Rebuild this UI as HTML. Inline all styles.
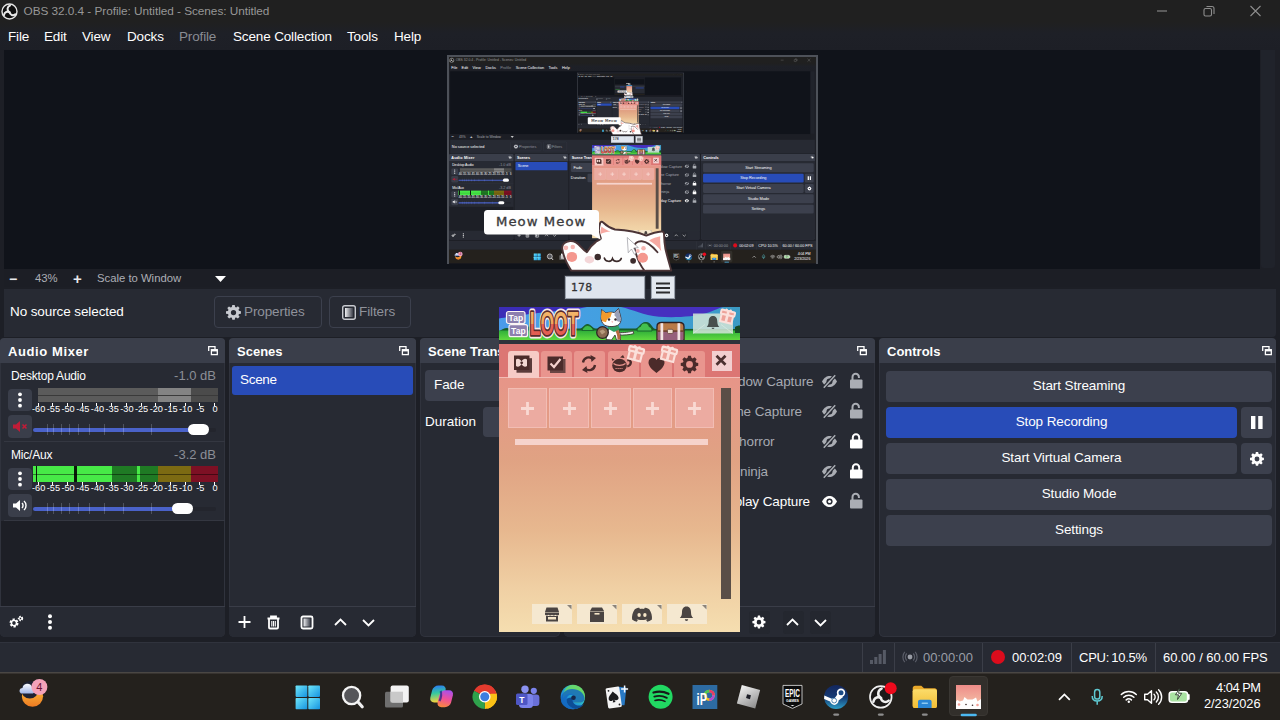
<!DOCTYPE html>
<html lang="en"><head><meta charset="utf-8"><title>OBS 32.0.4 - Profile: Untitled - Scenes: Untitled</title>
<style>
*{box-sizing:border-box;margin:0;padding:0}
html,body{width:1280px;height:720px;overflow:hidden;background:#1d1f26}
body{font-family:"Liberation Sans","DejaVu Sans",sans-serif;color:#fff}
.scr{position:absolute;left:0;top:0;width:1280px;height:720px;overflow:hidden;background:#1d1f26;font-size:14px;color:#fefefe}
.scr *{position:absolute}
.scr svg{overflow:visible}
.t{white-space:nowrap;line-height:1}
/* title + menu */
.titlebar{left:0;top:0;width:1280px;height:24px;background:#202020}
.titlebar .t{left:23.500px;top:5.800px;font-size:11.800px;color:#979797;letter-spacing:-0.04px}
.menubar{left:0;top:22px;width:1280px;height:28px;background:linear-gradient(#202020,#1e2027 40%,#1d1f26)}
.menubar .t{top:7.500px;font-size:13.5px;color:#fefefe;letter-spacing:-0.15px}
.menubar .dis{color:#8a8c93}
/* preview */
.pvarea{left:4px;top:50px;width:1256px;height:219px;background:#10131a}
.pvscroll{left:1261px;top:50px;width:13.500px;height:218px;background:#20232b;border-radius:0 0 3px 3px}
.pvframe{left:447px;top:55px;width:371px;height:208.500px;overflow:hidden;background:#10131a;border:2px solid #4d5159;border-bottom:0}
.pvframe .scr{transform-origin:0 0;transform:scale(0.28672)}
.zoomrow{left:4px;top:269px;width:1256px;height:17.500px;background:#1c1e25}
.zoomrow .t{top:3.500px;font-size:11.3px;color:#adafb6}
.ctx{left:4px;top:289px;width:1271.500px;height:47.500px;background:#272a33;border-radius:0 0 4px 0}
.ctx .t{font-size:13.5px;letter-spacing:-0.1px}
.cbtn{height:32px;top:7px;border:1px solid #3c404d;border-radius:4px;background:#272a33}
.cbtn .t{top:8px;color:#8f929b;font-size:13.5px}
/* docks */
.dock{top:340px;height:297px;background:#272a33;border-radius:0 0 5px 5px;box-shadow:inset 0 0 0 1px #30333d}
.dtitle{left:0;top:-2px;right:0;height:25px;background:#3a3e4a;border-radius:4px 4px 0 0}
.dock .dtitle .t{left:8px;top:6.500px;font-weight:bold;font-size:13px;letter-spacing:0;color:#fefefe}
.dtool{left:0;right:0;bottom:0;height:31px;border-top:1px solid #3a3d48;background:#272a33;border-radius:0 0 5px 5px}
.flt{top:8.300px;width:10px;height:10px}
/* mixer */
.mx .t{font-size:12px;letter-spacing:-0.2px}
.db{color:#8b8e97;font-size:13px !important;letter-spacing:0 !important}
.kb{width:24px;height:22px;background:#3a3e4a;border-radius:4px}
.lbl{font-size:9.200px !important;color:#fefefe;letter-spacing:0 !important}
.trk{height:4px;border-radius:2px;background:#4a62c9}
.knob{width:21px;height:11px;border-radius:6px;background:#fefefe}
/* buttons */
.btn{height:31px;border-radius:4px;background:#3c404d}
.btn .t{left:0;right:0;text-align:center;top:8.500px;font-size:13.5px;letter-spacing:-0.1px;color:#fefefe}
.src .t{font-size:13.5px;letter-spacing:-0.1px;color:#a6a9b1}
/* status */
.status{left:0;top:641.500px;width:1280px;height:31px;background:#272a33;box-shadow:inset 0 1px 0 #30333d}
.status .t{top:9.300px;font-size:13px;letter-spacing:-0.1px;color:#fefefe}
.sep{top:1px;width:1px;height:30px;background:#3b3e48}
/* taskbar */
.task{left:0;top:672px;width:1280px;height:48px;background:#24211d;box-shadow:inset 0 1.500px 0 #4a4744}
.task .t{font-size:12px;color:#fff}
</style></head>
<body>
<div class="scr"><div class="titlebar">
<svg style="left:1px;top:3px" width="17" height="17" viewBox="0 0 17 17"><circle cx="8.500" cy="8.500" r="7.500" fill="#0e0e0e" stroke="#e4e4e4" stroke-width="1.400"/><g fill="none" stroke="#e8e8e8" stroke-width="2" stroke-linecap="round"><path d="M9 2.500C6.200 3.600 5.800 7 7.800 8.700"/><path d="M14.300 11.200C12 13.200 8.900 11.900 8.500 9.200"/><path d="M3 12C3.400 9 6.600 7.800 8.700 9.400"/></g></svg>
<span class="t">OBS 32.0.4 - Profile: Untitled - Scenes: Untitled</span>
<svg style="left:1156px;top:5px" width="110" height="14" viewBox="0 0 110 14" fill="none" stroke="#8d8d8d" stroke-width="1.1"><path d="M1 6h10"/><rect x="48" y="3.500" width="7.500" height="7.500" rx="1.500"/><path d="M50.500 1.500h5.500a2 2 0 0 1 2 2v5.500"/><path d="M94.500 1l10 10M104.500 1l-10 10"/></svg>
</div>
<div class="menubar">
<span class="t" style="left:8px">File</span>
<span class="t" style="left:44px">Edit</span>
<span class="t" style="left:82px">View</span>
<span class="t" style="left:127px">Docks</span>
<span class="t dis" style="left:179px">Profile</span>
<span class="t" style="left:233px">Scene Collection</span>
<span class="t" style="left:347px">Tools</span>
<span class="t" style="left:394px">Help</span>
</div>
<div class="pvarea"></div>
<div class="pvscroll"></div>
<div class="pvframe"><div class="scr"><div class="titlebar">
<svg style="left:1px;top:3px" width="17" height="17" viewBox="0 0 17 17"><circle cx="8.500" cy="8.500" r="7.500" fill="#0e0e0e" stroke="#e4e4e4" stroke-width="1.400"/><g fill="none" stroke="#e8e8e8" stroke-width="2" stroke-linecap="round"><path d="M9 2.500C6.200 3.600 5.800 7 7.800 8.700"/><path d="M14.300 11.200C12 13.200 8.900 11.900 8.500 9.200"/><path d="M3 12C3.400 9 6.600 7.800 8.700 9.400"/></g></svg>
<span class="t">OBS 32.0.4 - Profile: Untitled - Scenes: Untitled</span>
<svg style="left:1156px;top:5px" width="110" height="14" viewBox="0 0 110 14" fill="none" stroke="#8d8d8d" stroke-width="1.1"><path d="M1 6h10"/><rect x="48" y="3.500" width="7.500" height="7.500" rx="1.500"/><path d="M50.500 1.500h5.500a2 2 0 0 1 2 2v5.500"/><path d="M94.500 1l10 10M104.500 1l-10 10"/></svg>
</div>
<div class="menubar">
<span class="t" style="left:8px">File</span>
<span class="t" style="left:44px">Edit</span>
<span class="t" style="left:82px">View</span>
<span class="t" style="left:127px">Docks</span>
<span class="t dis" style="left:179px">Profile</span>
<span class="t" style="left:233px">Scene Collection</span>
<span class="t" style="left:347px">Tools</span>
<span class="t" style="left:394px">Help</span>
</div>
<div class="pvarea"></div>
<div class="pvscroll"></div>
<div class="pvframe"><div class="scr"><div class="titlebar">
<svg style="left:1px;top:3px" width="17" height="17" viewBox="0 0 17 17"><circle cx="8.500" cy="8.500" r="7.500" fill="#0e0e0e" stroke="#e4e4e4" stroke-width="1.400"/><g fill="none" stroke="#e8e8e8" stroke-width="2" stroke-linecap="round"><path d="M9 2.500C6.200 3.600 5.800 7 7.800 8.700"/><path d="M14.300 11.200C12 13.200 8.900 11.900 8.500 9.200"/><path d="M3 12C3.400 9 6.600 7.800 8.700 9.400"/></g></svg>
<span class="t">OBS 32.0.4 - Profile: Untitled - Scenes: Untitled</span>
<svg style="left:1156px;top:5px" width="110" height="14" viewBox="0 0 110 14" fill="none" stroke="#8d8d8d" stroke-width="1.1"><path d="M1 6h10"/><rect x="48" y="3.500" width="7.500" height="7.500" rx="1.500"/><path d="M50.500 1.500h5.500a2 2 0 0 1 2 2v5.500"/><path d="M94.500 1l10 10M104.500 1l-10 10"/></svg>
</div>
<div class="menubar">
<span class="t" style="left:8px">File</span>
<span class="t" style="left:44px">Edit</span>
<span class="t" style="left:82px">View</span>
<span class="t" style="left:127px">Docks</span>
<span class="t dis" style="left:179px">Profile</span>
<span class="t" style="left:233px">Scene Collection</span>
<span class="t" style="left:347px">Tools</span>
<span class="t" style="left:394px">Help</span>
</div>
<div class="pvarea"></div>
<div class="pvscroll"></div>
<div class="pvframe"><div class="scr"><div style="left:4px;top:50px;width:1256px;height:219px;background:#10131a"></div><div style="left:0;top:338px;width:1276px;height:299px;background:#272a33"></div><div style="left:0;top:338px;width:1276px;height:25px;background:#3a3e4a"></div><div style="left:4px;top:289px;width:1272px;height:47px;background:#272a33"></div><div style="left:232px;top:366px;width:181px;height:29px;background:#284cb8"></div><div style="left:886px;top:406px;width:351px;height:31px;background:#284cb8"></div><div style="left:33px;top:466px;width:185px;height:16px;background:#37c03c"></div><div style="left:0;top:671px;width:1280px;height:49px;background:#24211d"></div><div style="left:499px;top:307px;width:241px;height:33px;background:#43a0e0"></div><div style="left:499px;top:344px;width:241px;height:288px;background:linear-gradient(#e89488,#f4dcb2)"></div><div style="left:484px;top:210px;width:115px;height:24px;background:#fefefe"></div><div style="left:565px;top:228px;width:105px;height:46px;border-radius:20px 20px 0 0;background:#fefefe"></div></div>
</div>
<div class="zoomrow">
<span class="t" style="left:5px;top:2.500px;font-size:14px;font-weight:bold;color:#e8e9ec">&#8722;</span>
<span class="t" style="left:31px">43%</span>
<span class="t" style="left:69px;top:1.500px;font-size:15px;font-weight:bold;color:#e8e9ec">+</span>
<span class="t" style="left:93px">Scale to Window</span>
<svg style="left:211px;top:7px" width="11" height="7" viewBox="0 0 11 7"><path d="M0 0h11l-5.500 6z" fill="#fefefe"/></svg>
</div>
<div class="ctx">
<span class="t" style="left:6px;top:16px">No source selected</span>
<div class="cbtn" style="left:210px;width:108px">
<svg style="left:11px;top:8px" width="15" height="15" viewBox="0 0 16 16"><path fill="#c8cad0" fill-rule="evenodd" d="M6.700 0h2.600l.4 2.100 1.200.5 1.800-1.200 1.800 1.800-1.200 1.800.5 1.200 2.100.4v2.600l-2.100.4-.5 1.200 1.200 1.800-1.800 1.800-1.800-1.200-1.200.5-.4 2.100H6.700l-.4-2.100-1.200-.5-1.800 1.200-1.800-1.800 1.200-1.800-.5-1.200L0 9.300V6.700l2.100-.4.500-1.200-1.200-1.800 1.800-1.800 1.800 1.200 1.200-.5zM8 5.200a2.800 2.800 0 1 0 0 5.600 2.800 2.800 0 0 0 0-5.600z"/></svg>
<span class="t" style="left:29px">Properties</span></div>
<div class="cbtn" style="left:325px;width:82px">
<svg style="left:12px;top:8px" width="14" height="15" viewBox="0 0 14 15"><rect x=".7" y=".7" width="12.600" height="13.600" rx="2" fill="none" stroke="#c8cad0" stroke-width="1.400"/><rect x="3" y="3" width="8" height="9" fill="url(#fg)"/></svg>
<span class="t" style="left:29px">Filters</span></div>
</div>

<!-- Audio mixer -->
<div class="dock mx" style="left:0;width:225px">
<div class="dtitle"><span class="t" style="letter-spacing:.6px !important">Audio Mixer</span><svg class="flt" style="left:208px" viewBox="0 0 10 10" fill="none" stroke="#fefefe" stroke-width="1.300"><path d="M.7 5V.7h6.300V3"/><rect x="3.400" y="3.700" width="5.900" height="4.900" fill="#3a3e4a"/><path d="M3.400 4.600h5.900" stroke-width="1.600"/></svg></div>
<div style="left:1px;top:181px;width:223px;height:85px;background:#1d1f26"></div>
<div style="left:4px;top:101px;width:221px;height:1px;background:#343741"></div>
<div style="left:4px;top:180px;width:221px;height:1px;background:#343741"></div>
<span class="t" style="left:11px;top:30px">Desktop Audio</span>
<span class="t db" style="right:9px;top:29px">-1.0 dB</span>
<div class="kb" style="left:8px;top:49px"><svg style="left:9px;top:3px" width="6" height="16" viewBox="0 0 6 16" fill="#fefefe"><circle cx="3" cy="2.300" r="1.900"/><circle cx="3" cy="8" r="1.900"/><circle cx="3" cy="13.700" r="1.900"/></svg></div>
<div style="left:38px;top:48px;width:180px;height:14px;background:linear-gradient(90deg,#5b5b5b 0,#5b5b5b 66.500%,#838383 66.500%,#838383 85%,#4b4b4b 85%)"></div>
<div style="left:38px;top:54.500px;width:180px;height:1px;background:#3a3a3a"></div>
<div style="left:37.6px;top:63.0px;width:1px;height:3px;background:#fefefe"></div><span class="t lbl" style="left:30.7px;top:65.2px;width:16px;text-align:center">-60</span><div style="left:52.3px;top:63.0px;width:1px;height:3px;background:#fefefe"></div><span class="t lbl" style="left:45.4px;top:65.2px;width:16px;text-align:center">-55</span><div style="left:67.0px;top:63.0px;width:1px;height:3px;background:#fefefe"></div><span class="t lbl" style="left:60.1px;top:65.2px;width:16px;text-align:center">-50</span><div style="left:81.7px;top:63.0px;width:1px;height:3px;background:#fefefe"></div><span class="t lbl" style="left:74.8px;top:65.2px;width:16px;text-align:center">-45</span><div style="left:96.4px;top:63.0px;width:1px;height:3px;background:#fefefe"></div><span class="t lbl" style="left:89.5px;top:65.2px;width:16px;text-align:center">-40</span><div style="left:111.1px;top:63.0px;width:1px;height:3px;background:#fefefe"></div><span class="t lbl" style="left:104.2px;top:65.2px;width:16px;text-align:center">-35</span><div style="left:125.8px;top:63.0px;width:1px;height:3px;background:#fefefe"></div><span class="t lbl" style="left:118.9px;top:65.2px;width:16px;text-align:center">-30</span><div style="left:140.5px;top:63.0px;width:1px;height:3px;background:#fefefe"></div><span class="t lbl" style="left:133.6px;top:65.2px;width:16px;text-align:center">-25</span><div style="left:155.2px;top:63.0px;width:1px;height:3px;background:#fefefe"></div><span class="t lbl" style="left:148.3px;top:65.2px;width:16px;text-align:center">-20</span><div style="left:169.9px;top:63.0px;width:1px;height:3px;background:#fefefe"></div><span class="t lbl" style="left:163.0px;top:65.2px;width:16px;text-align:center">-15</span><div style="left:184.6px;top:63.0px;width:1px;height:3px;background:#fefefe"></div><span class="t lbl" style="left:177.7px;top:65.2px;width:16px;text-align:center">-10</span><div style="left:199.3px;top:63.0px;width:1px;height:3px;background:#fefefe"></div><span class="t lbl" style="left:192.4px;top:65.2px;width:16px;text-align:center">-5</span><div style="left:214.0px;top:63.0px;width:1px;height:3px;background:#fefefe"></div><span class="t lbl" style="left:207.0px;top:65.2px;width:16px;text-align:center">0</span>
<div class="kb" style="left:8px;top:75px;height:23px"><svg style="left:4px;top:5px" width="16" height="13" viewBox="0 0 16 13"><path d="M1 4.500h3l4-3.500v11l-4-3.500H1z" fill="#c01c37"/><path d="M10.500 4.500l4 4m0-4l-4 4" stroke="#c01c37" stroke-width="1.600" fill="none"/></svg></div>
<div style="left:46.5px;top:84.0px;width:1px;height:11px;background:#4e525e"></div><div style="left:52.5px;top:84.0px;width:1px;height:11px;background:#4e525e"></div><div style="left:60.6px;top:84.0px;width:1px;height:11px;background:#4e525e"></div><div style="left:68.5px;top:84.0px;width:1px;height:11px;background:#4e525e"></div><div style="left:77.5px;top:84.0px;width:1px;height:11px;background:#4e525e"></div><div style="left:89.4px;top:84.0px;width:1px;height:11px;background:#4e525e"></div><div style="left:103.5px;top:84.0px;width:1px;height:11px;background:#4e525e"></div><div style="left:122.5px;top:84.0px;width:1px;height:11px;background:#4e525e"></div><div style="left:150.6px;top:84.0px;width:1px;height:11px;background:#4e525e"></div><div style="left:33px;top:87.5px;width:183px;height:4px;border-radius:2px;background:#23252d"></div><div class="trk" style="left:33px;top:87.5px;width:161.0px"></div><div style="left:46.5px;top:87.5px;width:1px;height:4px;background:#6f83d8"></div><div style="left:52.5px;top:87.5px;width:1px;height:4px;background:#6f83d8"></div><div style="left:60.6px;top:87.5px;width:1px;height:4px;background:#6f83d8"></div><div style="left:68.5px;top:87.5px;width:1px;height:4px;background:#6f83d8"></div><div style="left:77.5px;top:87.5px;width:1px;height:4px;background:#6f83d8"></div><div style="left:89.4px;top:87.5px;width:1px;height:4px;background:#6f83d8"></div><div style="left:103.5px;top:87.5px;width:1px;height:4px;background:#6f83d8"></div><div style="left:122.5px;top:87.5px;width:1px;height:4px;background:#6f83d8"></div><div style="left:150.6px;top:87.5px;width:1px;height:4px;background:#6f83d8"></div><div class="knob" style="left:188.0px;top:84.0px"></div>
<span class="t" style="left:11px;top:109px">Mic/Aux</span>
<span class="t db" style="right:9px;top:108px">-3.2 dB</span>
<div class="kb" style="left:8px;top:128px"><svg style="left:9px;top:3px" width="6" height="16" viewBox="0 0 6 16" fill="#fefefe"><circle cx="3" cy="2.300" r="1.900"/><circle cx="3" cy="8" r="1.900"/><circle cx="3" cy="13.700" r="1.900"/></svg></div>
<div style="left:33px;top:126px;width:185px;height:16px;background:linear-gradient(90deg,#47e947 0,#47e947 2.700px,#0a1a0a 2.700px,#0a1a0a 4.300px,#47e947 4.300px,#47e947 41px,#0a1a0a 41px,#0a1a0a 44px,#47e947 44px,#47e947 79px,#1f7a24 79px,#1f7a24 104px,#47e947 104px,#47e947 107px,#1f7a24 107px,#1f7a24 125px,#7c6a12 125px,#7c6a12 158px,#7d1024 158px)"></div>
<div style="left:33px;top:133.500px;width:185px;height:1px;background:rgba(0,0,0,.45)"></div>
<div style="left:37.6px;top:142.0px;width:1px;height:3px;background:#fefefe"></div><span class="t lbl" style="left:30.7px;top:144.2px;width:16px;text-align:center">-60</span><div style="left:52.3px;top:142.0px;width:1px;height:3px;background:#fefefe"></div><span class="t lbl" style="left:45.4px;top:144.2px;width:16px;text-align:center">-55</span><div style="left:67.0px;top:142.0px;width:1px;height:3px;background:#fefefe"></div><span class="t lbl" style="left:60.1px;top:144.2px;width:16px;text-align:center">-50</span><div style="left:81.7px;top:142.0px;width:1px;height:3px;background:#fefefe"></div><span class="t lbl" style="left:74.8px;top:144.2px;width:16px;text-align:center">-45</span><div style="left:96.4px;top:142.0px;width:1px;height:3px;background:#fefefe"></div><span class="t lbl" style="left:89.5px;top:144.2px;width:16px;text-align:center">-40</span><div style="left:111.1px;top:142.0px;width:1px;height:3px;background:#fefefe"></div><span class="t lbl" style="left:104.2px;top:144.2px;width:16px;text-align:center">-35</span><div style="left:125.8px;top:142.0px;width:1px;height:3px;background:#fefefe"></div><span class="t lbl" style="left:118.9px;top:144.2px;width:16px;text-align:center">-30</span><div style="left:140.5px;top:142.0px;width:1px;height:3px;background:#fefefe"></div><span class="t lbl" style="left:133.6px;top:144.2px;width:16px;text-align:center">-25</span><div style="left:155.2px;top:142.0px;width:1px;height:3px;background:#fefefe"></div><span class="t lbl" style="left:148.3px;top:144.2px;width:16px;text-align:center">-20</span><div style="left:169.9px;top:142.0px;width:1px;height:3px;background:#fefefe"></div><span class="t lbl" style="left:163.0px;top:144.2px;width:16px;text-align:center">-15</span><div style="left:184.6px;top:142.0px;width:1px;height:3px;background:#fefefe"></div><span class="t lbl" style="left:177.7px;top:144.2px;width:16px;text-align:center">-10</span><div style="left:199.3px;top:142.0px;width:1px;height:3px;background:#fefefe"></div><span class="t lbl" style="left:192.4px;top:144.2px;width:16px;text-align:center">-5</span><div style="left:214.0px;top:142.0px;width:1px;height:3px;background:#fefefe"></div><span class="t lbl" style="left:207.0px;top:144.2px;width:16px;text-align:center">0</span>
<div class="kb" style="left:8px;top:154px;height:23px"><svg style="left:4px;top:5px" width="16" height="13" viewBox="0 0 16 13"><path d="M1 4.500h3l4-3.500v11l-4-3.500H1z" fill="#fefefe"/><path d="M10 4a3.500 3.500 0 0 1 0 5M12 2a6 6 0 0 1 0 9" stroke="#fefefe" stroke-width="1.400" fill="none"/></svg></div>
<div style="left:46.5px;top:163.0px;width:1px;height:11px;background:#4e525e"></div><div style="left:52.5px;top:163.0px;width:1px;height:11px;background:#4e525e"></div><div style="left:60.6px;top:163.0px;width:1px;height:11px;background:#4e525e"></div><div style="left:68.5px;top:163.0px;width:1px;height:11px;background:#4e525e"></div><div style="left:77.5px;top:163.0px;width:1px;height:11px;background:#4e525e"></div><div style="left:89.4px;top:163.0px;width:1px;height:11px;background:#4e525e"></div><div style="left:103.5px;top:163.0px;width:1px;height:11px;background:#4e525e"></div><div style="left:122.5px;top:163.0px;width:1px;height:11px;background:#4e525e"></div><div style="left:150.6px;top:163.0px;width:1px;height:11px;background:#4e525e"></div><div style="left:33px;top:166.5px;width:183px;height:4px;border-radius:2px;background:#23252d"></div><div class="trk" style="left:33px;top:166.5px;width:145.0px"></div><div style="left:46.5px;top:166.5px;width:1px;height:4px;background:#6f83d8"></div><div style="left:52.5px;top:166.5px;width:1px;height:4px;background:#6f83d8"></div><div style="left:60.6px;top:166.5px;width:1px;height:4px;background:#6f83d8"></div><div style="left:68.5px;top:166.5px;width:1px;height:4px;background:#6f83d8"></div><div style="left:77.5px;top:166.5px;width:1px;height:4px;background:#6f83d8"></div><div style="left:89.4px;top:166.5px;width:1px;height:4px;background:#6f83d8"></div><div style="left:103.5px;top:166.5px;width:1px;height:4px;background:#6f83d8"></div><div style="left:122.5px;top:166.5px;width:1px;height:4px;background:#6f83d8"></div><div style="left:150.6px;top:166.5px;width:1px;height:4px;background:#6f83d8"></div><div class="knob" style="left:172.0px;top:163.0px"></div>
<div class="dtool"><svg style="left:8px;top:7.500px" width="16" height="14" viewBox="0 0 16 14"><circle cx="6" cy="8" r="3.200" fill="none" stroke="#fefefe" stroke-width="2.600" stroke-dasharray="2 1.350"/><circle cx="6" cy="8" r="2.600" fill="none" stroke="#fefefe" stroke-width="1.400"/><circle cx="12.500" cy="3.500" r="1.800" fill="none" stroke="#fefefe" stroke-width="1.800" stroke-dasharray="1.300 .9"/><circle cx="12.500" cy="3.500" r="1.400" fill="none" stroke="#fefefe" stroke-width="1"/></svg>
<svg style="left:47px;top:6.500px" width="6" height="16" viewBox="0 0 6 16" fill="#fefefe"><circle cx="3" cy="2.300" r="2"/><circle cx="3" cy="8" r="2"/><circle cx="3" cy="13.700" r="2"/></svg></div>
</div>

<!-- Scenes -->
<div class="dock" style="left:229px;width:187px">
<div class="dtitle"><span class="t">Scenes</span><svg class="flt" style="left:170px" viewBox="0 0 10 10" fill="none" stroke="#fefefe" stroke-width="1.300"><path d="M.7 5V.7h6.300V3"/><rect x="3.400" y="3.700" width="5.900" height="4.900" fill="#3a3e4a"/><path d="M3.400 4.600h5.900" stroke-width="1.600"/></svg></div>
<div style="left:3px;top:25.500px;width:181px;height:29.500px;background:#284cb8;border-radius:3px"><span class="t" style="left:8px;top:7.500px;font-size:13.5px;letter-spacing:-0.3px">Scene</span></div>
<div class="dtool"><svg style="left:9px;top:7.500px" width="140" height="15" viewBox="0 0 140 15" fill="none" stroke="#fefefe" stroke-width="1.800"><path d="M6.500 1v12M.5 7h12"/><path d="M29.500 3.500h12M33 3V1.500h5V3M31 4v8.500a1 1 0 0 0 1 1h7a1 1 0 0 0 1-1V4" /><path d="M33.800 6v5.500M35.500 6v5.500M37.300 6v5.500" stroke-width="1.100"/><rect x="63.500" y="1.500" width="11" height="12" rx="1.500"/><rect x="65.500" y="3.500" width="7" height="8" fill="url(#fg)" stroke="none"/><path d="M97 10l5.500-5.500 5.500 5.500"/><path d="M125 5l5.500 5.500 5.500-5.500"/></svg></div>
</div>

<!-- Scene transitions + sources -->
<div class="dock" style="left:420px;width:140px">
<div class="dtitle"><span class="t">Scene Transitions</span></div>
<div class="btn" style="left:5px;top:30px;width:131px;height:30.500px"><span class="t" style="left:9px;right:auto;top:8px">Fade</span></div>
<span class="t" style="left:5px;top:75px;font-size:13.5px">Duration</span>
<div class="btn" style="left:63px;top:66.500px;width:73px;height:30.500px"></div>
</div>
<div class="dock src" style="left:564px;width:310.500px">
<div class="dtitle"><span class="t">Sources</span><svg class="flt" style="left:293px" viewBox="0 0 10 10" fill="none" stroke="#fefefe" stroke-width="1.300"><path d="M.7 5V.7h6.300V3"/><rect x="3.400" y="3.700" width="5.900" height="4.900" fill="#3a3e4a"/><path d="M3.400 4.600h5.900" stroke-width="1.600"/></svg></div>
<span class="t" style="right:61px;top:34.500px">Window Capture</span>
<span class="t" style="right:72.500px;top:64.500px">Game Capture</span>
<span class="t" style="right:100px;top:94.500px">horror</span>
<span class="t" style="right:106.500px;top:124.500px">ninja</span>
<span class="t" style="right:64.500px;top:154.500px;color:#fefefe">Display Capture</span>
<svg style="left:257px;top:33.5px" width="17" height="15" viewBox="0 0 17 15"><path d="M1 7.500C3.500 3.200 6 2 8.500 2s5 1.200 7.500 5.500C13.500 11.800 11 13 8.500 13S3.500 11.800 1 7.500z" fill="#aaadb4"/><circle cx="8.500" cy="7.500" r="3" fill="#272a33"/><circle cx="8.500" cy="7.500" r="1.400" fill="#aaadb4"/><path d="M2.500 14L14.500 1" stroke="#272a33" stroke-width="3.600"/><path d="M2.800 13.800L14.200 1.200" stroke="#aaadb4" stroke-width="1.500"/></svg><svg style="left:285px;top:32.0px" width="14" height="17" viewBox="0 0 14 17"><path d="M3.500 8V5a3.200 3.200 0 0 1 6.400 0v1" fill="none" stroke="#aaadb4" stroke-width="2"/><rect x="1" y="7.500" width="12.500" height="9" rx="1" fill="#aaadb4"/></svg>
<svg style="left:257px;top:63.5px" width="17" height="15" viewBox="0 0 17 15"><path d="M1 7.500C3.500 3.200 6 2 8.500 2s5 1.200 7.500 5.500C13.500 11.800 11 13 8.500 13S3.500 11.800 1 7.500z" fill="#aaadb4"/><circle cx="8.500" cy="7.500" r="3" fill="#272a33"/><circle cx="8.500" cy="7.500" r="1.400" fill="#aaadb4"/><path d="M2.500 14L14.500 1" stroke="#272a33" stroke-width="3.600"/><path d="M2.800 13.800L14.200 1.200" stroke="#aaadb4" stroke-width="1.500"/></svg><svg style="left:285px;top:62.0px" width="14" height="17" viewBox="0 0 14 17"><path d="M3.500 8V5a3.200 3.200 0 0 1 6.400 0v1" fill="none" stroke="#aaadb4" stroke-width="2"/><rect x="1" y="7.500" width="12.500" height="9" rx="1" fill="#aaadb4"/></svg>
<svg style="left:257px;top:93.5px" width="17" height="15" viewBox="0 0 17 15"><path d="M1 7.500C3.500 3.200 6 2 8.500 2s5 1.200 7.500 5.500C13.500 11.800 11 13 8.500 13S3.500 11.800 1 7.500z" fill="#aaadb4"/><circle cx="8.500" cy="7.500" r="3" fill="#272a33"/><circle cx="8.500" cy="7.500" r="1.400" fill="#aaadb4"/><path d="M2.500 14L14.500 1" stroke="#272a33" stroke-width="3.600"/><path d="M2.800 13.800L14.200 1.200" stroke="#aaadb4" stroke-width="1.500"/></svg><svg style="left:285px;top:92.0px" width="14" height="17" viewBox="0 0 14 17"><path d="M3.800 9V5.500a3.200 3.200 0 0 1 6.400 0V9" fill="none" stroke="#fefefe" stroke-width="2"/><rect x="1" y="7.500" width="12.500" height="9" rx="1" fill="#fefefe"/></svg>
<svg style="left:257px;top:123.5px" width="17" height="15" viewBox="0 0 17 15"><path d="M1 7.500C3.500 3.200 6 2 8.500 2s5 1.200 7.500 5.500C13.500 11.800 11 13 8.500 13S3.500 11.800 1 7.500z" fill="#aaadb4"/><circle cx="8.500" cy="7.500" r="3" fill="#272a33"/><circle cx="8.500" cy="7.500" r="1.400" fill="#aaadb4"/><path d="M2.500 14L14.500 1" stroke="#272a33" stroke-width="3.600"/><path d="M2.800 13.800L14.200 1.200" stroke="#aaadb4" stroke-width="1.500"/></svg><svg style="left:285px;top:122.0px" width="14" height="17" viewBox="0 0 14 17"><path d="M3.800 9V5.500a3.200 3.200 0 0 1 6.400 0V9" fill="none" stroke="#fefefe" stroke-width="2"/><rect x="1" y="7.500" width="12.500" height="9" rx="1" fill="#fefefe"/></svg>
<svg style="left:257px;top:153.5px" width="17" height="15" viewBox="0 0 17 15"><path d="M1 7.500C3.500 3.200 6 2 8.500 2s5 1.200 7.500 5.500C13.500 11.800 11 13 8.500 13S3.500 11.800 1 7.500z" fill="#fefefe"/><circle cx="8.500" cy="7.500" r="3.100" fill="#272a33"/><circle cx="8.500" cy="7.500" r="1.600" fill="#fefefe"/></svg><svg style="left:285px;top:152.0px" width="14" height="17" viewBox="0 0 14 17"><path d="M3.500 8V5a3.200 3.200 0 0 1 6.400 0v1" fill="none" stroke="#aaadb4" stroke-width="2"/><rect x="1" y="7.500" width="12.500" height="9" rx="1" fill="#aaadb4"/></svg>
<div class="dtool"><div style="left:184.500px;top:4px;width:21px;height:22.500px;border-radius:3px;background:#24272f"></div><div style="left:218.500px;top:4px;width:21px;height:22.500px;border-radius:3px;background:#24272f"></div><div style="left:246px;top:4px;width:21px;height:22.500px;border-radius:3px;background:#24272f"></div><svg style="left:187px;top:7px" width="80" height="16" viewBox="0 0 80 16"><path transform="translate(1.400 1.600) scale(.82)" fill="#fefefe" fill-rule="evenodd" d="M6.700 0h2.600l.4 2.100 1.200.5 1.800-1.200 1.800 1.800-1.200 1.800.5 1.200 2.100.4v2.600l-2.100.4-.5 1.200 1.200 1.800-1.800 1.800-1.800-1.200-1.200.5-.4 2.100H6.700l-.4-2.100-1.200-.5-1.800 1.200-1.800-1.800 1.200-1.800-.5-1.200L0 9.300V6.700l2.100-.4.500-1.200-1.200-1.800 1.800-1.800 1.800 1.200 1.200-.5zM8 5.200a2.800 2.800 0 1 0 0 5.600 2.800 2.800 0 0 0 0-5.600z"/><g fill="none" stroke="#fefefe" stroke-width="1.800"><path d="M36 11l5.500-5.500L47 11"/><path d="M64 6l5.500 5.500L75 6"/></g></svg></div>
</div>

<!-- Controls -->
<div class="dock" style="left:879px;width:397px">
<div class="dtitle"><span class="t">Controls</span><svg class="flt" style="left:383px" viewBox="0 0 10 10" fill="none" stroke="#fefefe" stroke-width="1.300"><path d="M.7 5V.7h6.300V3"/><rect x="3.400" y="3.700" width="5.900" height="4.900" fill="#3a3e4a"/><path d="M3.400 4.600h5.900" stroke-width="1.600"/></svg></div>
<div class="btn" style="left:7px;top:30.500px;width:386px"><span class="t">Start Streaming</span></div>
<div class="btn" style="left:7px;top:66.500px;width:351px;background:#284cb8"><span class="t">Stop Recording</span></div>
<div class="btn" style="left:362px;top:66.500px;width:31px"><svg style="left:10px;top:9px" width="12" height="13" viewBox="0 0 12 13" fill="#fefefe"><rect x="0" y="0" width="4.400" height="13"/><rect x="7.200" y="0" width="4.400" height="13"/></svg></div>
<div class="btn" style="left:7px;top:102.500px;width:351px"><span class="t">Start Virtual Camera</span></div>
<div class="btn" style="left:362px;top:102.500px;width:31px"><svg style="left:9px;top:9px" width="14" height="14" viewBox="0 0 16 16"><path fill="#fefefe" fill-rule="evenodd" d="M6.700 0h2.600l.4 2.100 1.200.5 1.800-1.200 1.800 1.800-1.200 1.800.5 1.200 2.100.4v2.600l-2.100.4-.5 1.200 1.200 1.800-1.800 1.800-1.800-1.200-1.200.5-.4 2.100H6.700l-.4-2.100-1.200-.5-1.800 1.200-1.800-1.800 1.200-1.800-.5-1.200L0 9.300V6.700l2.100-.4.500-1.200-1.200-1.800 1.800-1.800 1.800 1.200 1.200-.5zM8 5.200a2.800 2.800 0 1 0 0 5.600 2.800 2.800 0 0 0 0-5.600z"/></svg></div>
<div class="btn" style="left:7px;top:138.500px;width:386px"><span class="t">Studio Mode</span></div>
<div class="btn" style="left:7px;top:174.500px;width:386px"><span class="t">Settings</span></div>
</div>

<!-- status bar -->
<div class="status">
<div class="sep" style="left:862px"></div><div class="sep" style="left:894px"></div><div class="sep" style="left:982px"></div><div class="sep" style="left:1071px"></div><div class="sep" style="left:1155px"></div>
<svg style="left:870px;top:8.500px" width="16" height="14" viewBox="0 0 16 14" fill="#565a65"><rect x="0" y="10" width="3" height="4"/><rect x="4.300" y="7" width="3" height="7"/><rect x="8.600" y="4" width="3" height="10"/><rect x="12.900" y="0" width="3" height="14"/></svg>
<svg style="left:903px;top:9.500px" width="14" height="12" viewBox="0 0 14 12"><circle cx="7" cy="6" r="2.400" fill="#9a9da6"/><path d="M3.800 2.500a5 5 0 0 0 0 7M10.200 2.500a5 5 0 0 1 0 7M1.800 .8a8 8 0 0 0 0 10.400M12.200 .8a8 8 0 0 1 0 10.400" fill="none" stroke="#5a5d68" stroke-width="1.200"/></svg>
<span class="t" style="left:923px;color:#9a9da6">00:00:00</span>
<div style="left:991px;top:8.500px;width:14px;height:14px;border-radius:7px;background:#dc0c1c"></div>
<span class="t" style="left:1012px">00:02:09</span>
<span class="t" style="left:1079px;word-spacing:-1.200px;letter-spacing:-.25px">CPU: 10.5%</span>
<span class="t" style="left:1163px;word-spacing:0;letter-spacing:0">60.00 / 60.00 FPS</span>
</div>
<div class="task">
<div style="left:948.500px;top:4px;width:39.500px;height:40px;border-radius:4px;background:#322f2b;border:1px solid #3a3733"></div>
<svg style="left:0;top:-.3px" width="1280" height="49" viewBox="0 671 1280 49">

<!-- widgets -->
<circle cx="32.500" cy="695.200" r="10.600" fill="url(#moon)"/>
<circle cx="29.800" cy="688.800" r="8.800" fill="#1d2232"/>
<path d="M21 692.500a3 3 0 0 1 1.500-5.600 5 5 0 0 1 9.500-1.200 3.600 3.600 0 0 1 1 6.800z" fill="url(#cloud)"/>
<circle cx="39.400" cy="686" r="8" fill="#f4a2ba"/>
<text x="39.400" y="690" text-anchor="middle" font-family="Liberation Sans,sans-serif" font-size="11" fill="#6d1233">4</text>
<!-- start -->
<g fill="url(#win)"><rect x="295.600" y="684.500" width="11.700" height="11.400" rx=".8"/><rect x="308.300" y="684.500" width="11.700" height="11.400" rx=".8"/><rect x="295.600" y="696.900" width="11.700" height="11.400" rx=".8"/><rect x="308.300" y="696.900" width="11.700" height="11.400" rx=".8"/></g>
<!-- search -->
<path d="M358 701l4.200 4.800" stroke="#f0f0f0" stroke-width="3.200" stroke-linecap="round"/>
<circle cx="351.600" cy="694.500" r="8.600" fill="#56565a" stroke="#f4f4f4" stroke-width="2.300"/>
<!-- task view -->
<rect x="385" y="690.700" width="18" height="15.700" rx="1.500" fill="#6f6f6f"/>
<rect x="390.600" y="684.500" width="18.200" height="16.900" rx="2" fill="#f3f3f3"/>
<rect x="390.600" y="690.700" width="12.400" height="10.700" fill="#c9c9c9"/>
<!-- copilot -->
<rect x="431" y="684.500" width="13.500" height="17" rx="5" transform="skewX(-14) translate(173 0)" fill="url(#cop1)"/>
<rect x="438.500" y="689.300" width="13.500" height="17" rx="5" transform="skewX(-14) translate(174 0)" fill="url(#cop2)"/>
<path d="M440.500 690c1.500 2 .5 7-1 10" stroke="#1f2a8a" stroke-width="2.200" fill="none" opacity=".75"/>
<!-- chrome -->
<g transform="translate(484.750 695.750)">
<path d="M0 0L-10.570 -6.100A12.200 12.200 0 0 1 10.570 -6.100z" fill="#e33b2e"/>
<path d="M0 0L10.570 -6.100A12.200 12.200 0 0 1 0 12.200z" fill="#fbc116"/>
<path d="M0 0L0 12.200A12.200 12.200 0 0 1 -10.570 -6.100z" fill="#2fa24c"/>
<path d="M-10.570 -6.100A12.200 12.200 0 0 1 10.570 -6.100L11.800 -3H0z" fill="#e33b2e"/>
<path d="M11.800 -3a12.200 12.200 0 0 1-9.300 14.900L5 2z" fill="#fbc116"/>
<circle r="5.800" fill="#fefefe"/><circle r="4.500" fill="#3b7de0"/>
</g>
<!-- teams -->
<circle cx="533.800" cy="689.800" r="3.100" fill="#7b83eb"/>
<rect x="529" y="693.500" width="10.400" height="11.500" rx="3" fill="#6a70d8"/>
<circle cx="525" cy="688.200" r="3.700" fill="#8b92f0"/>
<rect x="519" y="692.700" width="14" height="14.300" rx="3.500" fill="#7b83eb"/>
<rect x="516" y="692.500" width="11.500" height="11.500" rx="1.500" fill="#4e56c4"/>
<text x="521.750" y="701.600" text-anchor="middle" font-family="Liberation Sans,sans-serif" font-weight="bold" font-size="8.500" fill="#fefefe">T</text>
<!-- edge -->
<circle cx="572.800" cy="696" r="12.200" fill="url(#edge)"/>
<path d="M572 684c7-.5 13 5 13 12 0 3-2 5.500-5.500 5.500h-5c-1.500 0-1.500-1.500-.5-2.500 2-2 1-6-3-6.500-3-.3-6 1.500-8 4.500 0-7 3.500-12.500 9-13z" fill="#6fd95c" opacity=".8"/>
<path d="M561 699c0-7 5-11 11-11 7 0 11.500 4 12.500 8.500 .5 3-1.500 5-5 5h-6.500c-1.500 0-1.500-1.500-.5-2.500 1.500-1.500 1.500-3.500 0-4.500-2.500-1.500-6 .5-6 4 0 5 4 8.500 9 9.500-7 1-14.500-3-14.500-9z" fill="#1468c0" opacity=".85"/>
<path d="M566.500 698.500c0 5 4 8.500 9 9.500 4-.5 7-2.500 8.500-5-3 2-7 2-9.500 0-2-1.500-2.500-4-1.500-6-2-1.200-6.500.5-6.500 1.500z" fill="#0d4d96"/>
<circle cx="573.500" cy="696.800" r="2.300" fill="#17274a"/>
<!-- solitaire -->
<rect x="617" y="686" width="8.500" height="18" rx="1" fill="#2879c4" transform="rotate(6 621 695)"/>
<rect x="606.800" y="686.300" width="13.800" height="20.500" rx="1.300" fill="#f4f4f4" transform="rotate(-8 613.500 696.500)"/>
<path d="M613.500 690.500c2.500 2.800 5 4.500 5 6.800 0 2.700-3.300 3.200-4.500 1.200l.9 2.800h-2.800l.9-2.800c-1.200 2-4.500 1.500-4.500-1.200 0-2.300 2.500-4 5-6.800z" fill="#1c1c1e" transform="rotate(-8 613.500 696.500)"/>
<circle cx="608.500" cy="689.800" r=".9" fill="#1c1c1e"/><circle cx="619.500" cy="703.500" r=".9" fill="#1c1c1e"/>
<path d="M624.600 684.500v7M621.100 688h7" stroke="#f4f8ff" stroke-width="1.500"/>
<!-- spotify -->
<circle cx="660.600" cy="695.750" r="12" fill="#21d862"/>
<g fill="none" stroke="#17191a" stroke-linecap="round"><path d="M653.500 691.500c5-1.500 10.500-1 15 1.300" stroke-width="2.300"/><path d="M654.300 695.600c4.300-1.200 8.700-.8 12.500 1.200" stroke-width="1.900"/><path d="M655 699.400c3.500-1 7-.6 10 1" stroke-width="1.600"/></g>
<!-- ibis paint -->
<rect x="692.500" y="684" width="24.800" height="24" fill="#2d6ba2"/>
<circle cx="709.300" cy="694.300" r="4.300" fill="none" stroke="#f0c020" stroke-width="2.600"/>
<path d="M709.300 690a4.300 4.300 0 0 1 4.300 4.300" fill="none" stroke="#e8386a" stroke-width="2.600"/>
<path d="M705 694.300a4.300 4.300 0 0 1 4.300-4.300" fill="none" stroke="#48c858" stroke-width="2.600"/>
<path d="M713.600 694.300a4.300 4.300 0 0 1-4.300 4.300" fill="none" stroke="#b048d8" stroke-width="2.600"/>
<text x="696.600" y="704" font-family="Liberation Sans,sans-serif" font-weight="bold" font-size="16" fill="#fefefe" textLength="10.500" lengthAdjust="spacingAndGlyphs">iP</text>
<!-- roblox -->
<g transform="rotate(15 748.500 695.750)"><rect x="739" y="686.250" width="19" height="19" fill="url(#rbx)"/><rect x="746.500" y="693.700" width="4" height="4" fill="#1d1f28"/></g>
<!-- epic -->
<path d="M783 684.400h19v18.600l-9.500 4.400-9.500-4.400z" fill="#0c0c0c" stroke="#e8e8e8" stroke-width=".8"/>
<text x="792.500" y="696.300" text-anchor="middle" font-family="Liberation Sans,sans-serif" font-weight="bold" font-size="10.500" fill="#fefefe" textLength="15" lengthAdjust="spacingAndGlyphs">EPIC</text>
<text x="792.500" y="701" text-anchor="middle" font-family="Liberation Sans,sans-serif" font-weight="bold" font-size="3.800" fill="#fefefe" textLength="13" lengthAdjust="spacingAndGlyphs">GAMES</text>
<path d="M790.500 704h4l-2 1.200z" fill="#e8e8e8"/>
<!-- steam -->
<circle cx="836.100" cy="695.900" r="12" fill="url(#steam)"/>
<path d="M824.300 694.500l7.500 3.200c1-.6 2-.8 3-.6l3.300-4.600 5 3.600-4.500 3.500c0 2.500-2 4.300-4.300 4.300-2 0-3.700-1.400-4.200-3.300l-6-2.500z" fill="#fefefe"/>
<circle cx="841" cy="691.700" r="4.200" fill="#fefefe"/><circle cx="841" cy="691.700" r="2.500" fill="#1b4a86"/>
<circle cx="834.200" cy="699.600" r="2.400" fill="#fefefe" stroke="#2a6aa0" stroke-width=".8"/>
<!-- obs -->
<circle cx="880.800" cy="695.900" r="10.800" fill="#1c1a1a" stroke="#f0f0f0" stroke-width="1.700"/>
<g fill="none" stroke="#f0f0f0" stroke-width="2.500" stroke-linecap="round"><path d="M881.600 687.600C877.800 689.200 877.200 693.800 880 696.200"/><path d="M888.700 699.600C885.600 702.300 881.400 700.500 880.800 696.900"/><path d="M873.400 700.700C874 696.600 878.300 695 881.100 697.100"/></g>
<circle cx="890.700" cy="687.200" r="6" fill="#ee0a1c"/>
<!-- folder -->
<path d="M912.700 687.200c0-1.400 1-2.400 2.400-2.400h6.200l2.700 2.500h10.600c1.400 0 2.400 1 2.400 2.400v15c0 1.400-1 2.400-2.400 2.400h-19.500c-1.400 0-2.400-1-2.400-2.400z" fill="#e9a92a"/>
<rect x="912.700" y="688.300" width="24.300" height="18.800" rx="2" fill="url(#fold)"/>
<path d="M918 707.100v-6.300c0-1.200.8-2 2-2h9.600c1.200 0 2 .8 2 2v6.300z" fill="#2a86d6"/>
<rect x="921.500" y="701.500" width="6.600" height="1.600" rx=".8" fill="#8ccaf4"/>
<!-- bongo app -->
<g clip-path="url(#appc)"><rect x="956" y="684" width="25" height="24" fill="url(#app)"/>
<path d="M955 708v-6.500l2.500-2.500 2 1.500 3.500-1 1.500-3.500 3 2.500h5l3.500-2 1.500 4 3.500-2.500 2 4v6z" fill="#fefefe"/>
<circle cx="966" cy="703.500" r=".8" fill="#3c2c2c"/><circle cx="972.500" cy="704.200" r=".8" fill="#3c2c2c"/><circle cx="959" cy="703.500" r="1.300" fill="#f4a097"/><circle cx="977.500" cy="704" r="1.300" fill="#f4a097"/></g>
<rect x="960.600" y="712.700" width="16.200" height="2.600" rx="1.300" fill="#4cb9f2"/>
<rect x="833.300" y="712.400" width="5.800" height="2.400" rx="1.200" fill="#8d8d8d"/><rect x="877.900" y="712.400" width="5.800" height="2.400" rx="1.200" fill="#8d8d8d"/><rect x="921.900" y="712.400" width="5.800" height="2.400" rx="1.200" fill="#8d8d8d"/>
<!-- tray -->
<path d="M1059 698.800l5.400-5.400 5.400 5.400" fill="none" stroke="#fefefe" stroke-width="1.700"/>
<g fill="none" stroke="#5fcad2" stroke-width="1.500"><rect x="1094.600" y="688.600" width="5.200" height="9.400" rx="2.600"/><path d="M1092.200 695c0 3 2 5 5 5s5-2 5-5M1097.200 700v3.800"/></g>
<g fill="none" stroke="#fefefe" stroke-width="1.500" stroke-linecap="round"><path d="M1121.300 693.500a11 11 0 0 1 15 0"/><path d="M1123.700 696.300a7.500 7.500 0 0 1 10.200 0"/><path d="M1126.200 698.900a3.900 3.900 0 0 1 5.200 0"/></g><circle cx="1128.800" cy="700.800" r="1.200" fill="#fefefe"/>
<g fill="none" stroke="#fefefe" stroke-width="1.400" stroke-linejoin="round"><path d="M1144.700 693.300h2.800l4-3.600v12.600l-4-3.600h-2.800z"/><path d="M1154 693.300a3.700 3.700 0 0 1 0 5.400M1156.300 691a7 7 0 0 1 0 10M1158.600 688.700a10.300 10.300 0 0 1 0 14.600" stroke-linecap="round"/></g>
<rect x="1169.200" y="690.800" width="18.400" height="10.400" rx="2.800" fill="#a9e2a2" stroke="#fefefe" stroke-width="1.500"/><path d="M1188.800 694v4" stroke="#fefefe" stroke-width="1.800" stroke-linecap="round"/>
<path d="M1179.300 687.800l-3.800 6h3l-1 4.700 4.200-6.200h-3.100z" fill="#fefefe" stroke="#2c3a2c" stroke-width=".9"/>
</svg>
<span class="t" style="right:19.500px;top:9.800px;font-size:12.800px;letter-spacing:-.45px">4:04 PM</span>
<span class="t" style="right:19.500px;top:25.600px;font-size:12.800px;letter-spacing:-.05px">2/23/2026</span>
</div>
<!-- game window -->
<div style="left:499px;top:339px;width:241px;height:6px;background:#2f323b"></div>
<svg style="left:499px;top:307px" width="241" height="33" viewBox="0 0 241 33">

<g clip-path="url(#bclip)">
<rect width="241" height="33" fill="url(#sky)"/>
<path d="M0 0h88c-10 2.500-26 3.500-40 5S12 9.500 0 11.500z" fill="#3b2cb6"/>
<path d="M122 0C134 2.500 144 8.500 160 9.700S196 9.500 206 6.500 218 1.500 224 0z" fill="#4630bf"/>
<path d="M0 24c3-1.500 5-3 8-3s5 1.500 9 1.500 8-3 13-3 9 3 15 3 30-1 36-1c3 0 4-4.500 7.500-4.500s5 4.500 8 4.500h40c3 0 5-6.500 10.500-6.500S153 22 157 22h84v4H0z" fill="#175c2a"/>
<rect x="0" y="23.500" width="241" height="10" fill="url(#grass)"/>
<path d="M83 23.500c1-3 3-5 5.500-5s5 2 6 5z" fill="#3dbb48" stroke="#175c2a" stroke-width=".8"/>
<path d="M138 24c0-3 2-4 3.500-4.500C142 17 144 16 146 16s4 1.500 4 3.500c2 .5 3 2 3 4.500z" fill="#43c04e" stroke="#175c2a" stroke-width=".9"/>
<!-- Tap Tap -->
<rect x="7.500" y="4.500" width="18.500" height="12" rx="2" fill="#8d7fae" stroke="#fbf4f4" stroke-width="1.200"/>
<rect x="10" y="17.700" width="18.500" height="12" rx="2" fill="#8d7fae" stroke="#fbf4f4" stroke-width="1.200"/>
<text x="9.600" y="14" font-family="Liberation Sans,sans-serif" font-weight="bold" font-size="9.500" fill="#fefefe" textLength="14.500" lengthAdjust="spacingAndGlyphs">Tap</text>
<text x="12.100" y="27.200" font-family="Liberation Sans,sans-serif" font-weight="bold" font-size="9.500" fill="#fefefe" textLength="14.500" lengthAdjust="spacingAndGlyphs">Tap</text>
<!-- LOOT -->
<g font-family="Liberation Sans,sans-serif" font-weight="bold" font-size="33" transform="translate(30.800 28.200) scale(.53 1)">
<text x="0" y="0" fill="none" stroke="#fbeaea" stroke-width="7" stroke-linejoin="round">LOOT</text>
<text x="0" y="0" fill="none" stroke="#5a2c2c" stroke-width="3.600" stroke-linejoin="round">LOOT</text>
<text x="0" y="0" fill="url(#loot)">LOOT</text>
</g>
<!-- cat hero -->
<g>
<path d="M119 25.500c6 .5 12-.5 15-1.500l.8 2.600c-4 1.200-10 1.800-15.800 1.300z" fill="#f4f4f6" stroke="#3a2c30" stroke-width=".8"/>
<path d="M107 32.500c1-4 1.500-9 3.500-12l8 .5c2 3 3.500 8 3 12h-4l-1.500-5-3.500 5z" fill="#fefefe" stroke="#3a2c30" stroke-width=".8"/>
<path d="M118 20.500c2 3 3.500 8 3.500 12h-3c0-4-1-7-2.500-9z" fill="#b9683e"/>
<path d="M109.500 17.500l9.500.5 2 4-6 3-6.500-3.500z" fill="#2f9f62"/>
<path d="M102.500 2.500l4.500 3.500c2.500-1 6-1 8.500-.5l4-4 2 7.500c1 3 .5 6.500-1.500 8.500-3 2.500-11 2.800-14.500.5-3-2-3.800-5.500-3.200-8.500z" fill="#fefefe" stroke="#3a2c30" stroke-width=".9"/>
<path d="M102.800 3.200l4.200 3c2-1 4-1.200 6-1l-1.500 5c-2.500.5-4 2.500-4.500 5l-3.500-1c-1.500-2-1.700-4.500-1.200-6.500z" fill="#f39a2c"/>
<path d="M119.400 2.300l1.800 6.800c.6 2 .4 4-.5 5.800l-3-1c.3-2.500-.5-4.500-2.200-5.500l.2-2.800z" fill="#9aa0b8"/>
<circle cx="110" cy="12.500" r="1.200" fill="#3a2c30"/><circle cx="116.500" cy="12.500" r="1.200" fill="#3a2c30"/>
<path d="M112.300 14.500h2l-1 1.200z" fill="#f08a8a"/>
<circle cx="103.500" cy="25.500" r="5.800" fill="#8a6a50" stroke="#2e2426" stroke-width="1.300"/>
<path d="M100.500 24l3.500-1.500 2.500 2.500-3.500 2.500z" fill="#b79a7c"/>
</g>
<!-- chest -->
<g>
<path d="M158 33V19.500c0-2.500 2-4 4.500-4h18c2.500 0 4.500 1.500 4.500 4V33z" fill="#b87a48" stroke="#2e2022" stroke-width="1.300"/>
<rect x="158.700" y="24.500" width="25.600" height="8.500" fill="#96607c"/>
<rect x="158.700" y="23.300" width="25.600" height="1.600" fill="#6e4032"/>
<rect x="161.500" y="16.200" width="2.700" height="17" fill="#f3e4e4"/><rect x="178.500" y="16.200" width="2.700" height="17" fill="#f3e4e4"/>
<rect x="168.500" y="22.300" width="5.500" height="4.200" rx="1" fill="#f0e0d0" stroke="#5a3a30" stroke-width=".7"/>
<path d="M185 22.500h9" stroke="#175c2a" stroke-width="1.200"/>
</g>
<!-- notification -->
<rect x="194" y="6.500" width="40" height="20" fill="#cfe2d6" opacity=".88"/>
<path d="M194 26.500l12-9M234 26.500l-12-9" stroke="#e4f0e8" stroke-width=".7" opacity=".8"/>
<path d="M214 9c-3.200 0-4.300 2.500-4.300 5.500 0 2.800-.8 4.200-2 5.500h12.600c-1.200-1.300-2-2.700-2-5.500 0-3-1.100-5.500-4.300-5.500zm-1.400 11.700a1.400 1.400 0 0 0 2.800 0z" fill="#48504e"/>
<path d="M236 20c1.500-1 3-1.500 5-1.500V26h-5z" fill="#174a26"/>
</g>
<g transform="translate(221.5 1.5) scale(0.93) rotate(14 7 7)"><path d="M4.500 2.500c-1.500-2 .5-3 2-1.500l1 1.500 1-1.500c1.500-1.500 3.500-.5 2 1.500z" fill="#fbe0db"/><rect x="0" y="2.500" width="15" height="4.500" rx=".8" fill="#eda299" stroke="#fbe0db" stroke-width="2.100"/><rect x="1.200" y="7" width="12.600" height="8" fill="#eda299" stroke="#fbe0db" stroke-width="2.100"/><path d="M7.500 2.500V15" stroke="#fbe0db" stroke-width="2.800"/></g>
</svg>

<div style="left:499px;top:344px;width:241px;height:288px;background:linear-gradient(#e89488 0,#e69688 14%,#e0a283 40%,#e7b88f 65%,#f0d0a4 85%,#f5deb0 100%)"></div>
<div style="left:499px;top:344px;width:241px;height:34px;background:#dc7674;border-bottom:1.500px solid #f3bcb6"></div>
<div style="left:507.500px;top:351px;width:31px;height:27px;background:#f6cbc6;border-radius:3px 3px 0 0"></div>
<div style="left:541px;top:351px;width:31px;height:25.500px;background:#e9958e;border-radius:3px 3px 0 0"></div>
<div style="left:574px;top:351px;width:31px;height:25.500px;background:#e9958e;border-radius:3px 3px 0 0"></div>
<div style="left:607.500px;top:351px;width:31px;height:25.500px;background:#e9958e;border-radius:3px 3px 0 0"></div>
<div style="left:641px;top:351px;width:31px;height:25.500px;background:#e9958e;border-radius:3px 3px 0 0"></div>
<div style="left:674px;top:351px;width:31px;height:25.500px;background:#e9958e;border-radius:3px 3px 0 0"></div>
<div style="left:712px;top:350.500px;width:20px;height:20px;background:#f2cfd0"></div>
<svg style="left:499px;top:344px" width="241" height="34" viewBox="0 0 241 34">
<g fill="#4b2b2a">
<!-- tab1 cards with bow -->
<rect x="17.500" y="14.200" width="15.500" height="14.500" fill="#5b3b3a"/>
<rect x="15" y="11.500" width="15.500" height="14.500" fill="#4b2b2a"/>
<path d="M17 15.500c2-1.500 4-.5 5.500 2 1.500-2.500 3.500-3.500 5.500-2v6.500c-2 1.500-4 .5-5.500-2-1.500 2.500-3.500 3.500-5.500 2z" fill="#f1d6d2"/>
<circle cx="22.700" cy="18.800" r="1.400" fill="#4b2b2a"/>
<!-- tab2 check -->
<rect x="51" y="15" width="15.500" height="14" fill="#6a4644"/>
<rect x="48.500" y="12.500" width="15.500" height="14" />
<path d="M51.500 19.500l3.500 3.500 6.500-8" fill="none" stroke="#f3d0cc" stroke-width="2.200"/>
<!-- tab3 refresh -->
<g fill="none" stroke="#4b2b2a" stroke-width="2.300"><path d="M84 18.500a5.800 5.800 0 0 1 10-3.300"/><path d="M96 21a5.800 5.800 0 0 1-10 3.300"/></g>
<path d="M91.500 11l5.500 3-4.500 4zM88.500 29l-5.500-3 4.500-4z"/>
<!-- tab4 pot -->
<ellipse cx="120.500" cy="21.500" rx="7.300" ry="6.700"/>
<path d="M114.500 19.500c3 2.500 9 2.500 12 0" stroke="#e9958e" stroke-width="1.300" fill="none"/>
<path d="M116.500 24.500h7" stroke="#e9958e" stroke-width="1" fill="none" stroke-dasharray="1.200 .8"/>
<path d="M113.500 17l-1-3 3 1.500z"/><path d="M121 13.500l3-2.500 1.500 3z"/>
<path d="M128 15.500c3-1 5 .5 5 3s-2 4.500-4.500 5l-.5-2c1.500-.5 2.500-1.500 2.500-2.800s-1-1.700-2-1.200z"/>
<!-- tab5 heart -->
<path d="M157.500 29c-5-3.800-8-7-8-10.500 0-2.800 2-4.700 4.300-4.700 1.600 0 2.900.8 3.700 2.200.8-1.400 2.100-2.200 3.700-2.200 2.300 0 4.300 1.900 4.300 4.700 0 3.500-3 6.700-8 10.500z"/>
<!-- tab6 gear -->
<path fill-rule="evenodd" d="M188.800 11.500h3.400l.6 2.600 1.500.7 2.300-1.400 2.400 2.400-1.400 2.300.7 1.500 2.600.6v3.400l-2.600.6-.7 1.500 1.400 2.300-2.400 2.400-2.300-1.400-1.500.7-.6 2.600h-3.400l-.6-2.600-1.500-.7-2.300 1.400-2.400-2.400 1.400-2.300-.7-1.500-2.600-.6v-3.400l2.600-.6.7-1.500-1.400-2.300 2.400-2.400 2.300 1.400 1.500-.7zM190.500 17.800a4.100 4.100 0 1 0 0 8.200 4.100 4.100 0 0 0 0-8.200z" transform="translate(190.500 20.400) scale(.84) translate(-190.500 -21.900)"/>
<!-- close -->
<path d="M217.500 11.700l9 9M226.500 11.700l-9 9" stroke="#4b3030" stroke-width="2.700" fill="none"/>
</g>
<g transform="translate(129.5 1.0) scale(1.0) rotate(14 7 7)"><path d="M4.500 2.500c-1.500-2 .5-3 2-1.500l1 1.500 1-1.500c1.500-1.500 3.500-.5 2 1.500z" fill="#fbe0db"/><rect x="0" y="2.500" width="15" height="4.500" rx=".8" fill="#eda299" stroke="#fbe0db" stroke-width="2.100"/><rect x="1.200" y="7" width="12.600" height="8" fill="#eda299" stroke="#fbe0db" stroke-width="2.100"/><path d="M7.500 2.500V15" stroke="#fbe0db" stroke-width="2.800"/></g>
<g transform="translate(162.5 1.5) scale(1.0) rotate(14 7 7)"><path d="M4.500 2.500c-1.500-2 .5-3 2-1.500l1 1.500 1-1.500c1.500-1.500 3.500-.5 2 1.500z" fill="#fbe0db"/><rect x="0" y="2.500" width="15" height="4.500" rx=".8" fill="#eda299" stroke="#fbe0db" stroke-width="2.100"/><rect x="1.200" y="7" width="12.600" height="8" fill="#eda299" stroke="#fbe0db" stroke-width="2.100"/><path d="M7.500 2.500V15" stroke="#fbe0db" stroke-width="2.800"/></g>
</svg>
<!-- slots -->
<div style="left:507.5px;top:388px;width:39.500px;height:39.500px;background:#ecaba1;border:1px solid #f2bdb4"></div><svg style="left:520.7px;top:401.500px" width="13" height="13" viewBox="0 0 13 13"><path d="M6.500 0v13M0 6.500h13" stroke="#f9d9d3" stroke-width="2.800"/></svg><div style="left:549.3px;top:388px;width:39.500px;height:39.500px;background:#ecaba1;border:1px solid #f2bdb4"></div><svg style="left:562.5px;top:401.500px" width="13" height="13" viewBox="0 0 13 13"><path d="M6.500 0v13M0 6.500h13" stroke="#f9d9d3" stroke-width="2.800"/></svg><div style="left:591.1px;top:388px;width:39.500px;height:39.500px;background:#ecaba1;border:1px solid #f2bdb4"></div><svg style="left:604.3000000000001px;top:401.500px" width="13" height="13" viewBox="0 0 13 13"><path d="M6.500 0v13M0 6.500h13" stroke="#f9d9d3" stroke-width="2.800"/></svg><div style="left:632.9px;top:388px;width:39.500px;height:39.500px;background:#ecaba1;border:1px solid #f2bdb4"></div><svg style="left:646.1px;top:401.500px" width="13" height="13" viewBox="0 0 13 13"><path d="M6.500 0v13M0 6.500h13" stroke="#f9d9d3" stroke-width="2.800"/></svg><div style="left:674.7px;top:388px;width:39.500px;height:39.500px;background:#ecaba1;border:1px solid #f2bdb4"></div><svg style="left:687.9000000000001px;top:401.500px" width="13" height="13" viewBox="0 0 13 13"><path d="M6.500 0v13M0 6.500h13" stroke="#f9d9d3" stroke-width="2.800"/></svg>
<div style="left:515px;top:439px;width:193px;height:5.500px;background:#f6d3cc"></div>
<div style="left:720.500px;top:388px;width:10.500px;height:211px;background:#5a4e47"></div>
<div style="left:532.0px;top:604px;width:40px;height:20px;background:#f5e8d0"></div><svg style="left:567.0px;top:604.500px" width="4.500" height="4.500" viewBox="0 0 5 5"><path d="M0 0h5v5z" fill="#8c847b"/></svg><div style="left:577.0px;top:604px;width:40px;height:20px;background:#f5e8d0"></div><svg style="left:612.0px;top:604.500px" width="4.500" height="4.500" viewBox="0 0 5 5"><path d="M0 0h5v5z" fill="#8c847b"/></svg><div style="left:622.0px;top:604px;width:40px;height:20px;background:#f5e8d0"></div><svg style="left:657.0px;top:604.500px" width="4.500" height="4.500" viewBox="0 0 5 5"><path d="M0 0h5v5z" fill="#8c847b"/></svg><div style="left:667.0px;top:604px;width:40px;height:20px;background:#f5e8d0"></div><svg style="left:702.0px;top:604.500px" width="4.500" height="4.500" viewBox="0 0 5 5"><path d="M0 0h5v5z" fill="#8c847b"/></svg>
<svg style="left:532px;top:604px" width="176" height="20" viewBox="0 0 176 20" fill="#4a4442">
<!-- shop -->
<path d="M14.500 3.500h11l1.500 4.500h-14z"/><path d="M13 8.500h14v2.200c-.8 1-2.700 1-3.500 0-.8 1-2.700 1-3.500 0-.8 1-2.700 1-3.500 0-.8 1-2.700 1-3.500 0z"/><path d="M14 12h12v5.500H14z"/><rect x="16" y="13" width="8" height="2.500" fill="#f6e6c8"/>
<!-- box -->
<path d="M60 3.500h10l2 3.500H58z"/><rect x="58" y="7.500" width="14" height="10.500"/><rect x="62.500" y="9" width="5" height="1.600" fill="#f6e6c8"/>
<!-- discord -->
<g transform="translate(110 10.800) scale(.9) translate(-110 -10.800)"><path d="M102 4.500c2-1 4-1.500 5-1.500l.7 1.300c1.500-.2 3.100-.2 4.600 0L113 3c1 0 3 .5 5 1.500 2.500 3.700 3.500 7.500 3 11.500-1.700 1.300-3.500 2-5.200 2.500l-1.200-2c.8-.3 1.500-.7 2.200-1.200-3.800 1.800-9.800 1.800-13.600 0 .7.500 1.400.9 2.200 1.200l-1.200 2c-1.700-.5-3.500-1.200-5.200-2.500-.5-4 .5-7.800 3-11.500z"/>
<ellipse cx="106.800" cy="11" rx="1.900" ry="2.200" fill="#f6e6c8"/><ellipse cx="113.200" cy="11" rx="1.900" ry="2.200" fill="#f6e6c8"/></g>
<!-- bell -->
<path d="M154.500 2.500c-3.200 0-4.500 2.600-4.500 5.700 0 3-.8 4.600-2.200 5.800h13.400c-1.400-1.200-2.200-2.800-2.200-5.800 0-3.100-1.300-5.700-4.500-5.700zm-1.700 12.700a1.700 1.700 0 0 0 3.400 0z"/>
</svg>

<!-- counter -->
<div style="left:565px;top:275.500px;width:80px;height:23px;background:#dfe5ee;border:1px solid #9aa1ac;box-shadow:0 0 0 .7px #3a3d45"><span class="t" style="left:5px;top:6px;font-family:'DejaVu Sans',sans-serif;font-size:10.800px;color:#333335;letter-spacing:.2px;-webkit-text-stroke:.3px #333335">178</span></div>
<div style="left:651px;top:275.500px;width:23.500px;height:23px;background:#e3e8ef;border:1px solid #9aa1ac;box-shadow:0 0 0 .7px #3a3d45"><svg style="left:4px;top:5px" width="14" height="12" viewBox="0 0 14 12"><path d="M0 1.500h14M0 6h14M0 10.500h14" stroke="#2c2c2e" stroke-width="2.100"/></svg></div>

<!-- bongo cat -->
<svg style="left:540px;top:205px" width="160" height="90" viewBox="0 0 1280 720">
<g stroke="#4b3436" stroke-width="15" stroke-linejoin="round" stroke-linecap="round">
<path d="M250 525C215 470 185 400 178 350C173 315 203 292 240 288C275 285 300 303 325 333C343 353 360 368 375 378C390 350 420 315 445 297C462 286 478 278 487 268C480 245 472 225 471 205C472 180 476 160 481 145C484 132 497 130 505 140C530 165 565 185 600 196C680 200 780 215 850 245C890 228 940 214 972 212C988 211 992 222 992 235C993 275 997 315 1003 350C1015 405 1035 470 1050 525Z" fill="#fefefe"/>
<path d="M835 525C800 480 770 410 755 340C750 308 780 288 815 290C860 293 900 330 940 378" fill="#fefefe"/>
</g>
<path d="M492 172C515 192 540 205 565 212C540 213 510 220 484 232C482 212 486 190 492 172Z" fill="#f6a9a2"/>
<path d="M872 284C900 268 935 255 962 250C960 290 963 335 970 370C945 335 912 305 872 284Z" fill="#f6a9a2"/>
<ellipse cx="255" cy="415" rx="42" ry="40" fill="#f4978e"/>
<circle cx="207" cy="342" r="19" fill="#f6b6b2"/><circle cx="262" cy="336" r="18" fill="#f6b6b2"/>
<ellipse cx="822" cy="422" rx="42" ry="40" fill="#f4978e"/>
<circle cx="828" cy="345" r="18" fill="#f6b6b2"/><circle cx="782" cy="368" r="16" fill="#f6b6b2"/>
<ellipse cx="395" cy="437" rx="38" ry="30" fill="#f4d6d8"/>
<circle cx="462" cy="416" r="26" fill="#3c2c2c"/><circle cx="745" cy="446" r="23" fill="#3c2c2c"/>
<path d="M515 425C523 455 570 460 580 430C592 460 638 458 650 428" fill="none" stroke="#3c2c2c" stroke-width="14" stroke-linecap="round"/>
<path d="M698 260L706 382L732 352L754 394L770 385L749 344L787 341Z" fill="#fefefe" stroke="#8d8d95" stroke-width="5"/>
</svg>
<!-- bubble -->
<svg style="left:480px;top:205px" width="130" height="40" viewBox="0 0 130 40"><path d="M7.500 5h108a3.500 3.500 0 0 1 3.500 3.500V27l1.600 7.400L111.200 29.500H7.500A3.500 3.500 0 0 1 4 26V8.500A3.500 3.500 0 0 1 7.500 5z" fill="#fefefe"/></svg>
<span class="t" style="left:495.500px;top:216px;font-family:'DejaVu Sans',sans-serif;font-size:12px;color:#3a3a3c;letter-spacing:.95px;transform:scaleX(1.1);transform-origin:0 0;-webkit-text-stroke:.3px #3a3a3c">Meow Meow</span>

</div></div>
<div class="zoomrow">
<span class="t" style="left:5px;top:2.500px;font-size:14px;font-weight:bold;color:#e8e9ec">&#8722;</span>
<span class="t" style="left:31px">43%</span>
<span class="t" style="left:69px;top:1.500px;font-size:15px;font-weight:bold;color:#e8e9ec">+</span>
<span class="t" style="left:93px">Scale to Window</span>
<svg style="left:211px;top:7px" width="11" height="7" viewBox="0 0 11 7"><path d="M0 0h11l-5.500 6z" fill="#fefefe"/></svg>
</div>
<div class="ctx">
<span class="t" style="left:6px;top:16px">No source selected</span>
<div class="cbtn" style="left:210px;width:108px">
<svg style="left:11px;top:8px" width="15" height="15" viewBox="0 0 16 16"><path fill="#c8cad0" fill-rule="evenodd" d="M6.700 0h2.600l.4 2.100 1.200.5 1.800-1.200 1.800 1.800-1.200 1.800.5 1.200 2.100.4v2.600l-2.100.4-.5 1.200 1.200 1.800-1.800 1.800-1.800-1.200-1.200.5-.4 2.100H6.700l-.4-2.100-1.200-.5-1.800 1.200-1.800-1.800 1.200-1.800-.5-1.200L0 9.300V6.700l2.100-.4.500-1.200-1.200-1.800 1.800-1.800 1.800 1.200 1.200-.5zM8 5.200a2.800 2.800 0 1 0 0 5.600 2.800 2.800 0 0 0 0-5.600z"/></svg>
<span class="t" style="left:29px">Properties</span></div>
<div class="cbtn" style="left:325px;width:82px">
<svg style="left:12px;top:8px" width="14" height="15" viewBox="0 0 14 15"><rect x=".7" y=".7" width="12.600" height="13.600" rx="2" fill="none" stroke="#c8cad0" stroke-width="1.400"/><rect x="3" y="3" width="8" height="9" fill="url(#fg)"/></svg>
<span class="t" style="left:29px">Filters</span></div>
</div>

<!-- Audio mixer -->
<div class="dock mx" style="left:0;width:225px">
<div class="dtitle"><span class="t" style="letter-spacing:.6px !important">Audio Mixer</span><svg class="flt" style="left:208px" viewBox="0 0 10 10" fill="none" stroke="#fefefe" stroke-width="1.300"><path d="M.7 5V.7h6.300V3"/><rect x="3.400" y="3.700" width="5.900" height="4.900" fill="#3a3e4a"/><path d="M3.400 4.600h5.900" stroke-width="1.600"/></svg></div>
<div style="left:1px;top:181px;width:223px;height:85px;background:#1d1f26"></div>
<div style="left:4px;top:101px;width:221px;height:1px;background:#343741"></div>
<div style="left:4px;top:180px;width:221px;height:1px;background:#343741"></div>
<span class="t" style="left:11px;top:30px">Desktop Audio</span>
<span class="t db" style="right:9px;top:29px">-1.0 dB</span>
<div class="kb" style="left:8px;top:49px"><svg style="left:9px;top:3px" width="6" height="16" viewBox="0 0 6 16" fill="#fefefe"><circle cx="3" cy="2.300" r="1.900"/><circle cx="3" cy="8" r="1.900"/><circle cx="3" cy="13.700" r="1.900"/></svg></div>
<div style="left:38px;top:48px;width:180px;height:14px;background:linear-gradient(90deg,#5b5b5b 0,#5b5b5b 66.500%,#838383 66.500%,#838383 85%,#4b4b4b 85%)"></div>
<div style="left:38px;top:54.500px;width:180px;height:1px;background:#3a3a3a"></div>
<div style="left:37.6px;top:63.0px;width:1px;height:3px;background:#fefefe"></div><span class="t lbl" style="left:30.7px;top:65.2px;width:16px;text-align:center">-60</span><div style="left:52.3px;top:63.0px;width:1px;height:3px;background:#fefefe"></div><span class="t lbl" style="left:45.4px;top:65.2px;width:16px;text-align:center">-55</span><div style="left:67.0px;top:63.0px;width:1px;height:3px;background:#fefefe"></div><span class="t lbl" style="left:60.1px;top:65.2px;width:16px;text-align:center">-50</span><div style="left:81.7px;top:63.0px;width:1px;height:3px;background:#fefefe"></div><span class="t lbl" style="left:74.8px;top:65.2px;width:16px;text-align:center">-45</span><div style="left:96.4px;top:63.0px;width:1px;height:3px;background:#fefefe"></div><span class="t lbl" style="left:89.5px;top:65.2px;width:16px;text-align:center">-40</span><div style="left:111.1px;top:63.0px;width:1px;height:3px;background:#fefefe"></div><span class="t lbl" style="left:104.2px;top:65.2px;width:16px;text-align:center">-35</span><div style="left:125.8px;top:63.0px;width:1px;height:3px;background:#fefefe"></div><span class="t lbl" style="left:118.9px;top:65.2px;width:16px;text-align:center">-30</span><div style="left:140.5px;top:63.0px;width:1px;height:3px;background:#fefefe"></div><span class="t lbl" style="left:133.6px;top:65.2px;width:16px;text-align:center">-25</span><div style="left:155.2px;top:63.0px;width:1px;height:3px;background:#fefefe"></div><span class="t lbl" style="left:148.3px;top:65.2px;width:16px;text-align:center">-20</span><div style="left:169.9px;top:63.0px;width:1px;height:3px;background:#fefefe"></div><span class="t lbl" style="left:163.0px;top:65.2px;width:16px;text-align:center">-15</span><div style="left:184.6px;top:63.0px;width:1px;height:3px;background:#fefefe"></div><span class="t lbl" style="left:177.7px;top:65.2px;width:16px;text-align:center">-10</span><div style="left:199.3px;top:63.0px;width:1px;height:3px;background:#fefefe"></div><span class="t lbl" style="left:192.4px;top:65.2px;width:16px;text-align:center">-5</span><div style="left:214.0px;top:63.0px;width:1px;height:3px;background:#fefefe"></div><span class="t lbl" style="left:207.0px;top:65.2px;width:16px;text-align:center">0</span>
<div class="kb" style="left:8px;top:75px;height:23px"><svg style="left:4px;top:5px" width="16" height="13" viewBox="0 0 16 13"><path d="M1 4.500h3l4-3.500v11l-4-3.500H1z" fill="#c01c37"/><path d="M10.500 4.500l4 4m0-4l-4 4" stroke="#c01c37" stroke-width="1.600" fill="none"/></svg></div>
<div style="left:46.5px;top:84.0px;width:1px;height:11px;background:#4e525e"></div><div style="left:52.5px;top:84.0px;width:1px;height:11px;background:#4e525e"></div><div style="left:60.6px;top:84.0px;width:1px;height:11px;background:#4e525e"></div><div style="left:68.5px;top:84.0px;width:1px;height:11px;background:#4e525e"></div><div style="left:77.5px;top:84.0px;width:1px;height:11px;background:#4e525e"></div><div style="left:89.4px;top:84.0px;width:1px;height:11px;background:#4e525e"></div><div style="left:103.5px;top:84.0px;width:1px;height:11px;background:#4e525e"></div><div style="left:122.5px;top:84.0px;width:1px;height:11px;background:#4e525e"></div><div style="left:150.6px;top:84.0px;width:1px;height:11px;background:#4e525e"></div><div style="left:33px;top:87.5px;width:183px;height:4px;border-radius:2px;background:#23252d"></div><div class="trk" style="left:33px;top:87.5px;width:161.0px"></div><div style="left:46.5px;top:87.5px;width:1px;height:4px;background:#6f83d8"></div><div style="left:52.5px;top:87.5px;width:1px;height:4px;background:#6f83d8"></div><div style="left:60.6px;top:87.5px;width:1px;height:4px;background:#6f83d8"></div><div style="left:68.5px;top:87.5px;width:1px;height:4px;background:#6f83d8"></div><div style="left:77.5px;top:87.5px;width:1px;height:4px;background:#6f83d8"></div><div style="left:89.4px;top:87.5px;width:1px;height:4px;background:#6f83d8"></div><div style="left:103.5px;top:87.5px;width:1px;height:4px;background:#6f83d8"></div><div style="left:122.5px;top:87.5px;width:1px;height:4px;background:#6f83d8"></div><div style="left:150.6px;top:87.5px;width:1px;height:4px;background:#6f83d8"></div><div class="knob" style="left:188.0px;top:84.0px"></div>
<span class="t" style="left:11px;top:109px">Mic/Aux</span>
<span class="t db" style="right:9px;top:108px">-3.2 dB</span>
<div class="kb" style="left:8px;top:128px"><svg style="left:9px;top:3px" width="6" height="16" viewBox="0 0 6 16" fill="#fefefe"><circle cx="3" cy="2.300" r="1.900"/><circle cx="3" cy="8" r="1.900"/><circle cx="3" cy="13.700" r="1.900"/></svg></div>
<div style="left:33px;top:126px;width:185px;height:16px;background:linear-gradient(90deg,#47e947 0,#47e947 2.700px,#0a1a0a 2.700px,#0a1a0a 4.300px,#47e947 4.300px,#47e947 41px,#0a1a0a 41px,#0a1a0a 44px,#47e947 44px,#47e947 79px,#1f7a24 79px,#1f7a24 104px,#47e947 104px,#47e947 107px,#1f7a24 107px,#1f7a24 125px,#7c6a12 125px,#7c6a12 158px,#7d1024 158px)"></div>
<div style="left:33px;top:133.500px;width:185px;height:1px;background:rgba(0,0,0,.45)"></div>
<div style="left:37.6px;top:142.0px;width:1px;height:3px;background:#fefefe"></div><span class="t lbl" style="left:30.7px;top:144.2px;width:16px;text-align:center">-60</span><div style="left:52.3px;top:142.0px;width:1px;height:3px;background:#fefefe"></div><span class="t lbl" style="left:45.4px;top:144.2px;width:16px;text-align:center">-55</span><div style="left:67.0px;top:142.0px;width:1px;height:3px;background:#fefefe"></div><span class="t lbl" style="left:60.1px;top:144.2px;width:16px;text-align:center">-50</span><div style="left:81.7px;top:142.0px;width:1px;height:3px;background:#fefefe"></div><span class="t lbl" style="left:74.8px;top:144.2px;width:16px;text-align:center">-45</span><div style="left:96.4px;top:142.0px;width:1px;height:3px;background:#fefefe"></div><span class="t lbl" style="left:89.5px;top:144.2px;width:16px;text-align:center">-40</span><div style="left:111.1px;top:142.0px;width:1px;height:3px;background:#fefefe"></div><span class="t lbl" style="left:104.2px;top:144.2px;width:16px;text-align:center">-35</span><div style="left:125.8px;top:142.0px;width:1px;height:3px;background:#fefefe"></div><span class="t lbl" style="left:118.9px;top:144.2px;width:16px;text-align:center">-30</span><div style="left:140.5px;top:142.0px;width:1px;height:3px;background:#fefefe"></div><span class="t lbl" style="left:133.6px;top:144.2px;width:16px;text-align:center">-25</span><div style="left:155.2px;top:142.0px;width:1px;height:3px;background:#fefefe"></div><span class="t lbl" style="left:148.3px;top:144.2px;width:16px;text-align:center">-20</span><div style="left:169.9px;top:142.0px;width:1px;height:3px;background:#fefefe"></div><span class="t lbl" style="left:163.0px;top:144.2px;width:16px;text-align:center">-15</span><div style="left:184.6px;top:142.0px;width:1px;height:3px;background:#fefefe"></div><span class="t lbl" style="left:177.7px;top:144.2px;width:16px;text-align:center">-10</span><div style="left:199.3px;top:142.0px;width:1px;height:3px;background:#fefefe"></div><span class="t lbl" style="left:192.4px;top:144.2px;width:16px;text-align:center">-5</span><div style="left:214.0px;top:142.0px;width:1px;height:3px;background:#fefefe"></div><span class="t lbl" style="left:207.0px;top:144.2px;width:16px;text-align:center">0</span>
<div class="kb" style="left:8px;top:154px;height:23px"><svg style="left:4px;top:5px" width="16" height="13" viewBox="0 0 16 13"><path d="M1 4.500h3l4-3.500v11l-4-3.500H1z" fill="#fefefe"/><path d="M10 4a3.500 3.500 0 0 1 0 5M12 2a6 6 0 0 1 0 9" stroke="#fefefe" stroke-width="1.400" fill="none"/></svg></div>
<div style="left:46.5px;top:163.0px;width:1px;height:11px;background:#4e525e"></div><div style="left:52.5px;top:163.0px;width:1px;height:11px;background:#4e525e"></div><div style="left:60.6px;top:163.0px;width:1px;height:11px;background:#4e525e"></div><div style="left:68.5px;top:163.0px;width:1px;height:11px;background:#4e525e"></div><div style="left:77.5px;top:163.0px;width:1px;height:11px;background:#4e525e"></div><div style="left:89.4px;top:163.0px;width:1px;height:11px;background:#4e525e"></div><div style="left:103.5px;top:163.0px;width:1px;height:11px;background:#4e525e"></div><div style="left:122.5px;top:163.0px;width:1px;height:11px;background:#4e525e"></div><div style="left:150.6px;top:163.0px;width:1px;height:11px;background:#4e525e"></div><div style="left:33px;top:166.5px;width:183px;height:4px;border-radius:2px;background:#23252d"></div><div class="trk" style="left:33px;top:166.5px;width:145.0px"></div><div style="left:46.5px;top:166.5px;width:1px;height:4px;background:#6f83d8"></div><div style="left:52.5px;top:166.5px;width:1px;height:4px;background:#6f83d8"></div><div style="left:60.6px;top:166.5px;width:1px;height:4px;background:#6f83d8"></div><div style="left:68.5px;top:166.5px;width:1px;height:4px;background:#6f83d8"></div><div style="left:77.5px;top:166.5px;width:1px;height:4px;background:#6f83d8"></div><div style="left:89.4px;top:166.5px;width:1px;height:4px;background:#6f83d8"></div><div style="left:103.5px;top:166.5px;width:1px;height:4px;background:#6f83d8"></div><div style="left:122.5px;top:166.5px;width:1px;height:4px;background:#6f83d8"></div><div style="left:150.6px;top:166.5px;width:1px;height:4px;background:#6f83d8"></div><div class="knob" style="left:172.0px;top:163.0px"></div>
<div class="dtool"><svg style="left:8px;top:7.500px" width="16" height="14" viewBox="0 0 16 14"><circle cx="6" cy="8" r="3.200" fill="none" stroke="#fefefe" stroke-width="2.600" stroke-dasharray="2 1.350"/><circle cx="6" cy="8" r="2.600" fill="none" stroke="#fefefe" stroke-width="1.400"/><circle cx="12.500" cy="3.500" r="1.800" fill="none" stroke="#fefefe" stroke-width="1.800" stroke-dasharray="1.300 .9"/><circle cx="12.500" cy="3.500" r="1.400" fill="none" stroke="#fefefe" stroke-width="1"/></svg>
<svg style="left:47px;top:6.500px" width="6" height="16" viewBox="0 0 6 16" fill="#fefefe"><circle cx="3" cy="2.300" r="2"/><circle cx="3" cy="8" r="2"/><circle cx="3" cy="13.700" r="2"/></svg></div>
</div>

<!-- Scenes -->
<div class="dock" style="left:229px;width:187px">
<div class="dtitle"><span class="t">Scenes</span><svg class="flt" style="left:170px" viewBox="0 0 10 10" fill="none" stroke="#fefefe" stroke-width="1.300"><path d="M.7 5V.7h6.300V3"/><rect x="3.400" y="3.700" width="5.900" height="4.900" fill="#3a3e4a"/><path d="M3.400 4.600h5.900" stroke-width="1.600"/></svg></div>
<div style="left:3px;top:25.500px;width:181px;height:29.500px;background:#284cb8;border-radius:3px"><span class="t" style="left:8px;top:7.500px;font-size:13.5px;letter-spacing:-0.3px">Scene</span></div>
<div class="dtool"><svg style="left:9px;top:7.500px" width="140" height="15" viewBox="0 0 140 15" fill="none" stroke="#fefefe" stroke-width="1.800"><path d="M6.500 1v12M.5 7h12"/><path d="M29.500 3.500h12M33 3V1.500h5V3M31 4v8.500a1 1 0 0 0 1 1h7a1 1 0 0 0 1-1V4" /><path d="M33.800 6v5.500M35.500 6v5.500M37.300 6v5.500" stroke-width="1.100"/><rect x="63.500" y="1.500" width="11" height="12" rx="1.500"/><rect x="65.500" y="3.500" width="7" height="8" fill="url(#fg)" stroke="none"/><path d="M97 10l5.500-5.500 5.500 5.500"/><path d="M125 5l5.500 5.500 5.500-5.500"/></svg></div>
</div>

<!-- Scene transitions + sources -->
<div class="dock" style="left:420px;width:140px">
<div class="dtitle"><span class="t">Scene Transitions</span></div>
<div class="btn" style="left:5px;top:30px;width:131px;height:30.500px"><span class="t" style="left:9px;right:auto;top:8px">Fade</span></div>
<span class="t" style="left:5px;top:75px;font-size:13.5px">Duration</span>
<div class="btn" style="left:63px;top:66.500px;width:73px;height:30.500px"></div>
</div>
<div class="dock src" style="left:564px;width:310.500px">
<div class="dtitle"><span class="t">Sources</span><svg class="flt" style="left:293px" viewBox="0 0 10 10" fill="none" stroke="#fefefe" stroke-width="1.300"><path d="M.7 5V.7h6.300V3"/><rect x="3.400" y="3.700" width="5.900" height="4.900" fill="#3a3e4a"/><path d="M3.400 4.600h5.900" stroke-width="1.600"/></svg></div>
<span class="t" style="right:61px;top:34.500px">Window Capture</span>
<span class="t" style="right:72.500px;top:64.500px">Game Capture</span>
<span class="t" style="right:100px;top:94.500px">horror</span>
<span class="t" style="right:106.500px;top:124.500px">ninja</span>
<span class="t" style="right:64.500px;top:154.500px;color:#fefefe">Display Capture</span>
<svg style="left:257px;top:33.5px" width="17" height="15" viewBox="0 0 17 15"><path d="M1 7.500C3.500 3.200 6 2 8.500 2s5 1.200 7.500 5.500C13.500 11.800 11 13 8.500 13S3.500 11.800 1 7.500z" fill="#aaadb4"/><circle cx="8.500" cy="7.500" r="3" fill="#272a33"/><circle cx="8.500" cy="7.500" r="1.400" fill="#aaadb4"/><path d="M2.500 14L14.500 1" stroke="#272a33" stroke-width="3.600"/><path d="M2.800 13.800L14.200 1.200" stroke="#aaadb4" stroke-width="1.500"/></svg><svg style="left:285px;top:32.0px" width="14" height="17" viewBox="0 0 14 17"><path d="M3.500 8V5a3.200 3.200 0 0 1 6.400 0v1" fill="none" stroke="#aaadb4" stroke-width="2"/><rect x="1" y="7.500" width="12.500" height="9" rx="1" fill="#aaadb4"/></svg>
<svg style="left:257px;top:63.5px" width="17" height="15" viewBox="0 0 17 15"><path d="M1 7.500C3.500 3.200 6 2 8.500 2s5 1.200 7.500 5.500C13.500 11.800 11 13 8.500 13S3.500 11.800 1 7.500z" fill="#aaadb4"/><circle cx="8.500" cy="7.500" r="3" fill="#272a33"/><circle cx="8.500" cy="7.500" r="1.400" fill="#aaadb4"/><path d="M2.500 14L14.500 1" stroke="#272a33" stroke-width="3.600"/><path d="M2.800 13.800L14.200 1.200" stroke="#aaadb4" stroke-width="1.500"/></svg><svg style="left:285px;top:62.0px" width="14" height="17" viewBox="0 0 14 17"><path d="M3.500 8V5a3.200 3.200 0 0 1 6.400 0v1" fill="none" stroke="#aaadb4" stroke-width="2"/><rect x="1" y="7.500" width="12.500" height="9" rx="1" fill="#aaadb4"/></svg>
<svg style="left:257px;top:93.5px" width="17" height="15" viewBox="0 0 17 15"><path d="M1 7.500C3.500 3.200 6 2 8.500 2s5 1.200 7.500 5.500C13.500 11.800 11 13 8.500 13S3.500 11.800 1 7.500z" fill="#aaadb4"/><circle cx="8.500" cy="7.500" r="3" fill="#272a33"/><circle cx="8.500" cy="7.500" r="1.400" fill="#aaadb4"/><path d="M2.500 14L14.500 1" stroke="#272a33" stroke-width="3.600"/><path d="M2.800 13.800L14.200 1.200" stroke="#aaadb4" stroke-width="1.500"/></svg><svg style="left:285px;top:92.0px" width="14" height="17" viewBox="0 0 14 17"><path d="M3.800 9V5.500a3.200 3.200 0 0 1 6.400 0V9" fill="none" stroke="#fefefe" stroke-width="2"/><rect x="1" y="7.500" width="12.500" height="9" rx="1" fill="#fefefe"/></svg>
<svg style="left:257px;top:123.5px" width="17" height="15" viewBox="0 0 17 15"><path d="M1 7.500C3.500 3.200 6 2 8.500 2s5 1.200 7.500 5.500C13.500 11.800 11 13 8.500 13S3.500 11.800 1 7.500z" fill="#aaadb4"/><circle cx="8.500" cy="7.500" r="3" fill="#272a33"/><circle cx="8.500" cy="7.500" r="1.400" fill="#aaadb4"/><path d="M2.500 14L14.500 1" stroke="#272a33" stroke-width="3.600"/><path d="M2.800 13.800L14.200 1.200" stroke="#aaadb4" stroke-width="1.500"/></svg><svg style="left:285px;top:122.0px" width="14" height="17" viewBox="0 0 14 17"><path d="M3.800 9V5.500a3.200 3.200 0 0 1 6.400 0V9" fill="none" stroke="#fefefe" stroke-width="2"/><rect x="1" y="7.500" width="12.500" height="9" rx="1" fill="#fefefe"/></svg>
<svg style="left:257px;top:153.5px" width="17" height="15" viewBox="0 0 17 15"><path d="M1 7.500C3.500 3.200 6 2 8.500 2s5 1.200 7.500 5.500C13.500 11.800 11 13 8.500 13S3.500 11.800 1 7.500z" fill="#fefefe"/><circle cx="8.500" cy="7.500" r="3.100" fill="#272a33"/><circle cx="8.500" cy="7.500" r="1.600" fill="#fefefe"/></svg><svg style="left:285px;top:152.0px" width="14" height="17" viewBox="0 0 14 17"><path d="M3.500 8V5a3.200 3.200 0 0 1 6.400 0v1" fill="none" stroke="#aaadb4" stroke-width="2"/><rect x="1" y="7.500" width="12.500" height="9" rx="1" fill="#aaadb4"/></svg>
<div class="dtool"><div style="left:184.500px;top:4px;width:21px;height:22.500px;border-radius:3px;background:#24272f"></div><div style="left:218.500px;top:4px;width:21px;height:22.500px;border-radius:3px;background:#24272f"></div><div style="left:246px;top:4px;width:21px;height:22.500px;border-radius:3px;background:#24272f"></div><svg style="left:187px;top:7px" width="80" height="16" viewBox="0 0 80 16"><path transform="translate(1.400 1.600) scale(.82)" fill="#fefefe" fill-rule="evenodd" d="M6.700 0h2.600l.4 2.100 1.200.5 1.800-1.200 1.800 1.800-1.200 1.800.5 1.200 2.100.4v2.600l-2.100.4-.5 1.200 1.200 1.800-1.800 1.800-1.800-1.200-1.200.5-.4 2.100H6.700l-.4-2.100-1.200-.5-1.800 1.200-1.800-1.800 1.200-1.800-.5-1.200L0 9.300V6.700l2.100-.4.500-1.200-1.200-1.800 1.800-1.800 1.800 1.200 1.200-.5zM8 5.200a2.800 2.800 0 1 0 0 5.600 2.800 2.800 0 0 0 0-5.600z"/><g fill="none" stroke="#fefefe" stroke-width="1.800"><path d="M36 11l5.500-5.500L47 11"/><path d="M64 6l5.500 5.500L75 6"/></g></svg></div>
</div>

<!-- Controls -->
<div class="dock" style="left:879px;width:397px">
<div class="dtitle"><span class="t">Controls</span><svg class="flt" style="left:383px" viewBox="0 0 10 10" fill="none" stroke="#fefefe" stroke-width="1.300"><path d="M.7 5V.7h6.300V3"/><rect x="3.400" y="3.700" width="5.900" height="4.900" fill="#3a3e4a"/><path d="M3.400 4.600h5.900" stroke-width="1.600"/></svg></div>
<div class="btn" style="left:7px;top:30.500px;width:386px"><span class="t">Start Streaming</span></div>
<div class="btn" style="left:7px;top:66.500px;width:351px;background:#284cb8"><span class="t">Stop Recording</span></div>
<div class="btn" style="left:362px;top:66.500px;width:31px"><svg style="left:10px;top:9px" width="12" height="13" viewBox="0 0 12 13" fill="#fefefe"><rect x="0" y="0" width="4.400" height="13"/><rect x="7.200" y="0" width="4.400" height="13"/></svg></div>
<div class="btn" style="left:7px;top:102.500px;width:351px"><span class="t">Start Virtual Camera</span></div>
<div class="btn" style="left:362px;top:102.500px;width:31px"><svg style="left:9px;top:9px" width="14" height="14" viewBox="0 0 16 16"><path fill="#fefefe" fill-rule="evenodd" d="M6.700 0h2.600l.4 2.100 1.200.5 1.800-1.200 1.800 1.800-1.200 1.800.5 1.200 2.100.4v2.600l-2.100.4-.5 1.200 1.200 1.800-1.800 1.800-1.800-1.200-1.200.5-.4 2.100H6.700l-.4-2.100-1.200-.5-1.800 1.200-1.800-1.800 1.200-1.800-.5-1.200L0 9.300V6.700l2.100-.4.500-1.200-1.200-1.800 1.800-1.800 1.800 1.200 1.200-.5zM8 5.200a2.800 2.800 0 1 0 0 5.600 2.800 2.800 0 0 0 0-5.600z"/></svg></div>
<div class="btn" style="left:7px;top:138.500px;width:386px"><span class="t">Studio Mode</span></div>
<div class="btn" style="left:7px;top:174.500px;width:386px"><span class="t">Settings</span></div>
</div>

<!-- status bar -->
<div class="status">
<div class="sep" style="left:862px"></div><div class="sep" style="left:894px"></div><div class="sep" style="left:982px"></div><div class="sep" style="left:1071px"></div><div class="sep" style="left:1155px"></div>
<svg style="left:870px;top:8.500px" width="16" height="14" viewBox="0 0 16 14" fill="#565a65"><rect x="0" y="10" width="3" height="4"/><rect x="4.300" y="7" width="3" height="7"/><rect x="8.600" y="4" width="3" height="10"/><rect x="12.900" y="0" width="3" height="14"/></svg>
<svg style="left:903px;top:9.500px" width="14" height="12" viewBox="0 0 14 12"><circle cx="7" cy="6" r="2.400" fill="#9a9da6"/><path d="M3.800 2.500a5 5 0 0 0 0 7M10.200 2.500a5 5 0 0 1 0 7M1.800 .8a8 8 0 0 0 0 10.400M12.200 .8a8 8 0 0 1 0 10.400" fill="none" stroke="#5a5d68" stroke-width="1.200"/></svg>
<span class="t" style="left:923px;color:#9a9da6">00:00:00</span>
<div style="left:991px;top:8.500px;width:14px;height:14px;border-radius:7px;background:#dc0c1c"></div>
<span class="t" style="left:1012px">00:02:09</span>
<span class="t" style="left:1079px;word-spacing:-1.200px;letter-spacing:-.25px">CPU: 10.5%</span>
<span class="t" style="left:1163px;word-spacing:0;letter-spacing:0">60.00 / 60.00 FPS</span>
</div>
<div class="task">
<div style="left:948.500px;top:4px;width:39.500px;height:40px;border-radius:4px;background:#322f2b;border:1px solid #3a3733"></div>
<svg style="left:0;top:-.3px" width="1280" height="49" viewBox="0 671 1280 49">

<!-- widgets -->
<circle cx="32.500" cy="695.200" r="10.600" fill="url(#moon)"/>
<circle cx="29.800" cy="688.800" r="8.800" fill="#1d2232"/>
<path d="M21 692.500a3 3 0 0 1 1.500-5.600 5 5 0 0 1 9.500-1.200 3.600 3.600 0 0 1 1 6.800z" fill="url(#cloud)"/>
<circle cx="39.400" cy="686" r="8" fill="#f4a2ba"/>
<text x="39.400" y="690" text-anchor="middle" font-family="Liberation Sans,sans-serif" font-size="11" fill="#6d1233">4</text>
<!-- start -->
<g fill="url(#win)"><rect x="295.600" y="684.500" width="11.700" height="11.400" rx=".8"/><rect x="308.300" y="684.500" width="11.700" height="11.400" rx=".8"/><rect x="295.600" y="696.900" width="11.700" height="11.400" rx=".8"/><rect x="308.300" y="696.900" width="11.700" height="11.400" rx=".8"/></g>
<!-- search -->
<path d="M358 701l4.200 4.800" stroke="#f0f0f0" stroke-width="3.200" stroke-linecap="round"/>
<circle cx="351.600" cy="694.500" r="8.600" fill="#56565a" stroke="#f4f4f4" stroke-width="2.300"/>
<!-- task view -->
<rect x="385" y="690.700" width="18" height="15.700" rx="1.500" fill="#6f6f6f"/>
<rect x="390.600" y="684.500" width="18.200" height="16.900" rx="2" fill="#f3f3f3"/>
<rect x="390.600" y="690.700" width="12.400" height="10.700" fill="#c9c9c9"/>
<!-- copilot -->
<rect x="431" y="684.500" width="13.500" height="17" rx="5" transform="skewX(-14) translate(173 0)" fill="url(#cop1)"/>
<rect x="438.500" y="689.300" width="13.500" height="17" rx="5" transform="skewX(-14) translate(174 0)" fill="url(#cop2)"/>
<path d="M440.500 690c1.500 2 .5 7-1 10" stroke="#1f2a8a" stroke-width="2.200" fill="none" opacity=".75"/>
<!-- chrome -->
<g transform="translate(484.750 695.750)">
<path d="M0 0L-10.570 -6.100A12.200 12.200 0 0 1 10.570 -6.100z" fill="#e33b2e"/>
<path d="M0 0L10.570 -6.100A12.200 12.200 0 0 1 0 12.200z" fill="#fbc116"/>
<path d="M0 0L0 12.200A12.200 12.200 0 0 1 -10.570 -6.100z" fill="#2fa24c"/>
<path d="M-10.570 -6.100A12.200 12.200 0 0 1 10.570 -6.100L11.800 -3H0z" fill="#e33b2e"/>
<path d="M11.800 -3a12.200 12.200 0 0 1-9.300 14.900L5 2z" fill="#fbc116"/>
<circle r="5.800" fill="#fefefe"/><circle r="4.500" fill="#3b7de0"/>
</g>
<!-- teams -->
<circle cx="533.800" cy="689.800" r="3.100" fill="#7b83eb"/>
<rect x="529" y="693.500" width="10.400" height="11.500" rx="3" fill="#6a70d8"/>
<circle cx="525" cy="688.200" r="3.700" fill="#8b92f0"/>
<rect x="519" y="692.700" width="14" height="14.300" rx="3.500" fill="#7b83eb"/>
<rect x="516" y="692.500" width="11.500" height="11.500" rx="1.500" fill="#4e56c4"/>
<text x="521.750" y="701.600" text-anchor="middle" font-family="Liberation Sans,sans-serif" font-weight="bold" font-size="8.500" fill="#fefefe">T</text>
<!-- edge -->
<circle cx="572.800" cy="696" r="12.200" fill="url(#edge)"/>
<path d="M572 684c7-.5 13 5 13 12 0 3-2 5.500-5.500 5.500h-5c-1.500 0-1.500-1.500-.5-2.500 2-2 1-6-3-6.500-3-.3-6 1.500-8 4.500 0-7 3.500-12.500 9-13z" fill="#6fd95c" opacity=".8"/>
<path d="M561 699c0-7 5-11 11-11 7 0 11.500 4 12.500 8.500 .5 3-1.500 5-5 5h-6.500c-1.500 0-1.500-1.500-.5-2.500 1.500-1.500 1.500-3.500 0-4.500-2.500-1.500-6 .5-6 4 0 5 4 8.500 9 9.500-7 1-14.500-3-14.500-9z" fill="#1468c0" opacity=".85"/>
<path d="M566.500 698.500c0 5 4 8.500 9 9.500 4-.5 7-2.500 8.500-5-3 2-7 2-9.500 0-2-1.500-2.500-4-1.500-6-2-1.200-6.500.5-6.500 1.500z" fill="#0d4d96"/>
<circle cx="573.500" cy="696.800" r="2.300" fill="#17274a"/>
<!-- solitaire -->
<rect x="617" y="686" width="8.500" height="18" rx="1" fill="#2879c4" transform="rotate(6 621 695)"/>
<rect x="606.800" y="686.300" width="13.800" height="20.500" rx="1.300" fill="#f4f4f4" transform="rotate(-8 613.500 696.500)"/>
<path d="M613.500 690.500c2.500 2.800 5 4.500 5 6.800 0 2.700-3.300 3.200-4.500 1.200l.9 2.800h-2.800l.9-2.800c-1.200 2-4.500 1.500-4.500-1.200 0-2.300 2.500-4 5-6.800z" fill="#1c1c1e" transform="rotate(-8 613.500 696.500)"/>
<circle cx="608.500" cy="689.800" r=".9" fill="#1c1c1e"/><circle cx="619.500" cy="703.500" r=".9" fill="#1c1c1e"/>
<path d="M624.600 684.500v7M621.100 688h7" stroke="#f4f8ff" stroke-width="1.500"/>
<!-- spotify -->
<circle cx="660.600" cy="695.750" r="12" fill="#21d862"/>
<g fill="none" stroke="#17191a" stroke-linecap="round"><path d="M653.500 691.500c5-1.500 10.500-1 15 1.300" stroke-width="2.300"/><path d="M654.300 695.600c4.300-1.200 8.700-.8 12.500 1.200" stroke-width="1.900"/><path d="M655 699.400c3.500-1 7-.6 10 1" stroke-width="1.600"/></g>
<!-- ibis paint -->
<rect x="692.500" y="684" width="24.800" height="24" fill="#2d6ba2"/>
<circle cx="709.300" cy="694.300" r="4.300" fill="none" stroke="#f0c020" stroke-width="2.600"/>
<path d="M709.300 690a4.300 4.300 0 0 1 4.300 4.300" fill="none" stroke="#e8386a" stroke-width="2.600"/>
<path d="M705 694.300a4.300 4.300 0 0 1 4.300-4.300" fill="none" stroke="#48c858" stroke-width="2.600"/>
<path d="M713.600 694.300a4.300 4.300 0 0 1-4.300 4.300" fill="none" stroke="#b048d8" stroke-width="2.600"/>
<text x="696.600" y="704" font-family="Liberation Sans,sans-serif" font-weight="bold" font-size="16" fill="#fefefe" textLength="10.500" lengthAdjust="spacingAndGlyphs">iP</text>
<!-- roblox -->
<g transform="rotate(15 748.500 695.750)"><rect x="739" y="686.250" width="19" height="19" fill="url(#rbx)"/><rect x="746.500" y="693.700" width="4" height="4" fill="#1d1f28"/></g>
<!-- epic -->
<path d="M783 684.400h19v18.600l-9.500 4.400-9.500-4.400z" fill="#0c0c0c" stroke="#e8e8e8" stroke-width=".8"/>
<text x="792.500" y="696.300" text-anchor="middle" font-family="Liberation Sans,sans-serif" font-weight="bold" font-size="10.500" fill="#fefefe" textLength="15" lengthAdjust="spacingAndGlyphs">EPIC</text>
<text x="792.500" y="701" text-anchor="middle" font-family="Liberation Sans,sans-serif" font-weight="bold" font-size="3.800" fill="#fefefe" textLength="13" lengthAdjust="spacingAndGlyphs">GAMES</text>
<path d="M790.500 704h4l-2 1.200z" fill="#e8e8e8"/>
<!-- steam -->
<circle cx="836.100" cy="695.900" r="12" fill="url(#steam)"/>
<path d="M824.300 694.500l7.500 3.200c1-.6 2-.8 3-.6l3.300-4.600 5 3.600-4.500 3.500c0 2.500-2 4.300-4.300 4.300-2 0-3.700-1.400-4.200-3.300l-6-2.500z" fill="#fefefe"/>
<circle cx="841" cy="691.700" r="4.200" fill="#fefefe"/><circle cx="841" cy="691.700" r="2.500" fill="#1b4a86"/>
<circle cx="834.200" cy="699.600" r="2.400" fill="#fefefe" stroke="#2a6aa0" stroke-width=".8"/>
<!-- obs -->
<circle cx="880.800" cy="695.900" r="10.800" fill="#1c1a1a" stroke="#f0f0f0" stroke-width="1.700"/>
<g fill="none" stroke="#f0f0f0" stroke-width="2.500" stroke-linecap="round"><path d="M881.600 687.600C877.800 689.200 877.200 693.800 880 696.200"/><path d="M888.700 699.600C885.600 702.300 881.400 700.500 880.800 696.900"/><path d="M873.400 700.700C874 696.600 878.300 695 881.100 697.100"/></g>
<circle cx="890.700" cy="687.200" r="6" fill="#ee0a1c"/>
<!-- folder -->
<path d="M912.700 687.200c0-1.400 1-2.400 2.400-2.400h6.200l2.700 2.500h10.600c1.400 0 2.400 1 2.400 2.400v15c0 1.400-1 2.400-2.400 2.400h-19.500c-1.400 0-2.400-1-2.400-2.400z" fill="#e9a92a"/>
<rect x="912.700" y="688.300" width="24.300" height="18.800" rx="2" fill="url(#fold)"/>
<path d="M918 707.100v-6.300c0-1.200.8-2 2-2h9.600c1.200 0 2 .8 2 2v6.300z" fill="#2a86d6"/>
<rect x="921.500" y="701.500" width="6.600" height="1.600" rx=".8" fill="#8ccaf4"/>
<!-- bongo app -->
<g clip-path="url(#appc)"><rect x="956" y="684" width="25" height="24" fill="url(#app)"/>
<path d="M955 708v-6.500l2.500-2.500 2 1.500 3.500-1 1.500-3.500 3 2.500h5l3.500-2 1.500 4 3.500-2.500 2 4v6z" fill="#fefefe"/>
<circle cx="966" cy="703.500" r=".8" fill="#3c2c2c"/><circle cx="972.500" cy="704.200" r=".8" fill="#3c2c2c"/><circle cx="959" cy="703.500" r="1.300" fill="#f4a097"/><circle cx="977.500" cy="704" r="1.300" fill="#f4a097"/></g>
<rect x="960.600" y="712.700" width="16.200" height="2.600" rx="1.300" fill="#4cb9f2"/>
<rect x="833.300" y="712.400" width="5.800" height="2.400" rx="1.200" fill="#8d8d8d"/><rect x="877.900" y="712.400" width="5.800" height="2.400" rx="1.200" fill="#8d8d8d"/><rect x="921.900" y="712.400" width="5.800" height="2.400" rx="1.200" fill="#8d8d8d"/>
<!-- tray -->
<path d="M1059 698.800l5.400-5.400 5.400 5.400" fill="none" stroke="#fefefe" stroke-width="1.700"/>
<g fill="none" stroke="#5fcad2" stroke-width="1.500"><rect x="1094.600" y="688.600" width="5.200" height="9.400" rx="2.600"/><path d="M1092.200 695c0 3 2 5 5 5s5-2 5-5M1097.200 700v3.800"/></g>
<g fill="none" stroke="#fefefe" stroke-width="1.500" stroke-linecap="round"><path d="M1121.300 693.500a11 11 0 0 1 15 0"/><path d="M1123.700 696.300a7.500 7.500 0 0 1 10.200 0"/><path d="M1126.200 698.900a3.900 3.900 0 0 1 5.200 0"/></g><circle cx="1128.800" cy="700.800" r="1.200" fill="#fefefe"/>
<g fill="none" stroke="#fefefe" stroke-width="1.400" stroke-linejoin="round"><path d="M1144.700 693.300h2.800l4-3.600v12.600l-4-3.600h-2.800z"/><path d="M1154 693.300a3.700 3.700 0 0 1 0 5.400M1156.300 691a7 7 0 0 1 0 10M1158.600 688.700a10.300 10.300 0 0 1 0 14.600" stroke-linecap="round"/></g>
<rect x="1169.200" y="690.800" width="18.400" height="10.400" rx="2.800" fill="#a9e2a2" stroke="#fefefe" stroke-width="1.500"/><path d="M1188.800 694v4" stroke="#fefefe" stroke-width="1.800" stroke-linecap="round"/>
<path d="M1179.300 687.800l-3.800 6h3l-1 4.700 4.200-6.200h-3.100z" fill="#fefefe" stroke="#2c3a2c" stroke-width=".9"/>
</svg>
<span class="t" style="right:19.500px;top:9.800px;font-size:12.800px;letter-spacing:-.45px">4:04 PM</span>
<span class="t" style="right:19.500px;top:25.600px;font-size:12.800px;letter-spacing:-.05px">2/23/2026</span>
</div>
<!-- game window -->
<div style="left:499px;top:339px;width:241px;height:6px;background:#2f323b"></div>
<svg style="left:499px;top:307px" width="241" height="33" viewBox="0 0 241 33">

<g clip-path="url(#bclip)">
<rect width="241" height="33" fill="url(#sky)"/>
<path d="M0 0h88c-10 2.500-26 3.500-40 5S12 9.500 0 11.500z" fill="#3b2cb6"/>
<path d="M122 0C134 2.500 144 8.500 160 9.700S196 9.500 206 6.500 218 1.500 224 0z" fill="#4630bf"/>
<path d="M0 24c3-1.500 5-3 8-3s5 1.500 9 1.500 8-3 13-3 9 3 15 3 30-1 36-1c3 0 4-4.500 7.500-4.500s5 4.500 8 4.500h40c3 0 5-6.500 10.500-6.500S153 22 157 22h84v4H0z" fill="#175c2a"/>
<rect x="0" y="23.500" width="241" height="10" fill="url(#grass)"/>
<path d="M83 23.500c1-3 3-5 5.500-5s5 2 6 5z" fill="#3dbb48" stroke="#175c2a" stroke-width=".8"/>
<path d="M138 24c0-3 2-4 3.500-4.500C142 17 144 16 146 16s4 1.500 4 3.500c2 .5 3 2 3 4.500z" fill="#43c04e" stroke="#175c2a" stroke-width=".9"/>
<!-- Tap Tap -->
<rect x="7.500" y="4.500" width="18.500" height="12" rx="2" fill="#8d7fae" stroke="#fbf4f4" stroke-width="1.200"/>
<rect x="10" y="17.700" width="18.500" height="12" rx="2" fill="#8d7fae" stroke="#fbf4f4" stroke-width="1.200"/>
<text x="9.600" y="14" font-family="Liberation Sans,sans-serif" font-weight="bold" font-size="9.500" fill="#fefefe" textLength="14.500" lengthAdjust="spacingAndGlyphs">Tap</text>
<text x="12.100" y="27.200" font-family="Liberation Sans,sans-serif" font-weight="bold" font-size="9.500" fill="#fefefe" textLength="14.500" lengthAdjust="spacingAndGlyphs">Tap</text>
<!-- LOOT -->
<g font-family="Liberation Sans,sans-serif" font-weight="bold" font-size="33" transform="translate(30.800 28.200) scale(.53 1)">
<text x="0" y="0" fill="none" stroke="#fbeaea" stroke-width="7" stroke-linejoin="round">LOOT</text>
<text x="0" y="0" fill="none" stroke="#5a2c2c" stroke-width="3.600" stroke-linejoin="round">LOOT</text>
<text x="0" y="0" fill="url(#loot)">LOOT</text>
</g>
<!-- cat hero -->
<g>
<path d="M119 25.500c6 .5 12-.5 15-1.500l.8 2.600c-4 1.200-10 1.800-15.800 1.300z" fill="#f4f4f6" stroke="#3a2c30" stroke-width=".8"/>
<path d="M107 32.500c1-4 1.500-9 3.500-12l8 .5c2 3 3.500 8 3 12h-4l-1.500-5-3.500 5z" fill="#fefefe" stroke="#3a2c30" stroke-width=".8"/>
<path d="M118 20.500c2 3 3.500 8 3.500 12h-3c0-4-1-7-2.500-9z" fill="#b9683e"/>
<path d="M109.500 17.500l9.500.5 2 4-6 3-6.500-3.500z" fill="#2f9f62"/>
<path d="M102.500 2.500l4.500 3.500c2.500-1 6-1 8.500-.5l4-4 2 7.500c1 3 .5 6.500-1.500 8.500-3 2.500-11 2.800-14.500.5-3-2-3.800-5.500-3.200-8.500z" fill="#fefefe" stroke="#3a2c30" stroke-width=".9"/>
<path d="M102.800 3.200l4.200 3c2-1 4-1.200 6-1l-1.500 5c-2.500.5-4 2.500-4.500 5l-3.500-1c-1.500-2-1.700-4.500-1.200-6.500z" fill="#f39a2c"/>
<path d="M119.400 2.300l1.800 6.800c.6 2 .4 4-.5 5.800l-3-1c.3-2.500-.5-4.500-2.200-5.500l.2-2.800z" fill="#9aa0b8"/>
<circle cx="110" cy="12.500" r="1.200" fill="#3a2c30"/><circle cx="116.500" cy="12.500" r="1.200" fill="#3a2c30"/>
<path d="M112.300 14.500h2l-1 1.200z" fill="#f08a8a"/>
<circle cx="103.500" cy="25.500" r="5.800" fill="#8a6a50" stroke="#2e2426" stroke-width="1.300"/>
<path d="M100.500 24l3.500-1.500 2.500 2.500-3.500 2.500z" fill="#b79a7c"/>
</g>
<!-- chest -->
<g>
<path d="M158 33V19.500c0-2.500 2-4 4.500-4h18c2.500 0 4.500 1.500 4.500 4V33z" fill="#b87a48" stroke="#2e2022" stroke-width="1.300"/>
<rect x="158.700" y="24.500" width="25.600" height="8.500" fill="#96607c"/>
<rect x="158.700" y="23.300" width="25.600" height="1.600" fill="#6e4032"/>
<rect x="161.500" y="16.200" width="2.700" height="17" fill="#f3e4e4"/><rect x="178.500" y="16.200" width="2.700" height="17" fill="#f3e4e4"/>
<rect x="168.500" y="22.300" width="5.500" height="4.200" rx="1" fill="#f0e0d0" stroke="#5a3a30" stroke-width=".7"/>
<path d="M185 22.500h9" stroke="#175c2a" stroke-width="1.200"/>
</g>
<!-- notification -->
<rect x="194" y="6.500" width="40" height="20" fill="#cfe2d6" opacity=".88"/>
<path d="M194 26.500l12-9M234 26.500l-12-9" stroke="#e4f0e8" stroke-width=".7" opacity=".8"/>
<path d="M214 9c-3.200 0-4.300 2.500-4.300 5.500 0 2.800-.8 4.200-2 5.500h12.600c-1.200-1.300-2-2.700-2-5.500 0-3-1.100-5.500-4.300-5.500zm-1.400 11.700a1.400 1.400 0 0 0 2.800 0z" fill="#48504e"/>
<path d="M236 20c1.500-1 3-1.500 5-1.500V26h-5z" fill="#174a26"/>
</g>
<g transform="translate(221.5 1.5) scale(0.93) rotate(14 7 7)"><path d="M4.500 2.500c-1.500-2 .5-3 2-1.500l1 1.500 1-1.500c1.500-1.500 3.500-.5 2 1.500z" fill="#fbe0db"/><rect x="0" y="2.500" width="15" height="4.500" rx=".8" fill="#eda299" stroke="#fbe0db" stroke-width="2.100"/><rect x="1.200" y="7" width="12.600" height="8" fill="#eda299" stroke="#fbe0db" stroke-width="2.100"/><path d="M7.500 2.500V15" stroke="#fbe0db" stroke-width="2.800"/></g>
</svg>

<div style="left:499px;top:344px;width:241px;height:288px;background:linear-gradient(#e89488 0,#e69688 14%,#e0a283 40%,#e7b88f 65%,#f0d0a4 85%,#f5deb0 100%)"></div>
<div style="left:499px;top:344px;width:241px;height:34px;background:#dc7674;border-bottom:1.500px solid #f3bcb6"></div>
<div style="left:507.500px;top:351px;width:31px;height:27px;background:#f6cbc6;border-radius:3px 3px 0 0"></div>
<div style="left:541px;top:351px;width:31px;height:25.500px;background:#e9958e;border-radius:3px 3px 0 0"></div>
<div style="left:574px;top:351px;width:31px;height:25.500px;background:#e9958e;border-radius:3px 3px 0 0"></div>
<div style="left:607.500px;top:351px;width:31px;height:25.500px;background:#e9958e;border-radius:3px 3px 0 0"></div>
<div style="left:641px;top:351px;width:31px;height:25.500px;background:#e9958e;border-radius:3px 3px 0 0"></div>
<div style="left:674px;top:351px;width:31px;height:25.500px;background:#e9958e;border-radius:3px 3px 0 0"></div>
<div style="left:712px;top:350.500px;width:20px;height:20px;background:#f2cfd0"></div>
<svg style="left:499px;top:344px" width="241" height="34" viewBox="0 0 241 34">
<g fill="#4b2b2a">
<!-- tab1 cards with bow -->
<rect x="17.500" y="14.200" width="15.500" height="14.500" fill="#5b3b3a"/>
<rect x="15" y="11.500" width="15.500" height="14.500" fill="#4b2b2a"/>
<path d="M17 15.500c2-1.500 4-.5 5.500 2 1.500-2.500 3.500-3.500 5.500-2v6.500c-2 1.500-4 .5-5.500-2-1.500 2.500-3.500 3.500-5.500 2z" fill="#f1d6d2"/>
<circle cx="22.700" cy="18.800" r="1.400" fill="#4b2b2a"/>
<!-- tab2 check -->
<rect x="51" y="15" width="15.500" height="14" fill="#6a4644"/>
<rect x="48.500" y="12.500" width="15.500" height="14" />
<path d="M51.500 19.500l3.500 3.500 6.500-8" fill="none" stroke="#f3d0cc" stroke-width="2.200"/>
<!-- tab3 refresh -->
<g fill="none" stroke="#4b2b2a" stroke-width="2.300"><path d="M84 18.500a5.800 5.800 0 0 1 10-3.300"/><path d="M96 21a5.800 5.800 0 0 1-10 3.300"/></g>
<path d="M91.500 11l5.500 3-4.500 4zM88.500 29l-5.500-3 4.500-4z"/>
<!-- tab4 pot -->
<ellipse cx="120.500" cy="21.500" rx="7.300" ry="6.700"/>
<path d="M114.500 19.500c3 2.500 9 2.500 12 0" stroke="#e9958e" stroke-width="1.300" fill="none"/>
<path d="M116.500 24.500h7" stroke="#e9958e" stroke-width="1" fill="none" stroke-dasharray="1.200 .8"/>
<path d="M113.500 17l-1-3 3 1.500z"/><path d="M121 13.500l3-2.500 1.500 3z"/>
<path d="M128 15.500c3-1 5 .5 5 3s-2 4.500-4.500 5l-.5-2c1.500-.5 2.500-1.500 2.500-2.800s-1-1.700-2-1.200z"/>
<!-- tab5 heart -->
<path d="M157.500 29c-5-3.800-8-7-8-10.500 0-2.800 2-4.700 4.300-4.700 1.600 0 2.900.8 3.700 2.200.8-1.400 2.100-2.200 3.700-2.200 2.300 0 4.300 1.900 4.300 4.700 0 3.500-3 6.700-8 10.500z"/>
<!-- tab6 gear -->
<path fill-rule="evenodd" d="M188.800 11.500h3.400l.6 2.600 1.500.7 2.300-1.400 2.400 2.400-1.400 2.300.7 1.500 2.600.6v3.400l-2.600.6-.7 1.500 1.400 2.300-2.400 2.400-2.300-1.400-1.500.7-.6 2.600h-3.400l-.6-2.600-1.500-.7-2.300 1.400-2.400-2.400 1.400-2.300-.7-1.500-2.600-.6v-3.400l2.600-.6.7-1.500-1.400-2.300 2.400-2.400 2.300 1.400 1.500-.7zM190.500 17.800a4.100 4.100 0 1 0 0 8.200 4.100 4.100 0 0 0 0-8.200z" transform="translate(190.500 20.400) scale(.84) translate(-190.500 -21.900)"/>
<!-- close -->
<path d="M217.500 11.700l9 9M226.500 11.700l-9 9" stroke="#4b3030" stroke-width="2.700" fill="none"/>
</g>
<g transform="translate(129.5 1.0) scale(1.0) rotate(14 7 7)"><path d="M4.500 2.500c-1.500-2 .5-3 2-1.500l1 1.500 1-1.500c1.500-1.500 3.500-.5 2 1.500z" fill="#fbe0db"/><rect x="0" y="2.500" width="15" height="4.500" rx=".8" fill="#eda299" stroke="#fbe0db" stroke-width="2.100"/><rect x="1.200" y="7" width="12.600" height="8" fill="#eda299" stroke="#fbe0db" stroke-width="2.100"/><path d="M7.500 2.500V15" stroke="#fbe0db" stroke-width="2.800"/></g>
<g transform="translate(162.5 1.5) scale(1.0) rotate(14 7 7)"><path d="M4.500 2.500c-1.500-2 .5-3 2-1.500l1 1.500 1-1.500c1.500-1.500 3.500-.5 2 1.500z" fill="#fbe0db"/><rect x="0" y="2.500" width="15" height="4.500" rx=".8" fill="#eda299" stroke="#fbe0db" stroke-width="2.100"/><rect x="1.200" y="7" width="12.600" height="8" fill="#eda299" stroke="#fbe0db" stroke-width="2.100"/><path d="M7.500 2.500V15" stroke="#fbe0db" stroke-width="2.800"/></g>
</svg>
<!-- slots -->
<div style="left:507.5px;top:388px;width:39.500px;height:39.500px;background:#ecaba1;border:1px solid #f2bdb4"></div><svg style="left:520.7px;top:401.500px" width="13" height="13" viewBox="0 0 13 13"><path d="M6.500 0v13M0 6.500h13" stroke="#f9d9d3" stroke-width="2.800"/></svg><div style="left:549.3px;top:388px;width:39.500px;height:39.500px;background:#ecaba1;border:1px solid #f2bdb4"></div><svg style="left:562.5px;top:401.500px" width="13" height="13" viewBox="0 0 13 13"><path d="M6.500 0v13M0 6.500h13" stroke="#f9d9d3" stroke-width="2.800"/></svg><div style="left:591.1px;top:388px;width:39.500px;height:39.500px;background:#ecaba1;border:1px solid #f2bdb4"></div><svg style="left:604.3000000000001px;top:401.500px" width="13" height="13" viewBox="0 0 13 13"><path d="M6.500 0v13M0 6.500h13" stroke="#f9d9d3" stroke-width="2.800"/></svg><div style="left:632.9px;top:388px;width:39.500px;height:39.500px;background:#ecaba1;border:1px solid #f2bdb4"></div><svg style="left:646.1px;top:401.500px" width="13" height="13" viewBox="0 0 13 13"><path d="M6.500 0v13M0 6.500h13" stroke="#f9d9d3" stroke-width="2.800"/></svg><div style="left:674.7px;top:388px;width:39.500px;height:39.500px;background:#ecaba1;border:1px solid #f2bdb4"></div><svg style="left:687.9000000000001px;top:401.500px" width="13" height="13" viewBox="0 0 13 13"><path d="M6.500 0v13M0 6.500h13" stroke="#f9d9d3" stroke-width="2.800"/></svg>
<div style="left:515px;top:439px;width:193px;height:5.500px;background:#f6d3cc"></div>
<div style="left:720.500px;top:388px;width:10.500px;height:211px;background:#5a4e47"></div>
<div style="left:532.0px;top:604px;width:40px;height:20px;background:#f5e8d0"></div><svg style="left:567.0px;top:604.500px" width="4.500" height="4.500" viewBox="0 0 5 5"><path d="M0 0h5v5z" fill="#8c847b"/></svg><div style="left:577.0px;top:604px;width:40px;height:20px;background:#f5e8d0"></div><svg style="left:612.0px;top:604.500px" width="4.500" height="4.500" viewBox="0 0 5 5"><path d="M0 0h5v5z" fill="#8c847b"/></svg><div style="left:622.0px;top:604px;width:40px;height:20px;background:#f5e8d0"></div><svg style="left:657.0px;top:604.500px" width="4.500" height="4.500" viewBox="0 0 5 5"><path d="M0 0h5v5z" fill="#8c847b"/></svg><div style="left:667.0px;top:604px;width:40px;height:20px;background:#f5e8d0"></div><svg style="left:702.0px;top:604.500px" width="4.500" height="4.500" viewBox="0 0 5 5"><path d="M0 0h5v5z" fill="#8c847b"/></svg>
<svg style="left:532px;top:604px" width="176" height="20" viewBox="0 0 176 20" fill="#4a4442">
<!-- shop -->
<path d="M14.500 3.500h11l1.500 4.500h-14z"/><path d="M13 8.500h14v2.200c-.8 1-2.700 1-3.500 0-.8 1-2.700 1-3.500 0-.8 1-2.700 1-3.500 0-.8 1-2.700 1-3.500 0z"/><path d="M14 12h12v5.500H14z"/><rect x="16" y="13" width="8" height="2.500" fill="#f6e6c8"/>
<!-- box -->
<path d="M60 3.500h10l2 3.500H58z"/><rect x="58" y="7.500" width="14" height="10.500"/><rect x="62.500" y="9" width="5" height="1.600" fill="#f6e6c8"/>
<!-- discord -->
<g transform="translate(110 10.800) scale(.9) translate(-110 -10.800)"><path d="M102 4.500c2-1 4-1.500 5-1.500l.7 1.300c1.500-.2 3.100-.2 4.600 0L113 3c1 0 3 .5 5 1.500 2.500 3.700 3.500 7.500 3 11.500-1.700 1.300-3.500 2-5.200 2.500l-1.200-2c.8-.3 1.500-.7 2.200-1.200-3.800 1.800-9.800 1.800-13.600 0 .7.500 1.400.9 2.200 1.200l-1.200 2c-1.700-.5-3.500-1.200-5.200-2.500-.5-4 .5-7.800 3-11.500z"/>
<ellipse cx="106.800" cy="11" rx="1.900" ry="2.200" fill="#f6e6c8"/><ellipse cx="113.200" cy="11" rx="1.900" ry="2.200" fill="#f6e6c8"/></g>
<!-- bell -->
<path d="M154.500 2.500c-3.200 0-4.500 2.600-4.500 5.700 0 3-.8 4.600-2.200 5.800h13.400c-1.400-1.200-2.200-2.800-2.200-5.800 0-3.100-1.300-5.700-4.500-5.700zm-1.700 12.700a1.700 1.700 0 0 0 3.400 0z"/>
</svg>

<!-- counter -->
<div style="left:565px;top:275.500px;width:80px;height:23px;background:#dfe5ee;border:1px solid #9aa1ac;box-shadow:0 0 0 .7px #3a3d45"><span class="t" style="left:5px;top:6px;font-family:'DejaVu Sans',sans-serif;font-size:10.800px;color:#333335;letter-spacing:.2px;-webkit-text-stroke:.3px #333335">178</span></div>
<div style="left:651px;top:275.500px;width:23.500px;height:23px;background:#e3e8ef;border:1px solid #9aa1ac;box-shadow:0 0 0 .7px #3a3d45"><svg style="left:4px;top:5px" width="14" height="12" viewBox="0 0 14 12"><path d="M0 1.500h14M0 6h14M0 10.500h14" stroke="#2c2c2e" stroke-width="2.100"/></svg></div>

<!-- bongo cat -->
<svg style="left:540px;top:205px" width="160" height="90" viewBox="0 0 1280 720">
<g stroke="#4b3436" stroke-width="15" stroke-linejoin="round" stroke-linecap="round">
<path d="M250 525C215 470 185 400 178 350C173 315 203 292 240 288C275 285 300 303 325 333C343 353 360 368 375 378C390 350 420 315 445 297C462 286 478 278 487 268C480 245 472 225 471 205C472 180 476 160 481 145C484 132 497 130 505 140C530 165 565 185 600 196C680 200 780 215 850 245C890 228 940 214 972 212C988 211 992 222 992 235C993 275 997 315 1003 350C1015 405 1035 470 1050 525Z" fill="#fefefe"/>
<path d="M835 525C800 480 770 410 755 340C750 308 780 288 815 290C860 293 900 330 940 378" fill="#fefefe"/>
</g>
<path d="M492 172C515 192 540 205 565 212C540 213 510 220 484 232C482 212 486 190 492 172Z" fill="#f6a9a2"/>
<path d="M872 284C900 268 935 255 962 250C960 290 963 335 970 370C945 335 912 305 872 284Z" fill="#f6a9a2"/>
<ellipse cx="255" cy="415" rx="42" ry="40" fill="#f4978e"/>
<circle cx="207" cy="342" r="19" fill="#f6b6b2"/><circle cx="262" cy="336" r="18" fill="#f6b6b2"/>
<ellipse cx="822" cy="422" rx="42" ry="40" fill="#f4978e"/>
<circle cx="828" cy="345" r="18" fill="#f6b6b2"/><circle cx="782" cy="368" r="16" fill="#f6b6b2"/>
<ellipse cx="395" cy="437" rx="38" ry="30" fill="#f4d6d8"/>
<circle cx="462" cy="416" r="26" fill="#3c2c2c"/><circle cx="745" cy="446" r="23" fill="#3c2c2c"/>
<path d="M515 425C523 455 570 460 580 430C592 460 638 458 650 428" fill="none" stroke="#3c2c2c" stroke-width="14" stroke-linecap="round"/>
<path d="M698 260L706 382L732 352L754 394L770 385L749 344L787 341Z" fill="#fefefe" stroke="#8d8d95" stroke-width="5"/>
</svg>
<!-- bubble -->
<svg style="left:480px;top:205px" width="130" height="40" viewBox="0 0 130 40"><path d="M7.500 5h108a3.500 3.500 0 0 1 3.500 3.500V27l1.600 7.400L111.200 29.500H7.500A3.500 3.500 0 0 1 4 26V8.500A3.500 3.500 0 0 1 7.500 5z" fill="#fefefe"/></svg>
<span class="t" style="left:495.500px;top:216px;font-family:'DejaVu Sans',sans-serif;font-size:12px;color:#3a3a3c;letter-spacing:.95px;transform:scaleX(1.1);transform-origin:0 0;-webkit-text-stroke:.3px #3a3a3c">Meow Meow</span>

</div></div>
<div class="zoomrow">
<span class="t" style="left:5px;top:2.500px;font-size:14px;font-weight:bold;color:#e8e9ec">&#8722;</span>
<span class="t" style="left:31px">43%</span>
<span class="t" style="left:69px;top:1.500px;font-size:15px;font-weight:bold;color:#e8e9ec">+</span>
<span class="t" style="left:93px">Scale to Window</span>
<svg style="left:211px;top:7px" width="11" height="7" viewBox="0 0 11 7"><path d="M0 0h11l-5.500 6z" fill="#fefefe"/></svg>
</div>
<div class="ctx">
<span class="t" style="left:6px;top:16px">No source selected</span>
<div class="cbtn" style="left:210px;width:108px">
<svg style="left:11px;top:8px" width="15" height="15" viewBox="0 0 16 16"><path fill="#c8cad0" fill-rule="evenodd" d="M6.700 0h2.600l.4 2.100 1.200.5 1.800-1.200 1.800 1.800-1.200 1.800.5 1.200 2.100.4v2.600l-2.100.4-.5 1.200 1.200 1.800-1.800 1.800-1.800-1.200-1.200.5-.4 2.100H6.700l-.4-2.100-1.200-.5-1.800 1.200-1.800-1.800 1.200-1.800-.5-1.200L0 9.300V6.700l2.100-.4.500-1.200-1.200-1.800 1.800-1.800 1.800 1.200 1.200-.5zM8 5.200a2.800 2.800 0 1 0 0 5.600 2.800 2.800 0 0 0 0-5.600z"/></svg>
<span class="t" style="left:29px">Properties</span></div>
<div class="cbtn" style="left:325px;width:82px">
<svg style="left:12px;top:8px" width="14" height="15" viewBox="0 0 14 15"><defs><linearGradient id="fg" x1="0" x2="1"><stop offset="0" stop-color="#eeeff2"/><stop offset="1" stop-color="#3c3f4a"/></linearGradient></defs><rect x=".7" y=".7" width="12.600" height="13.600" rx="2" fill="none" stroke="#c8cad0" stroke-width="1.400"/><rect x="3" y="3" width="8" height="9" fill="url(#fg)"/></svg>
<span class="t" style="left:29px">Filters</span></div>
</div>

<!-- Audio mixer -->
<div class="dock mx" style="left:0;width:225px">
<div class="dtitle"><span class="t" style="letter-spacing:.6px !important">Audio Mixer</span><svg class="flt" style="left:208px" viewBox="0 0 10 10" fill="none" stroke="#fefefe" stroke-width="1.300"><path d="M.7 5V.7h6.300V3"/><rect x="3.400" y="3.700" width="5.900" height="4.900" fill="#3a3e4a"/><path d="M3.400 4.600h5.900" stroke-width="1.600"/></svg></div>
<div style="left:1px;top:181px;width:223px;height:85px;background:#1d1f26"></div>
<div style="left:4px;top:101px;width:221px;height:1px;background:#343741"></div>
<div style="left:4px;top:180px;width:221px;height:1px;background:#343741"></div>
<span class="t" style="left:11px;top:30px">Desktop Audio</span>
<span class="t db" style="right:9px;top:29px">-1.0 dB</span>
<div class="kb" style="left:8px;top:49px"><svg style="left:9px;top:3px" width="6" height="16" viewBox="0 0 6 16" fill="#fefefe"><circle cx="3" cy="2.300" r="1.900"/><circle cx="3" cy="8" r="1.900"/><circle cx="3" cy="13.700" r="1.900"/></svg></div>
<div style="left:38px;top:48px;width:180px;height:14px;background:linear-gradient(90deg,#5b5b5b 0,#5b5b5b 66.500%,#838383 66.500%,#838383 85%,#4b4b4b 85%)"></div>
<div style="left:38px;top:54.500px;width:180px;height:1px;background:#3a3a3a"></div>
<div style="left:37.6px;top:63.0px;width:1px;height:3px;background:#fefefe"></div><span class="t lbl" style="left:30.7px;top:65.2px;width:16px;text-align:center">-60</span><div style="left:52.3px;top:63.0px;width:1px;height:3px;background:#fefefe"></div><span class="t lbl" style="left:45.4px;top:65.2px;width:16px;text-align:center">-55</span><div style="left:67.0px;top:63.0px;width:1px;height:3px;background:#fefefe"></div><span class="t lbl" style="left:60.1px;top:65.2px;width:16px;text-align:center">-50</span><div style="left:81.7px;top:63.0px;width:1px;height:3px;background:#fefefe"></div><span class="t lbl" style="left:74.8px;top:65.2px;width:16px;text-align:center">-45</span><div style="left:96.4px;top:63.0px;width:1px;height:3px;background:#fefefe"></div><span class="t lbl" style="left:89.5px;top:65.2px;width:16px;text-align:center">-40</span><div style="left:111.1px;top:63.0px;width:1px;height:3px;background:#fefefe"></div><span class="t lbl" style="left:104.2px;top:65.2px;width:16px;text-align:center">-35</span><div style="left:125.8px;top:63.0px;width:1px;height:3px;background:#fefefe"></div><span class="t lbl" style="left:118.9px;top:65.2px;width:16px;text-align:center">-30</span><div style="left:140.5px;top:63.0px;width:1px;height:3px;background:#fefefe"></div><span class="t lbl" style="left:133.6px;top:65.2px;width:16px;text-align:center">-25</span><div style="left:155.2px;top:63.0px;width:1px;height:3px;background:#fefefe"></div><span class="t lbl" style="left:148.3px;top:65.2px;width:16px;text-align:center">-20</span><div style="left:169.9px;top:63.0px;width:1px;height:3px;background:#fefefe"></div><span class="t lbl" style="left:163.0px;top:65.2px;width:16px;text-align:center">-15</span><div style="left:184.6px;top:63.0px;width:1px;height:3px;background:#fefefe"></div><span class="t lbl" style="left:177.7px;top:65.2px;width:16px;text-align:center">-10</span><div style="left:199.3px;top:63.0px;width:1px;height:3px;background:#fefefe"></div><span class="t lbl" style="left:192.4px;top:65.2px;width:16px;text-align:center">-5</span><div style="left:214.0px;top:63.0px;width:1px;height:3px;background:#fefefe"></div><span class="t lbl" style="left:207.0px;top:65.2px;width:16px;text-align:center">0</span>
<div class="kb" style="left:8px;top:75px;height:23px"><svg style="left:4px;top:5px" width="16" height="13" viewBox="0 0 16 13"><path d="M1 4.500h3l4-3.500v11l-4-3.500H1z" fill="#c01c37"/><path d="M10.500 4.500l4 4m0-4l-4 4" stroke="#c01c37" stroke-width="1.600" fill="none"/></svg></div>
<div style="left:46.5px;top:84.0px;width:1px;height:11px;background:#4e525e"></div><div style="left:52.5px;top:84.0px;width:1px;height:11px;background:#4e525e"></div><div style="left:60.6px;top:84.0px;width:1px;height:11px;background:#4e525e"></div><div style="left:68.5px;top:84.0px;width:1px;height:11px;background:#4e525e"></div><div style="left:77.5px;top:84.0px;width:1px;height:11px;background:#4e525e"></div><div style="left:89.4px;top:84.0px;width:1px;height:11px;background:#4e525e"></div><div style="left:103.5px;top:84.0px;width:1px;height:11px;background:#4e525e"></div><div style="left:122.5px;top:84.0px;width:1px;height:11px;background:#4e525e"></div><div style="left:150.6px;top:84.0px;width:1px;height:11px;background:#4e525e"></div><div style="left:33px;top:87.5px;width:183px;height:4px;border-radius:2px;background:#23252d"></div><div class="trk" style="left:33px;top:87.5px;width:161.0px"></div><div style="left:46.5px;top:87.5px;width:1px;height:4px;background:#6f83d8"></div><div style="left:52.5px;top:87.5px;width:1px;height:4px;background:#6f83d8"></div><div style="left:60.6px;top:87.5px;width:1px;height:4px;background:#6f83d8"></div><div style="left:68.5px;top:87.5px;width:1px;height:4px;background:#6f83d8"></div><div style="left:77.5px;top:87.5px;width:1px;height:4px;background:#6f83d8"></div><div style="left:89.4px;top:87.5px;width:1px;height:4px;background:#6f83d8"></div><div style="left:103.5px;top:87.5px;width:1px;height:4px;background:#6f83d8"></div><div style="left:122.5px;top:87.5px;width:1px;height:4px;background:#6f83d8"></div><div style="left:150.6px;top:87.5px;width:1px;height:4px;background:#6f83d8"></div><div class="knob" style="left:188.0px;top:84.0px"></div>
<span class="t" style="left:11px;top:109px">Mic/Aux</span>
<span class="t db" style="right:9px;top:108px">-3.2 dB</span>
<div class="kb" style="left:8px;top:128px"><svg style="left:9px;top:3px" width="6" height="16" viewBox="0 0 6 16" fill="#fefefe"><circle cx="3" cy="2.300" r="1.900"/><circle cx="3" cy="8" r="1.900"/><circle cx="3" cy="13.700" r="1.900"/></svg></div>
<div style="left:33px;top:126px;width:185px;height:16px;background:linear-gradient(90deg,#47e947 0,#47e947 2.700px,#0a1a0a 2.700px,#0a1a0a 4.300px,#47e947 4.300px,#47e947 41px,#0a1a0a 41px,#0a1a0a 44px,#47e947 44px,#47e947 79px,#1f7a24 79px,#1f7a24 104px,#47e947 104px,#47e947 107px,#1f7a24 107px,#1f7a24 125px,#7c6a12 125px,#7c6a12 158px,#7d1024 158px)"></div>
<div style="left:33px;top:133.500px;width:185px;height:1px;background:rgba(0,0,0,.45)"></div>
<div style="left:37.6px;top:142.0px;width:1px;height:3px;background:#fefefe"></div><span class="t lbl" style="left:30.7px;top:144.2px;width:16px;text-align:center">-60</span><div style="left:52.3px;top:142.0px;width:1px;height:3px;background:#fefefe"></div><span class="t lbl" style="left:45.4px;top:144.2px;width:16px;text-align:center">-55</span><div style="left:67.0px;top:142.0px;width:1px;height:3px;background:#fefefe"></div><span class="t lbl" style="left:60.1px;top:144.2px;width:16px;text-align:center">-50</span><div style="left:81.7px;top:142.0px;width:1px;height:3px;background:#fefefe"></div><span class="t lbl" style="left:74.8px;top:144.2px;width:16px;text-align:center">-45</span><div style="left:96.4px;top:142.0px;width:1px;height:3px;background:#fefefe"></div><span class="t lbl" style="left:89.5px;top:144.2px;width:16px;text-align:center">-40</span><div style="left:111.1px;top:142.0px;width:1px;height:3px;background:#fefefe"></div><span class="t lbl" style="left:104.2px;top:144.2px;width:16px;text-align:center">-35</span><div style="left:125.8px;top:142.0px;width:1px;height:3px;background:#fefefe"></div><span class="t lbl" style="left:118.9px;top:144.2px;width:16px;text-align:center">-30</span><div style="left:140.5px;top:142.0px;width:1px;height:3px;background:#fefefe"></div><span class="t lbl" style="left:133.6px;top:144.2px;width:16px;text-align:center">-25</span><div style="left:155.2px;top:142.0px;width:1px;height:3px;background:#fefefe"></div><span class="t lbl" style="left:148.3px;top:144.2px;width:16px;text-align:center">-20</span><div style="left:169.9px;top:142.0px;width:1px;height:3px;background:#fefefe"></div><span class="t lbl" style="left:163.0px;top:144.2px;width:16px;text-align:center">-15</span><div style="left:184.6px;top:142.0px;width:1px;height:3px;background:#fefefe"></div><span class="t lbl" style="left:177.7px;top:144.2px;width:16px;text-align:center">-10</span><div style="left:199.3px;top:142.0px;width:1px;height:3px;background:#fefefe"></div><span class="t lbl" style="left:192.4px;top:144.2px;width:16px;text-align:center">-5</span><div style="left:214.0px;top:142.0px;width:1px;height:3px;background:#fefefe"></div><span class="t lbl" style="left:207.0px;top:144.2px;width:16px;text-align:center">0</span>
<div class="kb" style="left:8px;top:154px;height:23px"><svg style="left:4px;top:5px" width="16" height="13" viewBox="0 0 16 13"><path d="M1 4.500h3l4-3.500v11l-4-3.500H1z" fill="#fefefe"/><path d="M10 4a3.500 3.500 0 0 1 0 5M12 2a6 6 0 0 1 0 9" stroke="#fefefe" stroke-width="1.400" fill="none"/></svg></div>
<div style="left:46.5px;top:163.0px;width:1px;height:11px;background:#4e525e"></div><div style="left:52.5px;top:163.0px;width:1px;height:11px;background:#4e525e"></div><div style="left:60.6px;top:163.0px;width:1px;height:11px;background:#4e525e"></div><div style="left:68.5px;top:163.0px;width:1px;height:11px;background:#4e525e"></div><div style="left:77.5px;top:163.0px;width:1px;height:11px;background:#4e525e"></div><div style="left:89.4px;top:163.0px;width:1px;height:11px;background:#4e525e"></div><div style="left:103.5px;top:163.0px;width:1px;height:11px;background:#4e525e"></div><div style="left:122.5px;top:163.0px;width:1px;height:11px;background:#4e525e"></div><div style="left:150.6px;top:163.0px;width:1px;height:11px;background:#4e525e"></div><div style="left:33px;top:166.5px;width:183px;height:4px;border-radius:2px;background:#23252d"></div><div class="trk" style="left:33px;top:166.5px;width:145.0px"></div><div style="left:46.5px;top:166.5px;width:1px;height:4px;background:#6f83d8"></div><div style="left:52.5px;top:166.5px;width:1px;height:4px;background:#6f83d8"></div><div style="left:60.6px;top:166.5px;width:1px;height:4px;background:#6f83d8"></div><div style="left:68.5px;top:166.5px;width:1px;height:4px;background:#6f83d8"></div><div style="left:77.5px;top:166.5px;width:1px;height:4px;background:#6f83d8"></div><div style="left:89.4px;top:166.5px;width:1px;height:4px;background:#6f83d8"></div><div style="left:103.5px;top:166.5px;width:1px;height:4px;background:#6f83d8"></div><div style="left:122.5px;top:166.5px;width:1px;height:4px;background:#6f83d8"></div><div style="left:150.6px;top:166.5px;width:1px;height:4px;background:#6f83d8"></div><div class="knob" style="left:172.0px;top:163.0px"></div>
<div class="dtool"><svg style="left:8px;top:7.500px" width="16" height="14" viewBox="0 0 16 14"><circle cx="6" cy="8" r="3.200" fill="none" stroke="#fefefe" stroke-width="2.600" stroke-dasharray="2 1.350"/><circle cx="6" cy="8" r="2.600" fill="none" stroke="#fefefe" stroke-width="1.400"/><circle cx="12.500" cy="3.500" r="1.800" fill="none" stroke="#fefefe" stroke-width="1.800" stroke-dasharray="1.300 .9"/><circle cx="12.500" cy="3.500" r="1.400" fill="none" stroke="#fefefe" stroke-width="1"/></svg>
<svg style="left:47px;top:6.500px" width="6" height="16" viewBox="0 0 6 16" fill="#fefefe"><circle cx="3" cy="2.300" r="2"/><circle cx="3" cy="8" r="2"/><circle cx="3" cy="13.700" r="2"/></svg></div>
</div>

<!-- Scenes -->
<div class="dock" style="left:229px;width:187px">
<div class="dtitle"><span class="t">Scenes</span><svg class="flt" style="left:170px" viewBox="0 0 10 10" fill="none" stroke="#fefefe" stroke-width="1.300"><path d="M.7 5V.7h6.300V3"/><rect x="3.400" y="3.700" width="5.900" height="4.900" fill="#3a3e4a"/><path d="M3.400 4.600h5.900" stroke-width="1.600"/></svg></div>
<div style="left:3px;top:25.500px;width:181px;height:29.500px;background:#284cb8;border-radius:3px"><span class="t" style="left:8px;top:7.500px;font-size:13.5px;letter-spacing:-0.3px">Scene</span></div>
<div class="dtool"><svg style="left:9px;top:7.500px" width="140" height="15" viewBox="0 0 140 15" fill="none" stroke="#fefefe" stroke-width="1.800"><path d="M6.500 1v12M.5 7h12"/><path d="M29.500 3.500h12M33 3V1.500h5V3M31 4v8.500a1 1 0 0 0 1 1h7a1 1 0 0 0 1-1V4" /><path d="M33.800 6v5.500M35.500 6v5.500M37.300 6v5.500" stroke-width="1.100"/><rect x="63.500" y="1.500" width="11" height="12" rx="1.500"/><rect x="65.500" y="3.500" width="7" height="8" fill="url(#fg)" stroke="none"/><path d="M97 10l5.500-5.500 5.500 5.500"/><path d="M125 5l5.500 5.500 5.500-5.500"/></svg></div>
</div>

<!-- Scene transitions + sources -->
<div class="dock" style="left:420px;width:140px">
<div class="dtitle"><span class="t">Scene Transitions</span></div>
<div class="btn" style="left:5px;top:30px;width:131px;height:30.500px"><span class="t" style="left:9px;right:auto;top:8px">Fade</span></div>
<span class="t" style="left:5px;top:75px;font-size:13.5px">Duration</span>
<div class="btn" style="left:63px;top:66.500px;width:73px;height:30.500px"></div>
</div>
<div class="dock src" style="left:564px;width:310.500px">
<div class="dtitle"><span class="t">Sources</span><svg class="flt" style="left:293px" viewBox="0 0 10 10" fill="none" stroke="#fefefe" stroke-width="1.300"><path d="M.7 5V.7h6.300V3"/><rect x="3.400" y="3.700" width="5.900" height="4.900" fill="#3a3e4a"/><path d="M3.400 4.600h5.900" stroke-width="1.600"/></svg></div>
<span class="t" style="right:61px;top:34.500px">Window Capture</span>
<span class="t" style="right:72.500px;top:64.500px">Game Capture</span>
<span class="t" style="right:100px;top:94.500px">horror</span>
<span class="t" style="right:106.500px;top:124.500px">ninja</span>
<span class="t" style="right:64.500px;top:154.500px;color:#fefefe">Display Capture</span>
<svg style="left:257px;top:33.5px" width="17" height="15" viewBox="0 0 17 15"><path d="M1 7.500C3.500 3.200 6 2 8.500 2s5 1.200 7.500 5.500C13.500 11.800 11 13 8.500 13S3.500 11.800 1 7.500z" fill="#aaadb4"/><circle cx="8.500" cy="7.500" r="3" fill="#272a33"/><circle cx="8.500" cy="7.500" r="1.400" fill="#aaadb4"/><path d="M2.500 14L14.500 1" stroke="#272a33" stroke-width="3.600"/><path d="M2.800 13.800L14.200 1.200" stroke="#aaadb4" stroke-width="1.500"/></svg><svg style="left:285px;top:32.0px" width="14" height="17" viewBox="0 0 14 17"><path d="M3.500 8V5a3.200 3.200 0 0 1 6.400 0v1" fill="none" stroke="#aaadb4" stroke-width="2"/><rect x="1" y="7.500" width="12.500" height="9" rx="1" fill="#aaadb4"/></svg>
<svg style="left:257px;top:63.5px" width="17" height="15" viewBox="0 0 17 15"><path d="M1 7.500C3.500 3.200 6 2 8.500 2s5 1.200 7.500 5.500C13.500 11.800 11 13 8.500 13S3.500 11.800 1 7.500z" fill="#aaadb4"/><circle cx="8.500" cy="7.500" r="3" fill="#272a33"/><circle cx="8.500" cy="7.500" r="1.400" fill="#aaadb4"/><path d="M2.500 14L14.500 1" stroke="#272a33" stroke-width="3.600"/><path d="M2.800 13.800L14.200 1.200" stroke="#aaadb4" stroke-width="1.500"/></svg><svg style="left:285px;top:62.0px" width="14" height="17" viewBox="0 0 14 17"><path d="M3.500 8V5a3.200 3.200 0 0 1 6.400 0v1" fill="none" stroke="#aaadb4" stroke-width="2"/><rect x="1" y="7.500" width="12.500" height="9" rx="1" fill="#aaadb4"/></svg>
<svg style="left:257px;top:93.5px" width="17" height="15" viewBox="0 0 17 15"><path d="M1 7.500C3.500 3.200 6 2 8.500 2s5 1.200 7.500 5.500C13.500 11.800 11 13 8.500 13S3.500 11.800 1 7.500z" fill="#aaadb4"/><circle cx="8.500" cy="7.500" r="3" fill="#272a33"/><circle cx="8.500" cy="7.500" r="1.400" fill="#aaadb4"/><path d="M2.500 14L14.500 1" stroke="#272a33" stroke-width="3.600"/><path d="M2.800 13.800L14.200 1.200" stroke="#aaadb4" stroke-width="1.500"/></svg><svg style="left:285px;top:92.0px" width="14" height="17" viewBox="0 0 14 17"><path d="M3.800 9V5.500a3.200 3.200 0 0 1 6.400 0V9" fill="none" stroke="#fefefe" stroke-width="2"/><rect x="1" y="7.500" width="12.500" height="9" rx="1" fill="#fefefe"/></svg>
<svg style="left:257px;top:123.5px" width="17" height="15" viewBox="0 0 17 15"><path d="M1 7.500C3.500 3.200 6 2 8.500 2s5 1.200 7.500 5.500C13.500 11.800 11 13 8.500 13S3.500 11.800 1 7.500z" fill="#aaadb4"/><circle cx="8.500" cy="7.500" r="3" fill="#272a33"/><circle cx="8.500" cy="7.500" r="1.400" fill="#aaadb4"/><path d="M2.500 14L14.500 1" stroke="#272a33" stroke-width="3.600"/><path d="M2.800 13.800L14.200 1.200" stroke="#aaadb4" stroke-width="1.500"/></svg><svg style="left:285px;top:122.0px" width="14" height="17" viewBox="0 0 14 17"><path d="M3.800 9V5.500a3.200 3.200 0 0 1 6.400 0V9" fill="none" stroke="#fefefe" stroke-width="2"/><rect x="1" y="7.500" width="12.500" height="9" rx="1" fill="#fefefe"/></svg>
<svg style="left:257px;top:153.5px" width="17" height="15" viewBox="0 0 17 15"><path d="M1 7.500C3.500 3.200 6 2 8.500 2s5 1.200 7.500 5.500C13.500 11.800 11 13 8.500 13S3.500 11.800 1 7.500z" fill="#fefefe"/><circle cx="8.500" cy="7.500" r="3.100" fill="#272a33"/><circle cx="8.500" cy="7.500" r="1.600" fill="#fefefe"/></svg><svg style="left:285px;top:152.0px" width="14" height="17" viewBox="0 0 14 17"><path d="M3.500 8V5a3.200 3.200 0 0 1 6.400 0v1" fill="none" stroke="#aaadb4" stroke-width="2"/><rect x="1" y="7.500" width="12.500" height="9" rx="1" fill="#aaadb4"/></svg>
<div class="dtool"><div style="left:184.500px;top:4px;width:21px;height:22.500px;border-radius:3px;background:#24272f"></div><div style="left:218.500px;top:4px;width:21px;height:22.500px;border-radius:3px;background:#24272f"></div><div style="left:246px;top:4px;width:21px;height:22.500px;border-radius:3px;background:#24272f"></div><svg style="left:187px;top:7px" width="80" height="16" viewBox="0 0 80 16"><path transform="translate(1.400 1.600) scale(.82)" fill="#fefefe" fill-rule="evenodd" d="M6.700 0h2.600l.4 2.100 1.200.5 1.800-1.200 1.800 1.800-1.200 1.800.5 1.200 2.100.4v2.600l-2.100.4-.5 1.200 1.200 1.800-1.800 1.800-1.800-1.200-1.200.5-.4 2.100H6.700l-.4-2.100-1.200-.5-1.800 1.200-1.800-1.800 1.200-1.800-.5-1.200L0 9.300V6.700l2.100-.4.500-1.200-1.200-1.800 1.800-1.800 1.800 1.200 1.200-.5zM8 5.200a2.800 2.800 0 1 0 0 5.600 2.800 2.800 0 0 0 0-5.600z"/><g fill="none" stroke="#fefefe" stroke-width="1.800"><path d="M36 11l5.500-5.500L47 11"/><path d="M64 6l5.500 5.500L75 6"/></g></svg></div>
</div>

<!-- Controls -->
<div class="dock" style="left:879px;width:397px">
<div class="dtitle"><span class="t">Controls</span><svg class="flt" style="left:383px" viewBox="0 0 10 10" fill="none" stroke="#fefefe" stroke-width="1.300"><path d="M.7 5V.7h6.300V3"/><rect x="3.400" y="3.700" width="5.900" height="4.900" fill="#3a3e4a"/><path d="M3.400 4.600h5.900" stroke-width="1.600"/></svg></div>
<div class="btn" style="left:7px;top:30.500px;width:386px"><span class="t">Start Streaming</span></div>
<div class="btn" style="left:7px;top:66.500px;width:351px;background:#284cb8"><span class="t">Stop Recording</span></div>
<div class="btn" style="left:362px;top:66.500px;width:31px"><svg style="left:10px;top:9px" width="12" height="13" viewBox="0 0 12 13" fill="#fefefe"><rect x="0" y="0" width="4.400" height="13"/><rect x="7.200" y="0" width="4.400" height="13"/></svg></div>
<div class="btn" style="left:7px;top:102.500px;width:351px"><span class="t">Start Virtual Camera</span></div>
<div class="btn" style="left:362px;top:102.500px;width:31px"><svg style="left:9px;top:9px" width="14" height="14" viewBox="0 0 16 16"><path fill="#fefefe" fill-rule="evenodd" d="M6.700 0h2.600l.4 2.100 1.200.5 1.800-1.200 1.800 1.800-1.200 1.800.5 1.200 2.100.4v2.600l-2.100.4-.5 1.200 1.200 1.800-1.800 1.800-1.800-1.200-1.200.5-.4 2.100H6.700l-.4-2.100-1.200-.5-1.800 1.200-1.800-1.800 1.200-1.800-.5-1.200L0 9.300V6.700l2.100-.4.500-1.200-1.200-1.800 1.800-1.800 1.800 1.200 1.200-.5zM8 5.200a2.800 2.800 0 1 0 0 5.600 2.800 2.800 0 0 0 0-5.600z"/></svg></div>
<div class="btn" style="left:7px;top:138.500px;width:386px"><span class="t">Studio Mode</span></div>
<div class="btn" style="left:7px;top:174.500px;width:386px"><span class="t">Settings</span></div>
</div>

<!-- status bar -->
<div class="status">
<div class="sep" style="left:862px"></div><div class="sep" style="left:894px"></div><div class="sep" style="left:982px"></div><div class="sep" style="left:1071px"></div><div class="sep" style="left:1155px"></div>
<svg style="left:870px;top:8.500px" width="16" height="14" viewBox="0 0 16 14" fill="#565a65"><rect x="0" y="10" width="3" height="4"/><rect x="4.300" y="7" width="3" height="7"/><rect x="8.600" y="4" width="3" height="10"/><rect x="12.900" y="0" width="3" height="14"/></svg>
<svg style="left:903px;top:9.500px" width="14" height="12" viewBox="0 0 14 12"><circle cx="7" cy="6" r="2.400" fill="#9a9da6"/><path d="M3.800 2.500a5 5 0 0 0 0 7M10.200 2.500a5 5 0 0 1 0 7M1.800 .8a8 8 0 0 0 0 10.400M12.200 .8a8 8 0 0 1 0 10.400" fill="none" stroke="#5a5d68" stroke-width="1.200"/></svg>
<span class="t" style="left:923px;color:#9a9da6">00:00:00</span>
<div style="left:991px;top:8.500px;width:14px;height:14px;border-radius:7px;background:#dc0c1c"></div>
<span class="t" style="left:1012px">00:02:09</span>
<span class="t" style="left:1079px;word-spacing:-1.200px;letter-spacing:-.25px">CPU: 10.5%</span>
<span class="t" style="left:1163px;word-spacing:0;letter-spacing:0">60.00 / 60.00 FPS</span>
</div>
<div class="task">
<div style="left:948.500px;top:4px;width:39.500px;height:40px;border-radius:4px;background:#322f2b;border:1px solid #3a3733"></div>
<svg style="left:0;top:-.3px" width="1280" height="49" viewBox="0 671 1280 49">
<defs>
<linearGradient id="moon" x1="0" y1="0" x2="0" y2="1"><stop offset="0" stop-color="#fbc540"/><stop offset="1" stop-color="#ee7a22"/></linearGradient>
<linearGradient id="cloud" x1="0" y1="0" x2="0" y2="1"><stop offset="0" stop-color="#fbfcff"/><stop offset="1" stop-color="#9fb4e6"/></linearGradient>
<linearGradient id="win" x1="0" y1="0" x2="1" y2="1"><stop offset="0" stop-color="#6fe6fa"/><stop offset="1" stop-color="#1593e0"/></linearGradient>
<linearGradient id="cop1" x1="0.300" y1="0" x2=".4" y2="1"><stop offset="0" stop-color="#2a7df0"/><stop offset=".45" stop-color="#35c9a0"/><stop offset="1" stop-color="#f7d23a"/></linearGradient>
<linearGradient id="cop2" x1=".6" y1="0" x2=".4" y2="1"><stop offset="0" stop-color="#a550f0"/><stop offset=".5" stop-color="#f0509a"/><stop offset="1" stop-color="#f98a3a"/></linearGradient>
<linearGradient id="edge" x1="1" y1="0" x2="0" y2="1"><stop offset="0" stop-color="#7be05a"/><stop offset=".35" stop-color="#2fc2c8"/><stop offset=".7" stop-color="#1a86dc"/><stop offset="1" stop-color="#0c55a8"/></linearGradient>
<linearGradient id="rbx" x1="0" y1="0" x2="1" y2="1"><stop offset="0" stop-color="#f4f4f4"/><stop offset="1" stop-color="#8c8c8c"/></linearGradient>
<linearGradient id="steam" x1="0" y1="0" x2="0" y2="1"><stop offset="0" stop-color="#13265c"/><stop offset=".5" stop-color="#153a74"/><stop offset="1" stop-color="#2c9cc6"/></linearGradient>
<linearGradient id="fold" x1="0" y1="0" x2="0" y2="1"><stop offset="0" stop-color="#fbdc6a"/><stop offset="1" stop-color="#f2bd35"/></linearGradient>
<linearGradient id="app" x1="0" y1="0" x2="0" y2="1"><stop offset="0" stop-color="#ee8c88"/><stop offset="1" stop-color="#f5c9ad"/></linearGradient>
<clipPath id="appc"><rect x="956" y="684" width="25" height="24"/></clipPath>
</defs>
<!-- widgets -->
<circle cx="32.500" cy="695.200" r="10.600" fill="url(#moon)"/>
<circle cx="29.800" cy="688.800" r="8.800" fill="#1d2232"/>
<path d="M21 692.500a3 3 0 0 1 1.500-5.600 5 5 0 0 1 9.500-1.200 3.600 3.600 0 0 1 1 6.800z" fill="url(#cloud)"/>
<circle cx="39.400" cy="686" r="8" fill="#f4a2ba"/>
<text x="39.400" y="690" text-anchor="middle" font-family="Liberation Sans,sans-serif" font-size="11" fill="#6d1233">4</text>
<!-- start -->
<g fill="url(#win)"><rect x="295.600" y="684.500" width="11.700" height="11.400" rx=".8"/><rect x="308.300" y="684.500" width="11.700" height="11.400" rx=".8"/><rect x="295.600" y="696.900" width="11.700" height="11.400" rx=".8"/><rect x="308.300" y="696.900" width="11.700" height="11.400" rx=".8"/></g>
<!-- search -->
<path d="M358 701l4.200 4.800" stroke="#f0f0f0" stroke-width="3.200" stroke-linecap="round"/>
<circle cx="351.600" cy="694.500" r="8.600" fill="#56565a" stroke="#f4f4f4" stroke-width="2.300"/>
<!-- task view -->
<rect x="385" y="690.700" width="18" height="15.700" rx="1.500" fill="#6f6f6f"/>
<rect x="390.600" y="684.500" width="18.200" height="16.900" rx="2" fill="#f3f3f3"/>
<rect x="390.600" y="690.700" width="12.400" height="10.700" fill="#c9c9c9"/>
<!-- copilot -->
<rect x="431" y="684.500" width="13.500" height="17" rx="5" transform="skewX(-14) translate(173 0)" fill="url(#cop1)"/>
<rect x="438.500" y="689.300" width="13.500" height="17" rx="5" transform="skewX(-14) translate(174 0)" fill="url(#cop2)"/>
<path d="M440.500 690c1.500 2 .5 7-1 10" stroke="#1f2a8a" stroke-width="2.200" fill="none" opacity=".75"/>
<!-- chrome -->
<g transform="translate(484.750 695.750)">
<path d="M0 0L-10.570 -6.100A12.200 12.200 0 0 1 10.570 -6.100z" fill="#e33b2e"/>
<path d="M0 0L10.570 -6.100A12.200 12.200 0 0 1 0 12.200z" fill="#fbc116"/>
<path d="M0 0L0 12.200A12.200 12.200 0 0 1 -10.570 -6.100z" fill="#2fa24c"/>
<path d="M-10.570 -6.100A12.200 12.200 0 0 1 10.570 -6.100L11.800 -3H0z" fill="#e33b2e"/>
<path d="M11.800 -3a12.200 12.200 0 0 1-9.300 14.900L5 2z" fill="#fbc116"/>
<circle r="5.800" fill="#fefefe"/><circle r="4.500" fill="#3b7de0"/>
</g>
<!-- teams -->
<circle cx="533.800" cy="689.800" r="3.100" fill="#7b83eb"/>
<rect x="529" y="693.500" width="10.400" height="11.500" rx="3" fill="#6a70d8"/>
<circle cx="525" cy="688.200" r="3.700" fill="#8b92f0"/>
<rect x="519" y="692.700" width="14" height="14.300" rx="3.500" fill="#7b83eb"/>
<rect x="516" y="692.500" width="11.500" height="11.500" rx="1.500" fill="#4e56c4"/>
<text x="521.750" y="701.600" text-anchor="middle" font-family="Liberation Sans,sans-serif" font-weight="bold" font-size="8.500" fill="#fefefe">T</text>
<!-- edge -->
<circle cx="572.800" cy="696" r="12.200" fill="url(#edge)"/>
<path d="M572 684c7-.5 13 5 13 12 0 3-2 5.500-5.500 5.500h-5c-1.500 0-1.500-1.500-.5-2.500 2-2 1-6-3-6.500-3-.3-6 1.500-8 4.500 0-7 3.500-12.500 9-13z" fill="#6fd95c" opacity=".8"/>
<path d="M561 699c0-7 5-11 11-11 7 0 11.500 4 12.500 8.500 .5 3-1.500 5-5 5h-6.500c-1.500 0-1.500-1.500-.5-2.500 1.500-1.500 1.500-3.500 0-4.500-2.500-1.500-6 .5-6 4 0 5 4 8.500 9 9.500-7 1-14.500-3-14.500-9z" fill="#1468c0" opacity=".85"/>
<path d="M566.500 698.500c0 5 4 8.500 9 9.500 4-.5 7-2.500 8.500-5-3 2-7 2-9.500 0-2-1.500-2.500-4-1.500-6-2-1.200-6.500.5-6.500 1.500z" fill="#0d4d96"/>
<circle cx="573.500" cy="696.800" r="2.300" fill="#17274a"/>
<!-- solitaire -->
<rect x="617" y="686" width="8.500" height="18" rx="1" fill="#2879c4" transform="rotate(6 621 695)"/>
<rect x="606.800" y="686.300" width="13.800" height="20.500" rx="1.300" fill="#f4f4f4" transform="rotate(-8 613.500 696.500)"/>
<path d="M613.500 690.500c2.500 2.800 5 4.500 5 6.800 0 2.700-3.300 3.200-4.500 1.200l.9 2.800h-2.800l.9-2.800c-1.200 2-4.500 1.500-4.500-1.200 0-2.300 2.500-4 5-6.800z" fill="#1c1c1e" transform="rotate(-8 613.500 696.500)"/>
<circle cx="608.500" cy="689.800" r=".9" fill="#1c1c1e"/><circle cx="619.500" cy="703.500" r=".9" fill="#1c1c1e"/>
<path d="M624.600 684.500v7M621.100 688h7" stroke="#f4f8ff" stroke-width="1.500"/>
<!-- spotify -->
<circle cx="660.600" cy="695.750" r="12" fill="#21d862"/>
<g fill="none" stroke="#17191a" stroke-linecap="round"><path d="M653.500 691.500c5-1.500 10.500-1 15 1.300" stroke-width="2.300"/><path d="M654.300 695.600c4.300-1.200 8.700-.8 12.500 1.200" stroke-width="1.900"/><path d="M655 699.400c3.500-1 7-.6 10 1" stroke-width="1.600"/></g>
<!-- ibis paint -->
<rect x="692.500" y="684" width="24.800" height="24" fill="#2d6ba2"/>
<circle cx="709.300" cy="694.300" r="4.300" fill="none" stroke="#f0c020" stroke-width="2.600"/>
<path d="M709.300 690a4.300 4.300 0 0 1 4.300 4.300" fill="none" stroke="#e8386a" stroke-width="2.600"/>
<path d="M705 694.300a4.300 4.300 0 0 1 4.300-4.300" fill="none" stroke="#48c858" stroke-width="2.600"/>
<path d="M713.600 694.300a4.300 4.300 0 0 1-4.300 4.300" fill="none" stroke="#b048d8" stroke-width="2.600"/>
<text x="696.600" y="704" font-family="Liberation Sans,sans-serif" font-weight="bold" font-size="16" fill="#fefefe" textLength="10.500" lengthAdjust="spacingAndGlyphs">iP</text>
<!-- roblox -->
<g transform="rotate(15 748.500 695.750)"><rect x="739" y="686.250" width="19" height="19" fill="url(#rbx)"/><rect x="746.500" y="693.700" width="4" height="4" fill="#1d1f28"/></g>
<!-- epic -->
<path d="M783 684.400h19v18.600l-9.500 4.400-9.500-4.400z" fill="#0c0c0c" stroke="#e8e8e8" stroke-width=".8"/>
<text x="792.500" y="696.300" text-anchor="middle" font-family="Liberation Sans,sans-serif" font-weight="bold" font-size="10.500" fill="#fefefe" textLength="15" lengthAdjust="spacingAndGlyphs">EPIC</text>
<text x="792.500" y="701" text-anchor="middle" font-family="Liberation Sans,sans-serif" font-weight="bold" font-size="3.800" fill="#fefefe" textLength="13" lengthAdjust="spacingAndGlyphs">GAMES</text>
<path d="M790.500 704h4l-2 1.200z" fill="#e8e8e8"/>
<!-- steam -->
<circle cx="836.100" cy="695.900" r="12" fill="url(#steam)"/>
<path d="M824.300 694.500l7.500 3.200c1-.6 2-.8 3-.6l3.300-4.600 5 3.600-4.500 3.500c0 2.500-2 4.300-4.300 4.300-2 0-3.700-1.400-4.200-3.300l-6-2.500z" fill="#fefefe"/>
<circle cx="841" cy="691.700" r="4.200" fill="#fefefe"/><circle cx="841" cy="691.700" r="2.500" fill="#1b4a86"/>
<circle cx="834.200" cy="699.600" r="2.400" fill="#fefefe" stroke="#2a6aa0" stroke-width=".8"/>
<!-- obs -->
<circle cx="880.800" cy="695.900" r="10.800" fill="#1c1a1a" stroke="#f0f0f0" stroke-width="1.700"/>
<g fill="none" stroke="#f0f0f0" stroke-width="2.500" stroke-linecap="round"><path d="M881.600 687.600C877.800 689.200 877.200 693.800 880 696.200"/><path d="M888.700 699.600C885.600 702.300 881.400 700.500 880.800 696.900"/><path d="M873.400 700.700C874 696.600 878.300 695 881.100 697.100"/></g>
<circle cx="890.700" cy="687.200" r="6" fill="#ee0a1c"/>
<!-- folder -->
<path d="M912.700 687.200c0-1.400 1-2.400 2.400-2.400h6.200l2.700 2.500h10.600c1.400 0 2.400 1 2.400 2.400v15c0 1.400-1 2.400-2.400 2.400h-19.500c-1.400 0-2.400-1-2.400-2.400z" fill="#e9a92a"/>
<rect x="912.700" y="688.300" width="24.300" height="18.800" rx="2" fill="url(#fold)"/>
<path d="M918 707.100v-6.300c0-1.200.8-2 2-2h9.600c1.200 0 2 .8 2 2v6.300z" fill="#2a86d6"/>
<rect x="921.500" y="701.500" width="6.600" height="1.600" rx=".8" fill="#8ccaf4"/>
<!-- bongo app -->
<g clip-path="url(#appc)"><rect x="956" y="684" width="25" height="24" fill="url(#app)"/>
<path d="M955 708v-6.500l2.500-2.500 2 1.500 3.500-1 1.500-3.500 3 2.500h5l3.500-2 1.500 4 3.500-2.500 2 4v6z" fill="#fefefe"/>
<circle cx="966" cy="703.500" r=".8" fill="#3c2c2c"/><circle cx="972.500" cy="704.200" r=".8" fill="#3c2c2c"/><circle cx="959" cy="703.500" r="1.300" fill="#f4a097"/><circle cx="977.500" cy="704" r="1.300" fill="#f4a097"/></g>
<rect x="960.600" y="712.700" width="16.200" height="2.600" rx="1.300" fill="#4cb9f2"/>
<rect x="833.300" y="712.400" width="5.800" height="2.400" rx="1.200" fill="#8d8d8d"/><rect x="877.900" y="712.400" width="5.800" height="2.400" rx="1.200" fill="#8d8d8d"/><rect x="921.900" y="712.400" width="5.800" height="2.400" rx="1.200" fill="#8d8d8d"/>
<!-- tray -->
<path d="M1059 698.800l5.400-5.400 5.400 5.400" fill="none" stroke="#fefefe" stroke-width="1.700"/>
<g fill="none" stroke="#5fcad2" stroke-width="1.500"><rect x="1094.600" y="688.600" width="5.200" height="9.400" rx="2.600"/><path d="M1092.200 695c0 3 2 5 5 5s5-2 5-5M1097.200 700v3.800"/></g>
<g fill="none" stroke="#fefefe" stroke-width="1.500" stroke-linecap="round"><path d="M1121.300 693.500a11 11 0 0 1 15 0"/><path d="M1123.700 696.300a7.500 7.500 0 0 1 10.200 0"/><path d="M1126.200 698.900a3.900 3.900 0 0 1 5.200 0"/></g><circle cx="1128.800" cy="700.800" r="1.200" fill="#fefefe"/>
<g fill="none" stroke="#fefefe" stroke-width="1.400" stroke-linejoin="round"><path d="M1144.700 693.300h2.800l4-3.600v12.600l-4-3.600h-2.800z"/><path d="M1154 693.300a3.700 3.700 0 0 1 0 5.400M1156.300 691a7 7 0 0 1 0 10M1158.600 688.700a10.300 10.300 0 0 1 0 14.600" stroke-linecap="round"/></g>
<rect x="1169.200" y="690.800" width="18.400" height="10.400" rx="2.800" fill="#a9e2a2" stroke="#fefefe" stroke-width="1.500"/><path d="M1188.800 694v4" stroke="#fefefe" stroke-width="1.800" stroke-linecap="round"/>
<path d="M1179.300 687.800l-3.800 6h3l-1 4.700 4.200-6.200h-3.100z" fill="#fefefe" stroke="#2c3a2c" stroke-width=".9"/>
</svg>
<span class="t" style="right:19.500px;top:9.800px;font-size:12.800px;letter-spacing:-.45px">4:04 PM</span>
<span class="t" style="right:19.500px;top:25.600px;font-size:12.800px;letter-spacing:-.05px">2/23/2026</span>
</div>
<!-- game window -->
<div style="left:499px;top:339px;width:241px;height:6px;background:#2f323b"></div>
<svg style="left:499px;top:307px" width="241" height="33" viewBox="0 0 241 33">
<defs>
<linearGradient id="sky" x1="0" x2="1" y1="0" y2="0"><stop offset="0" stop-color="#4b9bea"/><stop offset=".45" stop-color="#43a0e0"/><stop offset="1" stop-color="#3b9bc4"/></linearGradient>
<linearGradient id="loot" x1="0" x2="0" y1="0" y2="1"><stop offset="0" stop-color="#f6c070"/><stop offset=".5" stop-color="#f0a45c"/><stop offset=".5" stop-color="#e66456"/><stop offset="1" stop-color="#e0584e"/></linearGradient>
<linearGradient id="grass" x1="0" x2="0" y1="0" y2="1"><stop offset="0" stop-color="#2fae3a"/><stop offset="1" stop-color="#63dc3e"/></linearGradient>
<clipPath id="bclip"><rect x="0" y="0" width="241" height="33"/></clipPath>
</defs>
<g clip-path="url(#bclip)">
<rect width="241" height="33" fill="url(#sky)"/>
<path d="M0 0h88c-10 2.500-26 3.500-40 5S12 9.500 0 11.500z" fill="#3b2cb6"/>
<path d="M122 0C134 2.500 144 8.500 160 9.700S196 9.500 206 6.500 218 1.500 224 0z" fill="#4630bf"/>
<path d="M0 24c3-1.500 5-3 8-3s5 1.500 9 1.500 8-3 13-3 9 3 15 3 30-1 36-1c3 0 4-4.500 7.500-4.500s5 4.500 8 4.500h40c3 0 5-6.500 10.500-6.500S153 22 157 22h84v4H0z" fill="#175c2a"/>
<rect x="0" y="23.500" width="241" height="10" fill="url(#grass)"/>
<path d="M83 23.500c1-3 3-5 5.500-5s5 2 6 5z" fill="#3dbb48" stroke="#175c2a" stroke-width=".8"/>
<path d="M138 24c0-3 2-4 3.500-4.500C142 17 144 16 146 16s4 1.500 4 3.500c2 .5 3 2 3 4.500z" fill="#43c04e" stroke="#175c2a" stroke-width=".9"/>
<!-- Tap Tap -->
<rect x="7.500" y="4.500" width="18.500" height="12" rx="2" fill="#8d7fae" stroke="#fbf4f4" stroke-width="1.200"/>
<rect x="10" y="17.700" width="18.500" height="12" rx="2" fill="#8d7fae" stroke="#fbf4f4" stroke-width="1.200"/>
<text x="9.600" y="14" font-family="Liberation Sans,sans-serif" font-weight="bold" font-size="9.500" fill="#fefefe" textLength="14.500" lengthAdjust="spacingAndGlyphs">Tap</text>
<text x="12.100" y="27.200" font-family="Liberation Sans,sans-serif" font-weight="bold" font-size="9.500" fill="#fefefe" textLength="14.500" lengthAdjust="spacingAndGlyphs">Tap</text>
<!-- LOOT -->
<g font-family="Liberation Sans,sans-serif" font-weight="bold" font-size="33" transform="translate(30.800 28.200) scale(.53 1)">
<text x="0" y="0" fill="none" stroke="#fbeaea" stroke-width="7" stroke-linejoin="round">LOOT</text>
<text x="0" y="0" fill="none" stroke="#5a2c2c" stroke-width="3.600" stroke-linejoin="round">LOOT</text>
<text x="0" y="0" fill="url(#loot)">LOOT</text>
</g>
<!-- cat hero -->
<g>
<path d="M119 25.500c6 .5 12-.5 15-1.500l.8 2.600c-4 1.200-10 1.800-15.800 1.300z" fill="#f4f4f6" stroke="#3a2c30" stroke-width=".8"/>
<path d="M107 32.500c1-4 1.500-9 3.500-12l8 .5c2 3 3.500 8 3 12h-4l-1.500-5-3.500 5z" fill="#fefefe" stroke="#3a2c30" stroke-width=".8"/>
<path d="M118 20.500c2 3 3.500 8 3.500 12h-3c0-4-1-7-2.500-9z" fill="#b9683e"/>
<path d="M109.500 17.500l9.500.5 2 4-6 3-6.500-3.500z" fill="#2f9f62"/>
<path d="M102.500 2.500l4.500 3.500c2.500-1 6-1 8.500-.5l4-4 2 7.500c1 3 .5 6.500-1.500 8.500-3 2.500-11 2.800-14.500.5-3-2-3.800-5.500-3.200-8.500z" fill="#fefefe" stroke="#3a2c30" stroke-width=".9"/>
<path d="M102.800 3.200l4.200 3c2-1 4-1.200 6-1l-1.500 5c-2.500.5-4 2.500-4.500 5l-3.500-1c-1.500-2-1.700-4.500-1.200-6.500z" fill="#f39a2c"/>
<path d="M119.400 2.300l1.800 6.800c.6 2 .4 4-.5 5.800l-3-1c.3-2.500-.5-4.500-2.200-5.500l.2-2.800z" fill="#9aa0b8"/>
<circle cx="110" cy="12.500" r="1.200" fill="#3a2c30"/><circle cx="116.500" cy="12.500" r="1.200" fill="#3a2c30"/>
<path d="M112.300 14.500h2l-1 1.200z" fill="#f08a8a"/>
<circle cx="103.500" cy="25.500" r="5.800" fill="#8a6a50" stroke="#2e2426" stroke-width="1.300"/>
<path d="M100.500 24l3.500-1.500 2.500 2.500-3.500 2.500z" fill="#b79a7c"/>
</g>
<!-- chest -->
<g>
<path d="M158 33V19.500c0-2.500 2-4 4.500-4h18c2.500 0 4.500 1.500 4.500 4V33z" fill="#b87a48" stroke="#2e2022" stroke-width="1.300"/>
<rect x="158.700" y="24.500" width="25.600" height="8.500" fill="#96607c"/>
<rect x="158.700" y="23.300" width="25.600" height="1.600" fill="#6e4032"/>
<rect x="161.500" y="16.200" width="2.700" height="17" fill="#f3e4e4"/><rect x="178.500" y="16.200" width="2.700" height="17" fill="#f3e4e4"/>
<rect x="168.500" y="22.300" width="5.500" height="4.200" rx="1" fill="#f0e0d0" stroke="#5a3a30" stroke-width=".7"/>
<path d="M185 22.500h9" stroke="#175c2a" stroke-width="1.200"/>
</g>
<!-- notification -->
<rect x="194" y="6.500" width="40" height="20" fill="#cfe2d6" opacity=".88"/>
<path d="M194 26.500l12-9M234 26.500l-12-9" stroke="#e4f0e8" stroke-width=".7" opacity=".8"/>
<path d="M214 9c-3.200 0-4.300 2.500-4.300 5.500 0 2.800-.8 4.200-2 5.500h12.600c-1.200-1.300-2-2.700-2-5.500 0-3-1.100-5.500-4.300-5.500zm-1.400 11.700a1.400 1.400 0 0 0 2.800 0z" fill="#48504e"/>
<path d="M236 20c1.500-1 3-1.500 5-1.500V26h-5z" fill="#174a26"/>
</g>
<g transform="translate(221.5 1.5) scale(0.93) rotate(14 7 7)"><path d="M4.500 2.500c-1.500-2 .5-3 2-1.500l1 1.500 1-1.500c1.500-1.500 3.500-.5 2 1.500z" fill="#fbe0db"/><rect x="0" y="2.500" width="15" height="4.500" rx=".8" fill="#eda299" stroke="#fbe0db" stroke-width="2.100"/><rect x="1.200" y="7" width="12.600" height="8" fill="#eda299" stroke="#fbe0db" stroke-width="2.100"/><path d="M7.500 2.500V15" stroke="#fbe0db" stroke-width="2.800"/></g>
</svg>

<div style="left:499px;top:344px;width:241px;height:288px;background:linear-gradient(#e89488 0,#e69688 14%,#e0a283 40%,#e7b88f 65%,#f0d0a4 85%,#f5deb0 100%)"></div>
<div style="left:499px;top:344px;width:241px;height:34px;background:#dc7674;border-bottom:1.500px solid #f3bcb6"></div>
<div style="left:507.500px;top:351px;width:31px;height:27px;background:#f6cbc6;border-radius:3px 3px 0 0"></div>
<div style="left:541px;top:351px;width:31px;height:25.500px;background:#e9958e;border-radius:3px 3px 0 0"></div>
<div style="left:574px;top:351px;width:31px;height:25.500px;background:#e9958e;border-radius:3px 3px 0 0"></div>
<div style="left:607.500px;top:351px;width:31px;height:25.500px;background:#e9958e;border-radius:3px 3px 0 0"></div>
<div style="left:641px;top:351px;width:31px;height:25.500px;background:#e9958e;border-radius:3px 3px 0 0"></div>
<div style="left:674px;top:351px;width:31px;height:25.500px;background:#e9958e;border-radius:3px 3px 0 0"></div>
<div style="left:712px;top:350.500px;width:20px;height:20px;background:#f2cfd0"></div>
<svg style="left:499px;top:344px" width="241" height="34" viewBox="0 0 241 34">
<g fill="#4b2b2a">
<!-- tab1 cards with bow -->
<rect x="17.500" y="14.200" width="15.500" height="14.500" fill="#5b3b3a"/>
<rect x="15" y="11.500" width="15.500" height="14.500" fill="#4b2b2a"/>
<path d="M17 15.500c2-1.500 4-.5 5.500 2 1.500-2.500 3.500-3.500 5.500-2v6.500c-2 1.500-4 .5-5.500-2-1.500 2.500-3.500 3.500-5.500 2z" fill="#f1d6d2"/>
<circle cx="22.700" cy="18.800" r="1.400" fill="#4b2b2a"/>
<!-- tab2 check -->
<rect x="51" y="15" width="15.500" height="14" fill="#6a4644"/>
<rect x="48.500" y="12.500" width="15.500" height="14" />
<path d="M51.500 19.500l3.500 3.500 6.500-8" fill="none" stroke="#f3d0cc" stroke-width="2.200"/>
<!-- tab3 refresh -->
<g fill="none" stroke="#4b2b2a" stroke-width="2.300"><path d="M84 18.500a5.800 5.800 0 0 1 10-3.300"/><path d="M96 21a5.800 5.800 0 0 1-10 3.300"/></g>
<path d="M91.500 11l5.500 3-4.500 4zM88.500 29l-5.500-3 4.500-4z"/>
<!-- tab4 pot -->
<ellipse cx="120.500" cy="21.500" rx="7.300" ry="6.700"/>
<path d="M114.500 19.500c3 2.500 9 2.500 12 0" stroke="#e9958e" stroke-width="1.300" fill="none"/>
<path d="M116.500 24.500h7" stroke="#e9958e" stroke-width="1" fill="none" stroke-dasharray="1.200 .8"/>
<path d="M113.500 17l-1-3 3 1.500z"/><path d="M121 13.500l3-2.500 1.500 3z"/>
<path d="M128 15.500c3-1 5 .5 5 3s-2 4.500-4.500 5l-.5-2c1.500-.5 2.500-1.500 2.500-2.800s-1-1.700-2-1.200z"/>
<!-- tab5 heart -->
<path d="M157.500 29c-5-3.800-8-7-8-10.500 0-2.800 2-4.700 4.300-4.700 1.600 0 2.900.8 3.700 2.200.8-1.400 2.100-2.200 3.700-2.200 2.300 0 4.300 1.900 4.300 4.700 0 3.500-3 6.700-8 10.500z"/>
<!-- tab6 gear -->
<path fill-rule="evenodd" d="M188.800 11.500h3.400l.6 2.600 1.500.7 2.300-1.400 2.400 2.400-1.400 2.300.7 1.500 2.600.6v3.400l-2.600.6-.7 1.500 1.400 2.300-2.400 2.400-2.300-1.400-1.500.7-.6 2.600h-3.400l-.6-2.600-1.500-.7-2.300 1.400-2.400-2.400 1.400-2.300-.7-1.500-2.600-.6v-3.400l2.600-.6.7-1.500-1.400-2.300 2.400-2.400 2.300 1.400 1.500-.7zM190.500 17.800a4.100 4.100 0 1 0 0 8.200 4.100 4.100 0 0 0 0-8.200z" transform="translate(190.500 20.400) scale(.84) translate(-190.500 -21.900)"/>
<!-- close -->
<path d="M217.500 11.700l9 9M226.500 11.700l-9 9" stroke="#4b3030" stroke-width="2.700" fill="none"/>
</g>
<g transform="translate(129.5 1.0) scale(1.0) rotate(14 7 7)"><path d="M4.500 2.500c-1.500-2 .5-3 2-1.500l1 1.500 1-1.500c1.500-1.500 3.500-.5 2 1.500z" fill="#fbe0db"/><rect x="0" y="2.500" width="15" height="4.500" rx=".8" fill="#eda299" stroke="#fbe0db" stroke-width="2.100"/><rect x="1.200" y="7" width="12.600" height="8" fill="#eda299" stroke="#fbe0db" stroke-width="2.100"/><path d="M7.500 2.500V15" stroke="#fbe0db" stroke-width="2.800"/></g>
<g transform="translate(162.5 1.5) scale(1.0) rotate(14 7 7)"><path d="M4.500 2.500c-1.500-2 .5-3 2-1.500l1 1.500 1-1.500c1.500-1.500 3.500-.5 2 1.500z" fill="#fbe0db"/><rect x="0" y="2.500" width="15" height="4.500" rx=".8" fill="#eda299" stroke="#fbe0db" stroke-width="2.100"/><rect x="1.200" y="7" width="12.600" height="8" fill="#eda299" stroke="#fbe0db" stroke-width="2.100"/><path d="M7.500 2.500V15" stroke="#fbe0db" stroke-width="2.800"/></g>
</svg>
<!-- slots -->
<div style="left:507.5px;top:388px;width:39.500px;height:39.500px;background:#ecaba1;border:1px solid #f2bdb4"></div><svg style="left:520.7px;top:401.500px" width="13" height="13" viewBox="0 0 13 13"><path d="M6.500 0v13M0 6.500h13" stroke="#f9d9d3" stroke-width="2.800"/></svg><div style="left:549.3px;top:388px;width:39.500px;height:39.500px;background:#ecaba1;border:1px solid #f2bdb4"></div><svg style="left:562.5px;top:401.500px" width="13" height="13" viewBox="0 0 13 13"><path d="M6.500 0v13M0 6.500h13" stroke="#f9d9d3" stroke-width="2.800"/></svg><div style="left:591.1px;top:388px;width:39.500px;height:39.500px;background:#ecaba1;border:1px solid #f2bdb4"></div><svg style="left:604.3000000000001px;top:401.500px" width="13" height="13" viewBox="0 0 13 13"><path d="M6.500 0v13M0 6.500h13" stroke="#f9d9d3" stroke-width="2.800"/></svg><div style="left:632.9px;top:388px;width:39.500px;height:39.500px;background:#ecaba1;border:1px solid #f2bdb4"></div><svg style="left:646.1px;top:401.500px" width="13" height="13" viewBox="0 0 13 13"><path d="M6.500 0v13M0 6.500h13" stroke="#f9d9d3" stroke-width="2.800"/></svg><div style="left:674.7px;top:388px;width:39.500px;height:39.500px;background:#ecaba1;border:1px solid #f2bdb4"></div><svg style="left:687.9000000000001px;top:401.500px" width="13" height="13" viewBox="0 0 13 13"><path d="M6.500 0v13M0 6.500h13" stroke="#f9d9d3" stroke-width="2.800"/></svg>
<div style="left:515px;top:439px;width:193px;height:5.500px;background:#f6d3cc"></div>
<div style="left:720.500px;top:388px;width:10.500px;height:211px;background:#5a4e47"></div>
<div style="left:532.0px;top:604px;width:40px;height:20px;background:#f5e8d0"></div><svg style="left:567.0px;top:604.500px" width="4.500" height="4.500" viewBox="0 0 5 5"><path d="M0 0h5v5z" fill="#8c847b"/></svg><div style="left:577.0px;top:604px;width:40px;height:20px;background:#f5e8d0"></div><svg style="left:612.0px;top:604.500px" width="4.500" height="4.500" viewBox="0 0 5 5"><path d="M0 0h5v5z" fill="#8c847b"/></svg><div style="left:622.0px;top:604px;width:40px;height:20px;background:#f5e8d0"></div><svg style="left:657.0px;top:604.500px" width="4.500" height="4.500" viewBox="0 0 5 5"><path d="M0 0h5v5z" fill="#8c847b"/></svg><div style="left:667.0px;top:604px;width:40px;height:20px;background:#f5e8d0"></div><svg style="left:702.0px;top:604.500px" width="4.500" height="4.500" viewBox="0 0 5 5"><path d="M0 0h5v5z" fill="#8c847b"/></svg>
<svg style="left:532px;top:604px" width="176" height="20" viewBox="0 0 176 20" fill="#4a4442">
<!-- shop -->
<path d="M14.500 3.500h11l1.500 4.500h-14z"/><path d="M13 8.500h14v2.200c-.8 1-2.700 1-3.500 0-.8 1-2.700 1-3.500 0-.8 1-2.700 1-3.500 0-.8 1-2.700 1-3.500 0z"/><path d="M14 12h12v5.500H14z"/><rect x="16" y="13" width="8" height="2.500" fill="#f6e6c8"/>
<!-- box -->
<path d="M60 3.500h10l2 3.500H58z"/><rect x="58" y="7.500" width="14" height="10.500"/><rect x="62.500" y="9" width="5" height="1.600" fill="#f6e6c8"/>
<!-- discord -->
<g transform="translate(110 10.800) scale(.9) translate(-110 -10.800)"><path d="M102 4.500c2-1 4-1.500 5-1.500l.7 1.300c1.500-.2 3.100-.2 4.600 0L113 3c1 0 3 .5 5 1.500 2.500 3.700 3.500 7.500 3 11.500-1.700 1.300-3.500 2-5.200 2.500l-1.200-2c.8-.3 1.500-.7 2.200-1.200-3.800 1.800-9.800 1.800-13.600 0 .7.500 1.400.9 2.200 1.200l-1.200 2c-1.700-.5-3.500-1.200-5.200-2.500-.5-4 .5-7.800 3-11.500z"/>
<ellipse cx="106.800" cy="11" rx="1.900" ry="2.200" fill="#f6e6c8"/><ellipse cx="113.200" cy="11" rx="1.900" ry="2.200" fill="#f6e6c8"/></g>
<!-- bell -->
<path d="M154.500 2.500c-3.200 0-4.500 2.600-4.500 5.700 0 3-.8 4.600-2.200 5.800h13.400c-1.400-1.200-2.200-2.800-2.200-5.800 0-3.100-1.300-5.700-4.500-5.700zm-1.700 12.700a1.700 1.700 0 0 0 3.400 0z"/>
</svg>

<!-- counter -->
<div style="left:565px;top:275.500px;width:80px;height:23px;background:#dfe5ee;border:1px solid #9aa1ac;box-shadow:0 0 0 .7px #3a3d45"><span class="t" style="left:5px;top:6px;font-family:'DejaVu Sans',sans-serif;font-size:10.800px;color:#333335;letter-spacing:.2px;-webkit-text-stroke:.3px #333335">178</span></div>
<div style="left:651px;top:275.500px;width:23.500px;height:23px;background:#e3e8ef;border:1px solid #9aa1ac;box-shadow:0 0 0 .7px #3a3d45"><svg style="left:4px;top:5px" width="14" height="12" viewBox="0 0 14 12"><path d="M0 1.500h14M0 6h14M0 10.500h14" stroke="#2c2c2e" stroke-width="2.100"/></svg></div>

<!-- bongo cat -->
<svg style="left:540px;top:205px" width="160" height="90" viewBox="0 0 1280 720">
<g stroke="#4b3436" stroke-width="15" stroke-linejoin="round" stroke-linecap="round">
<path d="M250 525C215 470 185 400 178 350C173 315 203 292 240 288C275 285 300 303 325 333C343 353 360 368 375 378C390 350 420 315 445 297C462 286 478 278 487 268C480 245 472 225 471 205C472 180 476 160 481 145C484 132 497 130 505 140C530 165 565 185 600 196C680 200 780 215 850 245C890 228 940 214 972 212C988 211 992 222 992 235C993 275 997 315 1003 350C1015 405 1035 470 1050 525Z" fill="#fefefe"/>
<path d="M835 525C800 480 770 410 755 340C750 308 780 288 815 290C860 293 900 330 940 378" fill="#fefefe"/>
</g>
<path d="M492 172C515 192 540 205 565 212C540 213 510 220 484 232C482 212 486 190 492 172Z" fill="#f6a9a2"/>
<path d="M872 284C900 268 935 255 962 250C960 290 963 335 970 370C945 335 912 305 872 284Z" fill="#f6a9a2"/>
<ellipse cx="255" cy="415" rx="42" ry="40" fill="#f4978e"/>
<circle cx="207" cy="342" r="19" fill="#f6b6b2"/><circle cx="262" cy="336" r="18" fill="#f6b6b2"/>
<ellipse cx="822" cy="422" rx="42" ry="40" fill="#f4978e"/>
<circle cx="828" cy="345" r="18" fill="#f6b6b2"/><circle cx="782" cy="368" r="16" fill="#f6b6b2"/>
<ellipse cx="395" cy="437" rx="38" ry="30" fill="#f4d6d8"/>
<circle cx="462" cy="416" r="26" fill="#3c2c2c"/><circle cx="745" cy="446" r="23" fill="#3c2c2c"/>
<path d="M515 425C523 455 570 460 580 430C592 460 638 458 650 428" fill="none" stroke="#3c2c2c" stroke-width="14" stroke-linecap="round"/>
<path d="M698 260L706 382L732 352L754 394L770 385L749 344L787 341Z" fill="#fefefe" stroke="#8d8d95" stroke-width="5"/>
</svg>
<!-- bubble -->
<svg style="left:480px;top:205px" width="130" height="40" viewBox="0 0 130 40"><path d="M7.500 5h108a3.500 3.500 0 0 1 3.500 3.500V27l1.600 7.400L111.200 29.500H7.500A3.500 3.500 0 0 1 4 26V8.500A3.500 3.500 0 0 1 7.500 5z" fill="#fefefe"/></svg>
<span class="t" style="left:495.500px;top:216px;font-family:'DejaVu Sans',sans-serif;font-size:12px;color:#3a3a3c;letter-spacing:.95px;transform:scaleX(1.1);transform-origin:0 0;-webkit-text-stroke:.3px #3a3a3c">Meow Meow</span>

</div>
</body></html>
